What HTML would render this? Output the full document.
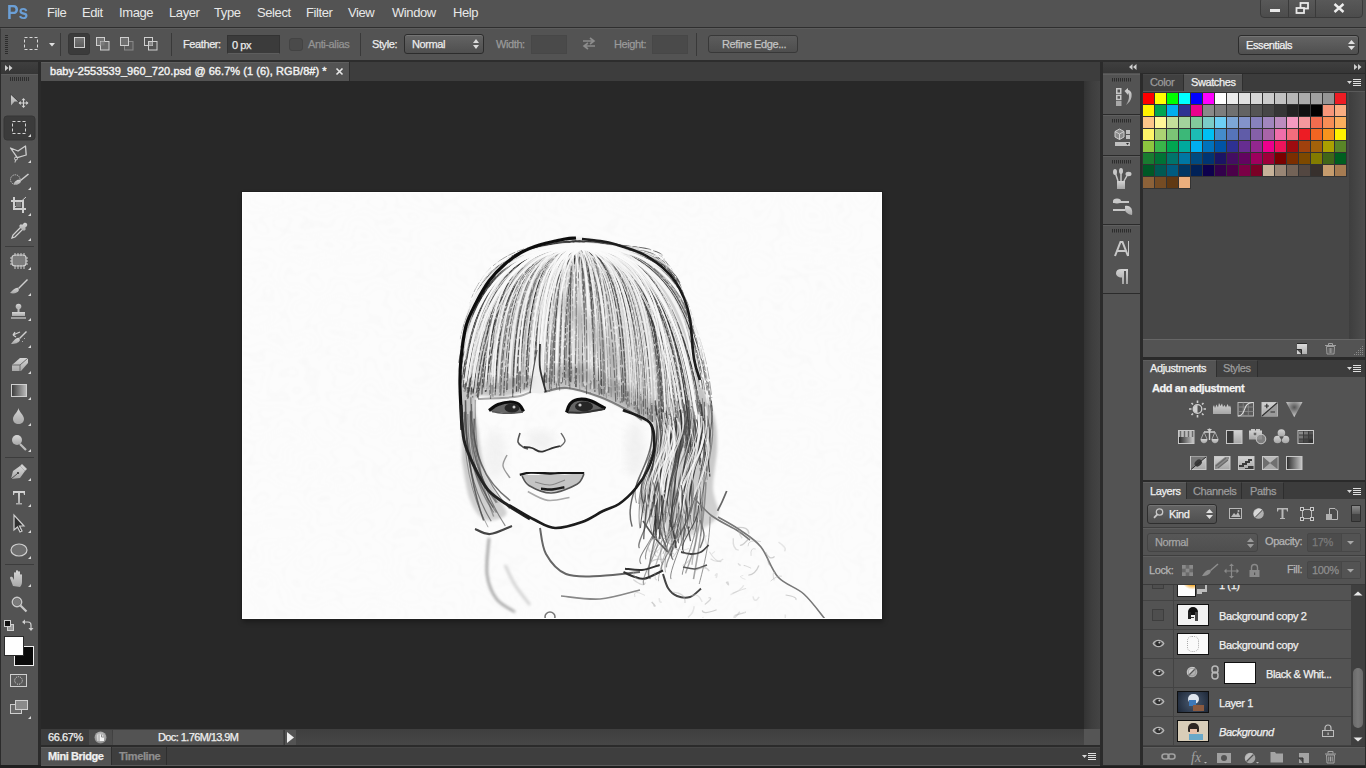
<!DOCTYPE html>
<html><head><meta charset="utf-8">
<style>
*{margin:0;padding:0;box-sizing:border-box}
html,body{width:1366px;height:768px;overflow:hidden;background:#282828;font-family:"Liberation Sans",sans-serif;color:#dcdcdc}
.a{position:absolute}
svg{position:absolute;overflow:visible}
.t{position:absolute;white-space:nowrap;font-size:11px;line-height:13px;letter-spacing:-0.4px;-webkit-text-stroke:0.25px currentColor}
#menubar span{position:absolute;top:5px;font-size:13px;line-height:15px;color:#e8e8e8;letter-spacing:-0.4px}
.sep{position:absolute;width:1px;background:#393939}
.field{position:absolute;background:#3b3b3b;border:1px solid #333;border-bottom-color:#5d5d5d}
.dd{position:absolute;border:1px solid #2c2c2c;border-radius:3px;background:linear-gradient(#646464,#4f4f4f);box-shadow:inset 0 1px 0 #747474}
.tabon{position:absolute;background:#535353;border-top:1px solid #5e5e5e}
.taboff{position:absolute;background:#3e3e3e;border-right:1px solid #2e2e2e}
.sw{position:absolute;width:11px;height:11px}
</style></head><body>
<!-- base frame -->
<div class="a" style="left:0;top:0;width:1366px;height:768px;background:#2a2a2a"></div>
<!-- menubar -->
<div id="menubar" class="a" style="left:0;top:0;width:1366px;height:27px;background:#535353">
 <span style="left:7px;top:1px;font-size:20px;line-height:22px;font-weight:bold;color:#6b9fd6;letter-spacing:0;transform:scaleX(0.87);transform-origin:left">Ps</span>
 <span style="left:47px">File</span>
 <span style="left:82px">Edit</span>
 <span style="left:119px">Image</span>
 <span style="left:169px">Layer</span>
 <span style="left:214px">Type</span>
 <span style="left:257px">Select</span>
 <span style="left:306px">Filter</span>
 <span style="left:348px">View</span>
 <span style="left:392px">Window</span>
 <span style="left:453px">Help</span>
</div>
<!-- window controls -->
<div class="a" style="left:1260px;top:-3px;width:103px;height:21px;border:1px solid #3a3a3a;border-radius:4px;background:linear-gradient(#5a5a5a,#4c4c4c)"></div>
<div class="a" style="left:1288px;top:0;width:1px;height:17px;background:#3a3a3a"></div>
<div class="a" style="left:1315px;top:0;width:1px;height:17px;background:#3a3a3a"></div>
<div class="a" style="left:1270px;top:9px;width:10px;height:3px;background:#e8e8e8"></div>
<svg style="left:1295px;top:1px" width="14" height="13"><rect x="5.5" y="2" width="7.5" height="5.5" fill="none" stroke="#e8e8e8" stroke-width="1.8"/><rect x="1.5" y="7" width="7.5" height="5" fill="#505050" stroke="#e8e8e8" stroke-width="1.8"/></svg>
<svg style="left:1333px;top:3px" width="12" height="10"><path d="M1.5 1 L10.5 9 M10.5 1 L1.5 9" stroke="#ececec" stroke-width="2.4"/></svg>

<!-- options bar -->
<div class="a" style="left:0;top:27px;width:1366px;height:1px;background:#2f2f2f"></div>
<div class="a" style="left:0;top:28px;width:1366px;height:32px;background:#535353;border-top:1px solid #5c5c5c;border-left:1px solid #3a3a3a"></div>
<div class="a" style="left:0;top:60px;width:1366px;height:2px;background:#2d2d2d"></div>
<!-- grip -->
<svg style="left:5px;top:35px" width="3" height="20"><g stroke="#2c2c2c" stroke-width="1"><path d="M0 0.5H3M0 2.5H3M0 4.5H3M0 6.5H3M0 8.5H3M0 10.5H3M0 12.5H3M0 14.5H3M0 16.5H3M0 18.5H3"/></g></svg>
<svg style="left:24px;top:37px" width="15" height="14"><rect x="0.5" y="0.5" width="13" height="12" fill="none" stroke="#d8d8d8" stroke-dasharray="3 2"/></svg>
<svg style="left:49px;top:43px" width="6" height="4"><path d="M0 0H6L3 3.5Z" fill="#e0e0e0"/></svg>
<div class="sep" style="left:60px;top:33px;height:23px"></div>
<div class="a" style="left:68px;top:33px;width:22px;height:22px;background:#3b3b3b;border-radius:3px;border:1px solid #373737"></div>
<svg style="left:74px;top:37px" width="11" height="11"><defs><linearGradient id="g1" x1="0" y1="0" x2="0" y2="1"><stop offset="0" stop-color="#777"/><stop offset="1" stop-color="#5a5a5a"/></linearGradient></defs><rect x="0.5" y="0.5" width="10" height="10" fill="url(#g1)" stroke="#d0d0d0"/></svg>
<svg style="left:96px;top:37px" width="14" height="14"><rect x="0.5" y="0.5" width="8" height="8" fill="#727272" stroke="#cfcfcf"/><rect x="4.5" y="4.5" width="8.5" height="8.5" fill="#6a6a6a" stroke="#cfcfcf"/><rect x="4.5" y="4.5" width="4" height="4" fill="#7a7a7a"/></svg>
<svg style="left:120px;top:37px" width="14" height="14"><rect x="4.5" y="4.5" width="8.5" height="8.5" fill="#5a5a5a" stroke="#8a8a8a"/><rect x="0.5" y="0.5" width="8" height="8" fill="#707070" stroke="#cfcfcf"/></svg>
<svg style="left:144px;top:37px" width="14" height="14"><rect x="0.5" y="0.5" width="8" height="8" fill="none" stroke="#cfcfcf"/><rect x="4.5" y="4.5" width="8.5" height="8.5" fill="none" stroke="#cfcfcf"/><rect x="5" y="5" width="3.5" height="3.5" fill="#888"/></svg>
<div class="sep" style="left:171px;top:33px;height:23px"></div>
<div class="t" style="left:183px;top:38px;color:#ececec">Feather:</div>
<div class="field" style="left:227px;top:35px;width:53px;height:19px"></div>
<div class="t" style="left:232px;top:39px;color:#ececec">0 px</div>
<div class="a" style="left:289px;top:38px;width:14px;height:13px;border-radius:3px;background:#4a4a4a;border:1px solid #434343"></div>
<div class="t" style="left:308px;top:38px;color:#939393">Anti-alias</div>
<div class="sep" style="left:360px;top:33px;height:23px"></div>
<div class="t" style="left:372px;top:38px;color:#ececec">Style:</div>
<div class="dd" style="left:404px;top:34px;width:80px;height:20px"></div>
<div class="t" style="left:412px;top:38px;color:#ececec">Normal</div>
<svg style="left:473px;top:38px" width="6" height="12"><path d="M0 5L3 1L6 5ZM0 7L3 11L6 7Z" fill="#dcdcdc"/></svg>
<div class="t" style="left:496px;top:38px;color:#9a9a9a">Width:</div>
<div class="a" style="left:531px;top:35px;width:36px;height:19px;background:#4a4a4a;border:1px solid #474747"></div>
<svg style="left:582px;top:37px" width="14" height="13"><path d="M1 4H11M8 1L12 4L8 7" fill="none" stroke="#8c8c8c" stroke-width="1.6"/><path d="M13 9H3M6 6L2 9L6 12" fill="none" stroke="#8c8c8c" stroke-width="1.6"/></svg>
<div class="t" style="left:614px;top:38px;color:#9a9a9a">Height:</div>
<div class="a" style="left:652px;top:35px;width:36px;height:19px;background:#4a4a4a;border:1px solid #474747"></div>
<div class="sep" style="left:696px;top:33px;height:23px"></div>
<div class="a" style="left:708px;top:35px;width:90px;height:18px;border:1px solid #383838;border-radius:3px;background:linear-gradient(#5c5c5c,#4e4e4e)"></div>
<div class="t" style="left:722px;top:38px;color:#c4c4c4">Refine Edge...</div>
<div class="dd" style="left:1238px;top:35px;width:121px;height:20px"></div>
<div class="t" style="left:1246px;top:39px;color:#f0f0f0">Essentials</div>
<svg style="left:1348px;top:39px" width="7" height="12"><path d="M0 5L3.5 1L7 5ZM0 7L3.5 11L7 7Z" fill="#e0e0e0"/></svg>

<!-- left toolbar -->
<div class="a" style="left:0;top:62px;width:38px;height:12px;background:linear-gradient(#3f3f3f,#363636)"></div>
<svg style="left:5px;top:65px" width="8" height="6"><path d="M0 0L3.5 3L0 6ZM4 0L7.5 3L4 6Z" fill="#cfcfcf"/></svg>
<div class="a" style="left:0;top:74px;width:38px;height:691px;background:#535353;border-top:1px solid #5c5c5c"></div>
<svg style="left:10px;top:77px" width="20" height="4"><path d="M0.5 0V4M2.5 0V4M4.5 0V4M6.5 0V4M8.5 0V4M10.5 0V4M12.5 0V4M14.5 0V4M16.5 0V4M18.5 0V4" stroke="#2e2e2e"/></svg>
<div class="a" style="left:38px;top:62px;width:3px;height:703px;background:#2b2b2b"></div>

<!-- TOOLS -->
<svg style="left:0;top:0" width="38" height="768">
<defs>
<linearGradient id="tg" x1="0" y1="0" x2="0" y2="1"><stop offset="0" stop-color="#d6d6d6"/><stop offset="1" stop-color="#a8a8a8"/></linearGradient>
<linearGradient id="tg2" x1="0" y1="0" x2="1" y2="0"><stop offset="0" stop-color="#3a3a3a"/><stop offset="1" stop-color="#bdbdbd"/></linearGradient>
</defs>
<rect x="4" y="116" width="31" height="24" rx="3" fill="#3b3b3b" stroke="#363636"/>
<g fill="#d8d8d8">
<!-- corner triangles -->
<path d="M28 137H31V134Z"/><path d="M28 163H31V160Z"/><path d="M28 190H31V187Z"/><path d="M28 216H31V213Z"/><path d="M28 241H31V238Z"/><path d="M28 270H31V267Z"/><path d="M28 296H31V293Z"/><path d="M28 321H31V318Z"/><path d="M28 348H31V345Z"/><path d="M28 374H31V371Z"/><path d="M28 400H31V397Z"/><path d="M28 426H31V423Z"/><path d="M28 452H31V449Z"/><path d="M28 481H31V478Z"/><path d="M28 507H31V504Z"/><path d="M28 533H31V530Z"/><path d="M28 559H31V556Z"/><path d="M28 587H31V584Z"/><path d="M28 719H31V716Z"/>
</g>
<!-- move -->
<path d="M11 94.5L18.5 101.5H14.5L11 105.5Z" fill="url(#tg)"/>
<path d="M10.5 94L18.8 101.8" stroke="#2e2e2e" stroke-width="0.8"/>
<path d="M23.5 99V107M19.5 103H27.5" stroke="#d4d4d4" stroke-width="1.1"/>
<path d="M23.5 98L21.5 100.3H25.5ZM23.5 108L21.5 105.7H25.5ZM18.5 103L20.8 101V105ZM28.5 103L26.2 101V105Z" fill="#d4d4d4"/>
<!-- marquee selected -->
<rect x="12.5" y="121.5" width="13" height="12" fill="none" stroke="#d4d4d4" stroke-dasharray="3 2"/>
<!-- lasso -->
<path d="M10.5 148L18 151L25.5 146L26.2 155L17.3 157.7Z" fill="none" stroke="#cfcfcf" stroke-width="1.3" stroke-linejoin="round"/>
<circle cx="16" cy="158.5" r="1.5" fill="none" stroke="#cfcfcf" stroke-width="1"/>
<path d="M15.5 160L15 162.5" stroke="#cfcfcf" stroke-width="1"/>
<!-- quick selection -->
<circle cx="15.3" cy="179.6" r="4.8" fill="none" stroke="#d8d8d8" stroke-width="1" stroke-dasharray="1 1"/>
<path d="M28 173.5L29 174.5L21 181L20 180Z" fill="#cfcfcf"/>
<path d="M20 180C17 179 14 182 13.5 184.5C17 185 20.5 184 21 181Z" fill="url(#tg)"/>
<!-- crop -->
<path d="M14 197V209H26M11 201H23V213" fill="none" stroke="#cfcfcf" stroke-width="2"/>
<path d="M15 207L26 197" stroke="#cfcfcf" stroke-width="1"/>
<rect x="16" y="202" width="5" height="5" fill="#7a7a7a"/>
<!-- eyedropper -->
<path d="M12 238L13 235L21 227L23 229L15 237Z" fill="none" stroke="#d0d0d0" stroke-width="1.3"/>
<path d="M19 226L24 231L26 229L25 228L27 226C28 224 26 222 24 223L22 225L21 224Z" fill="url(#tg)"/>
<!-- separator -->
<path d="M5 246.5H34" stroke="#3c3c3c"/>
<!-- healing -->
<rect x="12" y="255" width="14" height="11" rx="3" fill="#7c7c7c" stroke="#cfcfcf" stroke-width="1.2"/>
<path d="M15 253V256M18 253V256M21 253V256M24 253V256M15 265V269M18 265V269M21 265V269M24 265V269M10 258H12M10 261H12M10 264H12M26 258H28M26 261H28M26 264H28" stroke="#cfcfcf" stroke-width="1"/>
<!-- brush -->
<path d="M27 279L28 280L19 289L18 288Z" fill="#cfcfcf"/>
<path d="M18 288C16 287 13 290 10 293C14 294 18 293 19 290Z" fill="url(#tg)"/>
<!-- stamp -->
<circle cx="18.5" cy="306.5" r="2.8" fill="url(#tg)"/>
<path d="M17.5 308H19.5V312H17.5Z" fill="#bcbcbc"/>
<path d="M12 312H25V316H12Z" fill="url(#tg)"/>
<path d="M11 318H26" stroke="#cfcfcf" stroke-width="1.2"/>
<!-- history brush -->
<path d="M13 335L20 332M13 335L15 332M13 335L16 337" fill="none" stroke="#cfcfcf" stroke-width="1.3"/>
<path d="M26 331L27 332L20 339L19 338Z" fill="#cfcfcf"/>
<path d="M19 338C17 337 14 340 11 344C15 344 19 343 20 340Z" fill="url(#tg)"/>
<path d="M22 342L23 341M24 339L25 338" stroke="#cfcfcf" stroke-dasharray="1 1"/>
<!-- eraser -->
<path d="M12 365L20 358H28L28 363L21 371H12Z" fill="url(#tg)"/>
<path d="M12 365H20L28 358M20 365V371" fill="none" stroke="#6a6a6a" stroke-width="1"/>
<!-- gradient -->
<rect x="11.5" y="384.5" width="15" height="12" fill="url(#tg2)" stroke="#cfcfcf"/>
<!-- blur drop -->
<path d="M18.5 408C18 412 13 415 13 419C13 422 15.5 424 18.5 424C21.5 424 24 422 24 419C24 415 19 412 18.5 408Z" fill="url(#tg)"/>
<!-- dodge -->
<circle cx="17" cy="440" r="5" fill="url(#tg)"/>
<path d="M20 444L26 450" stroke="#bcbcbc" stroke-width="2.2"/>
<!-- separator -->
<path d="M5 457.5H34" stroke="#3c3c3c"/>
<!-- pen -->
<path d="M11 479L13 471L20 466L25 471L20 478Z" fill="url(#tg)"/>
<path d="M22 464L27 469L25 471L20 466Z" fill="#cfcfcf"/>
<circle cx="18" cy="473" r="1.1" fill="#333"/><path d="M11 479L17.5 473.5" stroke="#333" stroke-width="0.8"/>
<!-- type -->
<path d="M13 491H25V495H24L23.5 493H20V503H22V504.5H16V503H18V493H14.5L14 495H13Z" fill="url(#tg)"/>
<!-- path selection -->
<path d="M14 515V530L17.5 527L20 532L22 531L19.5 526H24Z" fill="#2e2e2e" stroke="#cfcfcf" stroke-width="1.2"/>
<!-- ellipse -->
<ellipse cx="19" cy="550" rx="8" ry="6" fill="#6e6e6e" stroke="#cfcfcf" stroke-width="1.2"/>
<!-- separator -->
<path d="M5 564.5H34" stroke="#3c3c3c"/>
<!-- hand -->
<path d="M13 586L10 578C10 577 12 576 13 578L14 580V573C14 572 16 572 16 573V578V571C16 570 18 570 18 571V578V572C18 571 20 571 20 572V579V575C20 574 22 574 22 575V582C22 584 21 586 20 587Z" fill="url(#tg)"/>
<!-- zoom -->
<circle cx="17" cy="602" r="4.6" fill="none" stroke="#c8c8c8" stroke-width="1.6"/>
<circle cx="17" cy="602" r="3.5" fill="#7a7a7a"/>
<path d="M20.5 605.5L26.5 611.5" stroke="#c8c8c8" stroke-width="2.2"/>
<!-- default colors -->
<rect x="7.5" y="624.5" width="6" height="6" fill="#9a9a9a" stroke="#cfcfcf"/>
<rect x="4.5" y="620.5" width="6" height="6" fill="#111" stroke="#cfcfcf"/>
<!-- swap -->
<path d="M23 622H28C30 622 31 623 31 625V629" fill="none" stroke="#cfcfcf" stroke-width="1.2"/>
<path d="M22 622L25 619.5V624.5ZM31 631L28.5 628H33.5Z" fill="#cfcfcf"/>
<!-- colors -->
<rect x="14.5" y="646.5" width="19" height="19" fill="#0a0a0a" stroke="#f0f0f0"/>
<rect x="4.5" y="636.5" width="19" height="19" fill="#fefefe" stroke="#2a2a2a"/>
<!-- quick mask -->
<rect x="10.5" y="674.5" width="16" height="12" fill="#5a5a5a" stroke="#cfcfcf"/>
<circle cx="18.5" cy="680.5" r="3.8" fill="none" stroke="#e0e0e0" stroke-dasharray="1 1.1"/>
<!-- screen mode -->
<rect x="10.5" y="704.5" width="11" height="9" fill="#6a6a6a" stroke="#cfcfcf"/>
<rect x="15.5" y="700.5" width="12" height="9" fill="#8a8a8a" stroke="#cfcfcf"/>
</svg>

<div class="a" style="left:0;top:61px;width:1px;height:707px;background:#2b2b2b"></div>
<!-- document tab row -->
<div class="a" style="left:41px;top:62px;width:1059px;height:19px;background:#3d3d3d"></div>
<div class="tabon" style="left:41px;top:62px;width:308px;height:19px"></div>
<div class="a" style="left:349px;top:62px;width:1px;height:19px;background:#2e2e2e"></div>
<div class="t" id="doctab" style="left:50px;top:65px;font-size:11px;color:#f2f2f2;letter-spacing:0.05px;-webkit-text-stroke:0.4px #f2f2f2">baby-2553539_960_720.psd @ 66.7% (1 (6), RGB/8#) *</div>
<svg style="left:336px;top:68px" width="7" height="7"><path d="M0.5 0.5L6.5 6.5M6.5 0.5L0.5 6.5" stroke="#e8e8e8" stroke-width="1.6"/></svg>

<!-- canvas -->
<div class="a" style="left:41px;top:81px;width:1043px;height:648px;background:#282828"></div>
<div class="a" style="left:1084px;top:81px;width:16px;height:648px;background:linear-gradient(90deg,#333 0%,#3e3e3e 50%,#444 100%)"></div>
<!-- status bar -->
<div class="a" style="left:41px;top:729px;width:1043px;height:16px;background:linear-gradient(#3f3f3f,#474747)"></div>
<div class="a" style="left:1084px;top:729px;width:16px;height:16px;background:#555"></div>
<div class="a" style="left:41px;top:729px;width:48px;height:16px;background:#3c3c3c"></div>
<div class="t" style="left:48px;top:731px;color:#f0f0f0">66.67%</div>
<div class="a" style="left:89px;top:730px;width:23px;height:15px;background:#4c4c4c"></div>
<svg style="left:94px;top:731px" width="13" height="13"><defs><radialGradient id="sg" cx="0.5" cy="0.4" r="0.6"><stop offset="0" stop-color="#d8d8d8"/><stop offset="1" stop-color="#8a8a8a"/></radialGradient></defs><circle cx="6.5" cy="6.5" r="6" fill="url(#sg)"/><path d="M3.5 3.5H7.5L10 6V10H3.5Z" fill="#f4f4f4"/><path d="M5 3.5V10" stroke="#777" stroke-width="0.8"/><path d="M7.5 3.5V6H10" fill="none" stroke="#777" stroke-width="0.8"/></svg>
<div class="a" style="left:113px;top:730px;width:170px;height:15px;background:#535353"></div>
<div class="t" style="left:158px;top:731px;color:#f0f0f0;letter-spacing:-0.6px">Doc: 1.76M/13.9M</div>
<div class="a" style="left:284px;top:730px;width:12px;height:15px;background:#535353;border-left:1px solid #3a3a3a"></div>
<svg style="left:287px;top:732px" width="7" height="11"><path d="M0 0L7 5.5L0 11Z" fill="#f0f0f0"/></svg>
<div class="a" style="left:41px;top:745px;width:1059px;height:2px;background:#2b2b2b"></div>
<!-- mini bridge bar -->
<div class="a" style="left:41px;top:747px;width:1059px;height:18px;background:#3e3e3e;border-top:1px solid #464646"></div>
<div class="a" style="left:41px;top:765px;width:1059px;height:1px;background:#5a5a5a"></div>
<div class="tabon" style="left:41px;top:747px;width:70px;height:18px"></div>
<div class="a" style="left:111px;top:747px;width:1px;height:18px;background:#2e2e2e"></div>
<div class="t" style="left:48px;top:750px;font-weight:bold;color:#f0f0f0">Mini Bridge</div>
<div class="t" style="left:119px;top:750px;font-weight:bold;color:#8e8e8e">Timeline</div>
<div class="a" style="left:166px;top:747px;width:1px;height:18px;background:#2e2e2e"></div>
<svg style="left:1082px;top:752px" width="14" height="9"><path d="M0 3H5L2.5 6Z" fill="#d8d8d8"/><path d="M6 1.5H14M6 3.5H14M6 5.5H14M6 7.5H14" stroke="#e0e0e0"/></svg>
<div class="a" style="left:0;top:766px;width:1366px;height:2px;background:#1f1f1f"></div>
<div class="a" style="left:0;top:765px;width:41px;height:1px;background:#1f1f1f"></div>
<div class="a" style="left:1100px;top:765px;width:266px;height:1px;background:#2b2b2b"></div>

<!-- right dock -->
<div class="a" style="left:1100px;top:62px;width:3px;height:703px;background:#2b2b2b"></div>
<div class="a" style="left:1103px;top:62px;width:263px;height:11px;background:linear-gradient(#3f3f3f,#363636)"></div>
<svg style="left:1129px;top:64px" width="8" height="6"><path d="M3.5 0L0 3L3.5 6ZM7.5 0L4 3L7.5 6Z" fill="#cfcfcf"/></svg>
<svg style="left:1354px;top:64px" width="8" height="6"><path d="M0 0L3.5 3L0 6ZM4 0L7.5 3L4 6Z" fill="#cfcfcf"/></svg>
<div class="a" style="left:1103px;top:73px;width:37px;height:692px;background:#535353"></div>
<div class="a" style="left:1140px;top:73px;width:3px;height:692px;background:#2b2b2b"></div>
<div class="a" style="left:1365px;top:62px;width:1px;height:706px;background:#2b2b2b"></div>

<!-- DOCK GROUPS -->
<div class="a" style="left:1103px;top:74px;width:37px;height:691px;background:#535353"></div>
<div class="a" style="left:1103px;top:114px;width:37px;height:1px;background:#2b2b2b"></div>
<div class="a" style="left:1103px;top:155px;width:37px;height:1px;background:#2b2b2b"></div>
<div class="a" style="left:1103px;top:224px;width:37px;height:1px;background:#2b2b2b"></div>
<div class="a" style="left:1103px;top:293px;width:37px;height:1px;background:#2b2b2b"></div>
<div class="a" style="left:1103px;top:74px;width:37px;height:1px;background:#5f5f5f"></div>
<div class="a" style="left:1103px;top:115px;width:37px;height:1px;background:#5f5f5f"></div>
<div class="a" style="left:1103px;top:156px;width:37px;height:1px;background:#5f5f5f"></div>
<div class="a" style="left:1103px;top:225px;width:37px;height:1px;background:#5f5f5f"></div>
<svg style="left:1103px;top:0" width="37" height="300">
<defs><linearGradient id="dg" x1="0" y1="0" x2="0" y2="1"><stop offset="0" stop-color="#d4d4d4"/><stop offset="1" stop-color="#a4a4a4"/></linearGradient></defs>
<g stroke="#2c2c2c"><path d="M9.5 78V81.5M11.5 78V81.5M13.5 78V81.5M15.5 78V81.5M17.5 78V81.5M19.5 78V81.5M21.5 78V81.5M23.5 78V81.5M25.5 78V81.5M27.5 78V81.5"/>
<path d="M9.5 119V122.5M11.5 119V122.5M13.5 119V122.5M15.5 119V122.5M17.5 119V122.5M19.5 119V122.5M21.5 119V122.5M23.5 119V122.5M25.5 119V122.5M27.5 119V122.5"/>
<path d="M9.5 160V163.5M11.5 160V163.5M13.5 160V163.5M15.5 160V163.5M17.5 160V163.5M19.5 160V163.5M21.5 160V163.5M23.5 160V163.5M25.5 160V163.5M27.5 160V163.5"/>
<path d="M9.5 229V232.5M11.5 229V232.5M13.5 229V232.5M15.5 229V232.5M17.5 229V232.5M19.5 229V232.5M21.5 229V232.5M23.5 229V232.5M25.5 229V232.5M27.5 229V232.5"/></g>
<!-- history -->
<rect x="13" y="88" width="5.5" height="6" fill="#c8c8c8"/><rect x="14.5" y="89.5" width="2.5" height="3" fill="#555"/>
<rect x="13" y="94.7" width="5.5" height="5.5" fill="#c8c8c8"/><rect x="14.5" y="96.2" width="2.5" height="2.5" fill="#555"/>
<rect x="13" y="101" width="5.5" height="5" fill="#a8a8a8"/>
<path d="M21.5 91L25 88V90C28.5 90.5 29 94 28.5 97C28 100 26 103 23 105C25 102 26 99 26 96.5C26 94 25 93 25 93V95Z" fill="url(#dg)"/>
<!-- 3d -->
<path d="M12 131.5L16.5 129L21 131.5V137L16.5 139.5L12 137Z" fill="#8a8a8a" stroke="#cfcfcf"/>
<path d="M12 131.5L16.5 134L21 131.5M16.5 134V139.5" fill="none" stroke="#cfcfcf"/>
<rect x="23" y="130" width="4" height="4" fill="#c0c0c0"/><rect x="23" y="135" width="4" height="4" fill="#c0c0c0"/>
<rect x="12" y="142" width="15" height="4" fill="#c0c0c0"/><path d="M23 143H26L24.5 145Z" fill="#2a2a2a"/>
<!-- brushes -->
<path d="M14 181H22V189H14Z" fill="url(#dg)"/>
<path d="M15 181L12 172M18 181L18 171M21 181L25 174" stroke="#c8c8c8" stroke-width="1.5"/>
<ellipse cx="12" cy="172" rx="2" ry="3" fill="#c8c8c8"/><ellipse cx="18" cy="171" rx="2" ry="3" fill="#c8c8c8"/><ellipse cx="25.5" cy="174" rx="3" ry="2.2" fill="#c8c8c8"/>
<!-- brush presets -->
<path d="M10 202H26M10 210H22" stroke="#c8c8c8" stroke-width="2"/>
<ellipse cx="14" cy="201" rx="4" ry="2.5" fill="#c8c8c8"/>
<path d="M22 206C28 205 30 210 29 215C26 215 22 212 22 210Z" fill="url(#dg)"/>
<!-- character -->
<path d="M12 256L17.5 242H19.5L25 256M14.2 251H22.8" fill="none" stroke="#c8c8c8" stroke-width="2"/>
<path d="M25.5 241V256" stroke="#c8c8c8" stroke-width="1"/>
<!-- paragraph -->
<path d="M18.5 269H25V284H23V271H21V284H19V277.5C15 277.5 13 275.5 13 273.2C13 270.5 15 269 18.5 269Z" fill="url(#dg)"/>
</svg>

<!-- SWATCHES PANEL -->
<div class="a" style="left:1143px;top:74px;width:222px;height:17px;background:#3c3c3c"></div>
<div class="taboff" style="left:1143px;top:74px;width:41px;height:17px;background:#404040;border-top:1px solid #474747"></div>
<div class="tabon" style="left:1184px;top:74px;width:58px;height:18px"></div>
<div class="a" style="left:1242px;top:74px;width:1px;height:17px;background:#2f2f2f"></div>
<div class="t" style="left:1150px;top:76px;color:#9c9c9c">Color</div>
<div class="t" style="left:1191px;top:76px;color:#f0f0f0">Swatches</div>
<svg style="left:1347px;top:78px" width="14" height="9"><path d="M0 3H5L2.5 6Z" fill="#d8d8d8"/><path d="M6 1.5H14M6 3.5H14M6 5.5H14M6 7.5H14" stroke="#e0e0e0"/></svg>
<div class="a" style="left:1143px;top:91px;width:222px;height:248px;background:#474747;border-top:1px solid #5a5a5a"></div>
<div class="a" style="left:1349px;top:92px;width:16px;height:247px;background:linear-gradient(90deg,#3e3e3e,#474747 60%,#4d4d4d)"></div>
<div id="swatches"><div class="a" style="left:1142px;top:92px;width:205px;height:85px;background:#333"></div>
<div class="a" style="left:1142px;top:176px;width:49px;height:13px;background:#333"></div>
<div class="sw" style="left:1143px;top:93px;background:rgb(255, 0, 0)"></div>
<div class="sw" style="left:1155px;top:93px;background:rgb(255, 255, 0)"></div>
<div class="sw" style="left:1167px;top:93px;background:rgb(0, 255, 0)"></div>
<div class="sw" style="left:1179px;top:93px;background:rgb(0, 255, 255)"></div>
<div class="sw" style="left:1191px;top:93px;background:rgb(0, 0, 255)"></div>
<div class="sw" style="left:1203px;top:93px;background:rgb(255, 0, 255)"></div>
<div class="sw" style="left:1215px;top:93px;background:rgb(255, 255, 255)"></div>
<div class="sw" style="left:1227px;top:93px;background:rgb(235, 235, 235)"></div>
<div class="sw" style="left:1239px;top:93px;background:rgb(224, 224, 224)"></div>
<div class="sw" style="left:1251px;top:93px;background:rgb(215, 215, 215)"></div>
<div class="sw" style="left:1263px;top:93px;background:rgb(204, 204, 204)"></div>
<div class="sw" style="left:1275px;top:93px;background:rgb(194, 194, 194)"></div>
<div class="sw" style="left:1287px;top:93px;background:rgb(183, 183, 183)"></div>
<div class="sw" style="left:1299px;top:93px;background:rgb(172, 172, 172)"></div>
<div class="sw" style="left:1311px;top:93px;background:rgb(161, 161, 161)"></div>
<div class="sw" style="left:1323px;top:93px;background:rgb(149, 149, 149)"></div>
<div class="sw" style="left:1335px;top:93px;background:rgb(237, 28, 36)"></div>
<div class="sw" style="left:1143px;top:105px;background:rgb(255, 242, 0)"></div>
<div class="sw" style="left:1155px;top:105px;background:rgb(0, 166, 81)"></div>
<div class="sw" style="left:1167px;top:105px;background:rgb(0, 174, 239)"></div>
<div class="sw" style="left:1179px;top:105px;background:rgb(46, 49, 146)"></div>
<div class="sw" style="left:1191px;top:105px;background:rgb(236, 0, 140)"></div>
<div class="sw" style="left:1203px;top:105px;background:rgb(137, 137, 137)"></div>
<div class="sw" style="left:1215px;top:105px;background:rgb(125, 125, 125)"></div>
<div class="sw" style="left:1227px;top:105px;background:rgb(112, 112, 112)"></div>
<div class="sw" style="left:1239px;top:105px;background:rgb(99, 99, 99)"></div>
<div class="sw" style="left:1251px;top:105px;background:rgb(85, 85, 85)"></div>
<div class="sw" style="left:1263px;top:105px;background:rgb(70, 70, 70)"></div>
<div class="sw" style="left:1275px;top:105px;background:rgb(54, 54, 54)"></div>
<div class="sw" style="left:1287px;top:105px;background:rgb(35, 35, 35)"></div>
<div class="sw" style="left:1299px;top:105px;background:rgb(17, 17, 17)"></div>
<div class="sw" style="left:1311px;top:105px;background:rgb(0, 0, 0)"></div>
<div class="sw" style="left:1323px;top:105px;background:rgb(246, 150, 121)"></div>
<div class="sw" style="left:1335px;top:105px;background:rgb(249, 173, 129)"></div>
<div class="sw" style="left:1143px;top:117px;background:rgb(253, 198, 137)"></div>
<div class="sw" style="left:1155px;top:117px;background:rgb(255, 247, 153)"></div>
<div class="sw" style="left:1167px;top:117px;background:rgb(196, 223, 155)"></div>
<div class="sw" style="left:1179px;top:117px;background:rgb(163, 211, 156)"></div>
<div class="sw" style="left:1191px;top:117px;background:rgb(130, 202, 156)"></div>
<div class="sw" style="left:1203px;top:117px;background:rgb(122, 204, 200)"></div>
<div class="sw" style="left:1215px;top:117px;background:rgb(109, 207, 246)"></div>
<div class="sw" style="left:1227px;top:117px;background:rgb(125, 167, 216)"></div>
<div class="sw" style="left:1239px;top:117px;background:rgb(131, 147, 202)"></div>
<div class="sw" style="left:1251px;top:117px;background:rgb(135, 129, 189)"></div>
<div class="sw" style="left:1263px;top:117px;background:rgb(161, 134, 190)"></div>
<div class="sw" style="left:1275px;top:117px;background:rgb(189, 140, 191)"></div>
<div class="sw" style="left:1287px;top:117px;background:rgb(244, 154, 193)"></div>
<div class="sw" style="left:1299px;top:117px;background:rgb(245, 152, 157)"></div>
<div class="sw" style="left:1311px;top:117px;background:rgb(242, 108, 79)"></div>
<div class="sw" style="left:1323px;top:117px;background:rgb(246, 142, 86)"></div>
<div class="sw" style="left:1335px;top:117px;background:rgb(251, 175, 93)"></div>
<div class="sw" style="left:1143px;top:129px;background:rgb(255, 245, 104)"></div>
<div class="sw" style="left:1155px;top:129px;background:rgb(172, 211, 115)"></div>
<div class="sw" style="left:1167px;top:129px;background:rgb(124, 197, 118)"></div>
<div class="sw" style="left:1179px;top:129px;background:rgb(60, 184, 120)"></div>
<div class="sw" style="left:1191px;top:129px;background:rgb(28, 187, 180)"></div>
<div class="sw" style="left:1203px;top:129px;background:rgb(0, 191, 243)"></div>
<div class="sw" style="left:1215px;top:129px;background:rgb(68, 140, 203)"></div>
<div class="sw" style="left:1227px;top:129px;background:rgb(86, 116, 185)"></div>
<div class="sw" style="left:1239px;top:129px;background:rgb(96, 92, 168)"></div>
<div class="sw" style="left:1251px;top:129px;background:rgb(133, 96, 168)"></div>
<div class="sw" style="left:1263px;top:129px;background:rgb(168, 100, 168)"></div>
<div class="sw" style="left:1275px;top:129px;background:rgb(240, 110, 170)"></div>
<div class="sw" style="left:1287px;top:129px;background:rgb(242, 109, 125)"></div>
<div class="sw" style="left:1299px;top:129px;background:rgb(237, 28, 36)"></div>
<div class="sw" style="left:1311px;top:129px;background:rgb(242, 101, 34)"></div>
<div class="sw" style="left:1323px;top:129px;background:rgb(247, 148, 29)"></div>
<div class="sw" style="left:1335px;top:129px;background:rgb(255, 242, 0)"></div>
<div class="sw" style="left:1143px;top:141px;background:rgb(141, 198, 63)"></div>
<div class="sw" style="left:1155px;top:141px;background:rgb(57, 181, 74)"></div>
<div class="sw" style="left:1167px;top:141px;background:rgb(0, 166, 81)"></div>
<div class="sw" style="left:1179px;top:141px;background:rgb(0, 169, 157)"></div>
<div class="sw" style="left:1191px;top:141px;background:rgb(0, 174, 239)"></div>
<div class="sw" style="left:1203px;top:141px;background:rgb(0, 114, 188)"></div>
<div class="sw" style="left:1215px;top:141px;background:rgb(0, 84, 166)"></div>
<div class="sw" style="left:1227px;top:141px;background:rgb(46, 49, 146)"></div>
<div class="sw" style="left:1239px;top:141px;background:rgb(102, 45, 145)"></div>
<div class="sw" style="left:1251px;top:141px;background:rgb(146, 39, 143)"></div>
<div class="sw" style="left:1263px;top:141px;background:rgb(236, 0, 140)"></div>
<div class="sw" style="left:1275px;top:141px;background:rgb(237, 20, 91)"></div>
<div class="sw" style="left:1287px;top:141px;background:rgb(158, 11, 15)"></div>
<div class="sw" style="left:1299px;top:141px;background:rgb(160, 65, 13)"></div>
<div class="sw" style="left:1311px;top:141px;background:rgb(163, 98, 10)"></div>
<div class="sw" style="left:1323px;top:141px;background:rgb(171, 160, 0)"></div>
<div class="sw" style="left:1335px;top:141px;background:rgb(89, 133, 39)"></div>
<div class="sw" style="left:1143px;top:153px;background:rgb(25, 123, 48)"></div>
<div class="sw" style="left:1155px;top:153px;background:rgb(0, 114, 54)"></div>
<div class="sw" style="left:1167px;top:153px;background:rgb(0, 116, 107)"></div>
<div class="sw" style="left:1179px;top:153px;background:rgb(0, 118, 163)"></div>
<div class="sw" style="left:1191px;top:153px;background:rgb(0, 74, 128)"></div>
<div class="sw" style="left:1203px;top:153px;background:rgb(0, 52, 113)"></div>
<div class="sw" style="left:1215px;top:153px;background:rgb(27, 20, 100)"></div>
<div class="sw" style="left:1227px;top:153px;background:rgb(68, 14, 98)"></div>
<div class="sw" style="left:1239px;top:153px;background:rgb(99, 4, 96)"></div>
<div class="sw" style="left:1251px;top:153px;background:rgb(158, 0, 93)"></div>
<div class="sw" style="left:1263px;top:153px;background:rgb(158, 0, 57)"></div>
<div class="sw" style="left:1275px;top:153px;background:rgb(121, 0, 0)"></div>
<div class="sw" style="left:1287px;top:153px;background:rgb(123, 46, 0)"></div>
<div class="sw" style="left:1299px;top:153px;background:rgb(125, 73, 0)"></div>
<div class="sw" style="left:1311px;top:153px;background:rgb(130, 123, 0)"></div>
<div class="sw" style="left:1323px;top:153px;background:rgb(64, 102, 24)"></div>
<div class="sw" style="left:1335px;top:153px;background:rgb(0, 94, 32)"></div>
<div class="sw" style="left:1143px;top:165px;background:rgb(0, 88, 38)"></div>
<div class="sw" style="left:1155px;top:165px;background:rgb(0, 89, 82)"></div>
<div class="sw" style="left:1167px;top:165px;background:rgb(0, 91, 127)"></div>
<div class="sw" style="left:1179px;top:165px;background:rgb(0, 54, 99)"></div>
<div class="sw" style="left:1191px;top:165px;background:rgb(0, 33, 87)"></div>
<div class="sw" style="left:1203px;top:165px;background:rgb(13, 0, 76)"></div>
<div class="sw" style="left:1215px;top:165px;background:rgb(50, 0, 75)"></div>
<div class="sw" style="left:1227px;top:165px;background:rgb(75, 0, 73)"></div>
<div class="sw" style="left:1239px;top:165px;background:rgb(123, 0, 70)"></div>
<div class="sw" style="left:1251px;top:165px;background:rgb(122, 0, 38)"></div>
<div class="sw" style="left:1263px;top:165px;background:rgb(199, 178, 153)"></div>
<div class="sw" style="left:1275px;top:165px;background:rgb(153, 134, 117)"></div>
<div class="sw" style="left:1287px;top:165px;background:rgb(115, 99, 87)"></div>
<div class="sw" style="left:1299px;top:165px;background:rgb(83, 71, 65)"></div>
<div class="sw" style="left:1311px;top:165px;background:rgb(55, 48, 45)"></div>
<div class="sw" style="left:1323px;top:165px;background:rgb(198, 156, 109)"></div>
<div class="sw" style="left:1335px;top:165px;background:rgb(166, 124, 82)"></div>
<div class="sw" style="left:1143px;top:177px;background:rgb(140, 98, 57)"></div>
<div class="sw" style="left:1155px;top:177px;background:rgb(117, 76, 36)"></div>
<div class="sw" style="left:1167px;top:177px;background:rgb(96, 57, 19)"></div>
<div class="sw" style="left:1179px;top:177px;background:rgb(235, 175, 125)"></div></div>
<div class="a" style="left:1143px;top:339px;width:222px;height:18px;background:#535353;border-top:1px solid #666"></div>
<svg style="left:1296px;top:343px" width="12" height="12"><defs><linearGradient id="ng" x1="0" y1="0" x2="0" y2="1"><stop offset="0" stop-color="#e0e0e0"/><stop offset="1" stop-color="#b0b0b0"/></linearGradient></defs><rect x="1" y="0" width="10" height="11" fill="url(#ng)"/><path d="M1 0H11V1H1Z" fill="#2a2a2a"/><path d="M0.5 6.5H5.5V11.5" fill="#535353" stroke="#2a2a2a"/><path d="M1 7L5 11H1Z" fill="#d0d0d0"/></svg>
<svg style="left:1325px;top:343px" width="12" height="12"><path d="M0 2.5H11M3.5 2V0.5H7.5V2" fill="none" stroke="#a0a0a0"/><path d="M1.5 3.5H9.5L9 11H2Z" fill="none" stroke="#a0a0a0"/><path d="M4.2 5V10M5.5 5V10M6.8 5V10" stroke="#a0a0a0" stroke-width="0.8"/></svg>
<svg style="left:1354px;top:346px" width="10" height="10"><g fill="#8a8a8a"><rect x="8" y="0" width="1" height="1"/><rect x="6" y="2" width="1" height="1"/><rect x="8" y="2" width="1" height="1"/><rect x="4" y="4" width="1" height="1"/><rect x="6" y="4" width="1" height="1"/><rect x="8" y="4" width="1" height="1"/><rect x="2" y="6" width="1" height="1"/><rect x="4" y="6" width="1" height="1"/><rect x="6" y="6" width="1" height="1"/><rect x="8" y="6" width="1" height="1"/><rect x="0" y="8" width="1" height="1"/><rect x="2" y="8" width="1" height="1"/><rect x="4" y="8" width="1" height="1"/><rect x="6" y="8" width="1" height="1"/><rect x="8" y="8" width="1" height="1"/></g></svg>

<!-- ADJUSTMENTS PANEL -->
<div class="a" style="left:1143px;top:360px;width:222px;height:17px;background:#3c3c3c"></div>
<div class="tabon" style="left:1143px;top:360px;width:73px;height:17px"></div>
<div class="taboff" style="left:1216px;top:360px;width:42px;height:17px;background:#404040;border-top:1px solid #474747;border-left:1px solid #2f2f2f"></div>
<div class="t" style="left:1150px;top:362px;color:#f0f0f0">Adjustments</div>
<div class="t" style="left:1223px;top:362px;color:#9c9c9c">Styles</div>
<svg style="left:1347px;top:364px" width="14" height="9"><path d="M0 3H5L2.5 6Z" fill="#d8d8d8"/><path d="M6 1.5H14M6 3.5H14M6 5.5H14M6 7.5H14" stroke="#e0e0e0"/></svg>
<div class="a" style="left:1143px;top:377px;width:222px;height:103px;background:#535353"></div>
<div class="t" style="left:1152px;top:382px;font-weight:bold;color:#f4f4f4">Add an adjustment</div>
<div id="adjicons"><svg style="left:1170px;top:395px" width="150" height="80">
<defs>
<linearGradient id="ag" x1="0" y1="0" x2="0" y2="1"><stop offset="0" stop-color="#d2d2d2"/><stop offset="1" stop-color="#a6a6a6"/></linearGradient>
<linearGradient id="agh" x1="0" y1="0" x2="1" y2="0"><stop offset="0" stop-color="#2a2a2a"/><stop offset="1" stop-color="#c8c8c8"/></linearGradient>
<radialGradient id="avr" cx="0.5" cy="0.35" r="0.6"><stop offset="0" stop-color="#555"/><stop offset="1" stop-color="#c8c8c8"/></radialGradient>
</defs>
<!-- sun -->
<circle cx="27.5" cy="14" r="4.3" fill="none" stroke="#cfcfcf" stroke-width="1.3"/>
<path d="M27.5 10V18A4 4 0 0 1 27.5 10Z" fill="#cfcfcf"/>
<g stroke="#cfcfcf" stroke-width="1.6"><path d="M27.5 5.5V8M27.5 20V22.5M19 14H21.5M33.5 14H36M21.5 8L23 9.5M32 18.5L33.5 20M21.5 20L23 18.5M32 9.5L33.5 8"/></g>
<!-- levels -->
<path d="M43 19V12L44 10L45 13L46.5 9.5L48 12.5L49 8L50.5 11L52 8.5L53 12L54.5 10L56 12.5L57.5 9L59 12L60 10.5L61 13V19Z" fill="url(#ag)"/>
<!-- curves -->
<rect x="68" y="7.5" width="15.5" height="13.5" fill="#5a5a5a" stroke="#b8b8b8"/>
<path d="M73.2 7.5V21M78.3 7.5V21M68 12H83.5M68 16.5H83.5" stroke="#8a8a8a" stroke-width="0.8"/>
<path d="M68 21C74 21 74 14 76 11C78 8 80 7.5 83.5 7.5" fill="none" stroke="#e0e0e0" stroke-width="1.1"/>
<!-- exposure -->
<rect x="92" y="7.5" width="15.5" height="13.5" fill="url(#ag)" stroke="#c8c8c8"/>
<path d="M92 21L107.5 7.5V21Z" fill="#9a9a9a"/>
<path d="M92 21L107.5 7.5" stroke="#2e2e2e" stroke-width="1.2"/>
<path d="M94.5 11H99M96.8 8.7V13.3M100.5 17H105" stroke="#2e2e2e" stroke-width="1.2"/>
<!-- vibrance -->
<path d="M116 7H132.5L124.25 22.3Z" fill="url(#avr)"/>
<!-- hue/sat -->
<rect x="8.5" y="35.5" width="15.5" height="13" fill="#9a9a9a" stroke="#c8c8c8"/>
<rect x="9" y="36" width="14.5" height="6" fill="#bbb"/>
<path d="M10.5 36V42M14.5 36V42M18.5 36V42M22.5 36V42" stroke="#6a6a6a" stroke-width="1.4"/>
<rect x="9" y="42" width="14.5" height="6" fill="url(#agh)"/>
<!-- color balance -->
<path d="M39.5 33.5V45M34 37H45" stroke="#cfcfcf" stroke-width="1.4"/>
<path d="M37 34L39.5 37L42 34Z" fill="#cfcfcf"/>
<path d="M34 37L31 44M34 37L37 44M45 37L42 44M45 37L48 44" stroke="#bcbcbc" stroke-width="0.8"/>
<path d="M30.5 44H37.5C37.5 47 35.5 48.3 34 48.3C32.5 48.3 30.5 47 30.5 44ZM41.5 44H48.5C48.5 47 46.5 48.3 45 48.3C43.5 48.3 41.5 47 41.5 44Z" fill="url(#ag)"/>
<!-- B&W -->
<rect x="56.5" y="35.5" width="15.5" height="13" fill="url(#ag)" stroke="#c8c8c8"/>
<rect x="57" y="36" width="6.5" height="12" fill="#3a3a3a"/>
<!-- photo filter -->
<rect x="79" y="35.5" width="13" height="9" fill="url(#ag)"/>
<rect x="81" y="34" width="4" height="2" fill="#c8c8c8"/><rect x="86" y="34" width="4" height="2" fill="#c8c8c8"/>
<circle cx="85" cy="39" r="2" fill="#666" stroke="#c8c8c8"/>
<circle cx="91" cy="44" r="4.8" fill="#8a8a8a" fill-opacity="0.8" stroke="#c8c8c8"/>
<!-- channel mixer -->
<circle cx="111.4" cy="38" r="3.8" fill="url(#ag)"/>
<circle cx="107.5" cy="44.5" r="3.8" fill="url(#ag)"/>
<circle cx="115.5" cy="44.5" r="3.8" fill="url(#ag)"/>
<path d="M109 41.5H114L111.5 45Z" fill="#555"/>
<!-- color lookup -->
<rect x="128" y="35.5" width="15.5" height="13" fill="#3a3a3a" stroke="#c8c8c8"/>
<g fill="#8a8a8a"><rect x="129" y="36.5" width="4" height="3"/><rect x="134" y="36.5" width="4" height="3" fill="#777"/><rect x="139" y="36.5" width="4" height="3" fill="#555"/>
<rect x="129" y="40.5" width="4" height="3" fill="#777"/><rect x="134" y="40.5" width="4" height="3" fill="#555"/><rect x="139" y="40.5" width="4" height="3" fill="#444"/>
<rect x="129" y="44.5" width="4" height="3" fill="#555"/><rect x="134" y="44.5" width="4" height="3" fill="#444"/><rect x="139" y="44.5" width="4" height="3" fill="#333"/></g>
<!-- invert -->
<rect x="20.5" y="61.5" width="15.5" height="13" fill="url(#ag)" stroke="#c8c8c8"/>
<path d="M21 74.5L36 62V61.5H21Z" fill="#777"/>
<ellipse cx="28.2" cy="68" rx="4" ry="3" fill="#3a3a3a" transform="rotate(-40 28.2 68)"/>
<path d="M21 74.5L36 62" stroke="#2e2e2e" stroke-width="1"/>
<!-- posterize -->
<rect x="44.5" y="61.5" width="15.5" height="13" fill="url(#ag)" stroke="#c8c8c8"/>
<path d="M45 70L55 62H59V64L47 74H45Z" fill="#8a8a8a"/>
<path d="M46 71L56 63M48 73L58 65" stroke="#6a6a6a" stroke-width="1.2"/>
<!-- threshold -->
<rect x="68.5" y="61.5" width="15.5" height="13" fill="url(#ag)" stroke="#c8c8c8"/>
<path d="M69 70H72V68H75V66H78V64H82V66H80V68H77V70H74V72H69Z" fill="#3a3a3a"/>
<path d="M75 74V73H78V71H83.5V74Z" fill="#3a3a3a"/>
<!-- selective color -->
<rect x="92.5" y="61.5" width="15.5" height="13" fill="#8a8a8a" stroke="#c8c8c8"/>
<path d="M93 62L100 68L107.5 62Z" fill="#b8b8b8"/><path d="M93 74L100 68L107.5 74Z" fill="#a8a8a8"/>
<path d="M93 62L100 68L93 74Z" fill="#6e6e6e"/><path d="M107.5 62L100 68L107.5 74Z" fill="#707070"/>
<!-- gradient map -->
<rect x="116.5" y="61.5" width="15.5" height="13" fill="url(#agh)" stroke="#c8c8c8"/>
</svg>
</div>

<!-- LAYERS PANEL -->
<div class="a" style="left:1143px;top:482px;width:222px;height:18px;background:#3c3c3c"></div>
<div class="tabon" style="left:1143px;top:482px;width:43px;height:18px"></div>
<div class="taboff" style="left:1186px;top:482px;width:56px;height:17px;background:#404040;border-top:1px solid #474747;border-left:1px solid #2f2f2f"></div>
<div class="taboff" style="left:1242px;top:482px;width:42px;height:17px;background:#404040;border-top:1px solid #474747"></div>
<div class="t" style="left:1150px;top:485px;color:#f0f0f0">Layers</div>
<div class="t" style="left:1193px;top:485px;color:#9c9c9c">Channels</div>
<div class="t" style="left:1250px;top:485px;color:#9c9c9c">Paths</div>
<svg style="left:1347px;top:487px" width="14" height="9"><path d="M0 3H5L2.5 6Z" fill="#d8d8d8"/><path d="M6 1.5H14M6 3.5H14M6 5.5H14M6 7.5H14" stroke="#e0e0e0"/></svg>
<div class="a" style="left:1143px;top:499px;width:222px;height:266px;background:#535353"></div>
<div id="layers"><!-- filter row -->
<div class="dd" style="left:1147px;top:504px;width:70px;height:20px;border-color:#2e2e2e"></div>
<svg style="left:1153px;top:508px" width="11" height="11"><circle cx="6.5" cy="4" r="3.2" fill="none" stroke="#c8c8c8" stroke-width="1.3"/><path d="M4.3 6.3L1 9.8" stroke="#c8c8c8" stroke-width="1.8"/></svg>
<div class="t" style="left:1169px;top:508px;color:#f0f0f0">Kind</div>
<svg style="left:1206px;top:508px" width="7" height="12"><path d="M0 5L3.5 1L7 5ZM0 7L3.5 11L7 7Z" fill="#e0e0e0"/></svg>
<svg style="left:1143px;top:500px" width="222" height="30">
<!-- image -->
<rect x="86.5" y="8.5" width="12" height="10" fill="#4a4a4a" stroke="#b8b8b8"/>
<path d="M88 17L91 13L93 15L95 12L97.5 17Z" fill="#b8b8b8"/><circle cx="95.5" cy="11" r="1" fill="#b8b8b8"/>
<!-- adj -->
<circle cx="115.5" cy="13.5" r="5.3" fill="#b0b0b0"/>
<path d="M112 17L119 10" stroke="#3a3a3a" stroke-width="1.2"/>
<path d="M111.8 17.2A5.3 5.3 0 0 1 119.2 9.8Z" fill="#d8d8d8"/>
<!-- T -->
<path d="M134 8H145V11.5H144L143.5 9.5H140.5V18H142V19H137V18H138.5V9.5H135.5L135 11.5H134Z" fill="#b8b8b8"/>
<!-- shape -->
<rect x="159.5" y="9.5" width="9" height="9" fill="none" stroke="#b8b8b8"/>
<g fill="#4a4a4a" stroke="#c8c8c8"><rect x="157.5" y="7.5" width="3" height="3"/><rect x="167.5" y="7.5" width="3" height="3"/><rect x="157.5" y="17.5" width="3" height="3"/><rect x="167.5" y="17.5" width="3" height="3"/></g>
<!-- smart obj -->
<path d="M186.5 8.5H192L194.5 11V19.5H186.5Z" fill="#4a4a4a" stroke="#b8b8b8"/>
<rect x="183" y="14" width="6" height="6" fill="#b0b0b0"/>
<!-- toggle -->
<rect x="208" y="5" width="10" height="17" rx="1" fill="#2e2e2e"/>
<rect x="209" y="6" width="8" height="8" fill="url(#lg1)"/>
<defs><linearGradient id="lg1" x1="0" y1="0" x2="0" y2="1"><stop offset="0" stop-color="#8a8a8a"/><stop offset="1" stop-color="#5a5a5a"/></linearGradient></defs>
<rect x="209" y="14" width="8" height="7" fill="#444"/>
</svg>
<div class="a" style="left:1143px;top:527px;width:222px;height:1px;background:#3e3e3e"></div>
<div class="a" style="left:1143px;top:528px;width:222px;height:1px;background:#5e5e5e"></div>
<!-- blend row -->
<div class="a" style="left:1147px;top:533px;width:111px;height:19px;border:1px solid #444;border-radius:3px;background:linear-gradient(#575757,#4f4f4f)"></div>
<div class="t" style="left:1155px;top:536px;color:#a6a6a6">Normal</div>
<svg style="left:1247px;top:537px" width="7" height="12"><path d="M0 5L3.5 1L7 5ZM0 7L3.5 11L7 7Z" fill="#9a9a9a"/></svg>
<div class="t" style="left:1265px;top:535px;color:#b4b4b4">Opacity:</div>
<div class="a" style="left:1307px;top:533px;width:54px;height:19px;border:1px solid #474747;border-radius:2px;background:#4c4c4c"></div>
<div class="a" style="left:1341px;top:534px;width:19px;height:17px;background:#535353;border-left:1px solid #474747"></div>
<div class="t" style="left:1312px;top:536px;color:#7a7a7a">17%</div>
<svg style="left:1347px;top:541px" width="7" height="4"><path d="M0 0H7L3.5 3.5Z" fill="#a8a8a8"/></svg>
<div class="a" style="left:1143px;top:555px;width:222px;height:1px;background:#3e3e3e"></div>
<div class="a" style="left:1143px;top:556px;width:222px;height:1px;background:#5e5e5e"></div>
<!-- lock row -->
<div class="t" style="left:1149px;top:564px;color:#b4b4b4">Lock:</div>
<svg style="left:1143px;top:557px" width="222" height="28">
<g fill="#8a8a8a"><rect x="39" y="8" width="11" height="11" fill="#6a6a6a"/><rect x="39" y="8" width="3.7" height="3.7"/><rect x="46.3" y="8" width="3.7" height="3.7"/><rect x="42.7" y="11.7" width="3.7" height="3.7"/><rect x="39" y="15.3" width="3.7" height="3.7"/><rect x="46.3" y="15.3" width="3.7" height="3.7"/></g>
<path d="M74.5 6.5L75.5 7.5L68 14L67 13Z" fill="#8e8e8e"/>
<path d="M67 13C64 12 61 16 59 19C63 19 67 18 68 14Z" fill="#8e8e8e"/>
<path d="M88.5 8V20M82.5 14H94.5" stroke="#8a8a8a" stroke-width="1.2"/>
<path d="M88.5 6.5L86 9H91ZM88.5 21.5L86 19H91ZM81 14L83.5 11.5V16.5ZM96 14L93.5 11.5V16.5Z" fill="#8a8a8a"/>
<path d="M108.5 13V10.5A3 3 0 0 1 114.5 10.5V13" fill="none" stroke="#8a8a8a" stroke-width="1.4"/>
<rect x="106.5" y="13" width="10" height="7" fill="#8a8a8a"/><rect x="111" y="15.5" width="1.2" height="2.5" fill="#535353"/>
</svg>
<div class="t" style="left:1287px;top:563px;color:#b4b4b4">Fill:</div>
<div class="a" style="left:1307px;top:561px;width:54px;height:18px;border:1px solid #474747;border-radius:2px;background:#4c4c4c"></div>
<div class="a" style="left:1341px;top:562px;width:19px;height:16px;background:#535353;border-left:1px solid #474747"></div>
<div class="t" style="left:1312px;top:564px;color:#8e8e8e">100%</div>
<svg style="left:1347px;top:569px" width="7" height="4"><path d="M0 0H7L3.5 3.5Z" fill="#a8a8a8"/></svg>
<div class="a" style="left:1143px;top:584px;width:222px;height:1px;background:#3a3a3a"></div>
<!-- layer list -->
<div class="a" style="left:1143px;top:585px;width:208px;height:161px;background:#535353;overflow:hidden">
 <div class="a" style="left:30px;top:0;width:1px;height:161px;background:#434343"></div>
 <div class="a" style="left:0;top:15px;width:208px;height:1px;background:#434343"></div>
 <div class="a" style="left:0;top:44px;width:208px;height:1px;background:#434343"></div>
 <div class="a" style="left:0;top:73px;width:208px;height:1px;background:#434343"></div>
 <div class="a" style="left:0;top:102px;width:208px;height:1px;background:#434343"></div>
 <div class="a" style="left:0;top:131px;width:208px;height:1px;background:#434343"></div>
 <div class="a" style="left:0;top:160px;width:208px;height:1px;background:#434343"></div>
 <!-- row 0 partial -->
 <div class="a" style="left:9px;top:-8px;width:12px;height:12px;border:1px solid #3e3e3e;background:#4e4e4e"></div>
 <div class="a" style="left:34px;top:-10px;width:19px;height:22px;border:1px solid #1e1e1e;background:radial-gradient(circle at 85% 10%,#c8246a 0,#e04a3a 18%,#f5a623 30%,#fff 50%)"></div>
 <svg style="left:54px;top:-4px" width="11" height="16"><rect x="0" y="8" width="5" height="5" fill="#bdbdbd"/><path d="M3 1H10V11H5V8H8V4H3Z" fill="#bdbdbd"/></svg>
 <div class="t" style="left:76px;top:-6px;color:#f0f0f0">1 (1)</div>
 <!-- row 1: Background copy 2 -->
 <div class="a" style="left:9px;top:24px;width:12px;height:12px;border:1px solid #3e3e3e;background:#4e4e4e"></div>
 <div class="a" style="left:34px;top:19px;width:32px;height:22px;border:1px solid #101010;background:#f2f2f2;overflow:hidden">
   <div class="a" style="left:10px;top:2px;width:10px;height:8px;background:#111;border-radius:5px 5px 2px 2px"></div>
   <div class="a" style="left:10px;top:7px;width:3px;height:7px;background:#222"></div>
   <div class="a" style="left:17px;top:7px;width:3px;height:9px;background:#444"></div>
   <div class="a" style="left:13px;top:12px;width:3px;height:1px;background:#333"></div>
 </div>
 <div class="t" style="left:76px;top:25px;color:#f0f0f0">Background copy 2</div>
 <!-- row 2: Background copy -->
 <svg style="left:9px;top:53px" width="13" height="11"><path d="M0.5 5.5C3 0.5 10 0.5 12.5 5.5C10 10.5 3 10.5 0.5 5.5Z" fill="#b8b8b8"/><path d="M2.2 5.5C4 2.2 9 2.2 10.8 5.5C9 8.8 4 8.8 2.2 5.5Z" fill="#505050"/><circle cx="6.5" cy="5.5" r="2.6" fill="#2e2e2e"/><circle cx="7.4" cy="4.5" r="1" fill="#c8c8c8"/></svg>
 <div class="a" style="left:34px;top:48px;width:32px;height:22px;border:1px solid #101010;background:#fafafa;overflow:hidden">
   <div class="a" style="left:9px;top:2px;width:12px;height:16px;border:1px dotted #aaa;border-radius:5px"></div>
 </div>
 <div class="t" style="left:76px;top:54px;color:#f0f0f0">Background copy</div>
 <!-- row 3: Black & White -->
 <svg style="left:9px;top:82px" width="13" height="11"><path d="M0.5 5.5C3 0.5 10 0.5 12.5 5.5C10 10.5 3 10.5 0.5 5.5Z" fill="#b8b8b8"/><path d="M2.2 5.5C4 2.2 9 2.2 10.8 5.5C9 8.8 4 8.8 2.2 5.5Z" fill="#505050"/><circle cx="6.5" cy="5.5" r="2.6" fill="#2e2e2e"/><circle cx="7.4" cy="4.5" r="1" fill="#c8c8c8"/></svg>
 <svg style="left:43px;top:81px" width="12" height="12"><circle cx="6" cy="6" r="5.3" fill="#b0b0b0"/><path d="M2.3 9.7A5.3 5.3 0 0 1 9.7 2.3Z" fill="#d0d0d0"/><path d="M2.5 9.5L9.5 2.5" stroke="#555" stroke-width="1.2"/><circle cx="6" cy="6" r="3.8" fill="none" stroke="#8a8a8a" stroke-width="0.6"/></svg>
 <svg style="left:68px;top:80px" width="9" height="15"><rect x="1" y="1" width="6" height="7" rx="3" fill="none" stroke="#b8b8b8" stroke-width="1.5"/><rect x="1" y="7" width="6" height="7" rx="3" fill="none" stroke="#b8b8b8" stroke-width="1.5"/></svg>
 <div class="a" style="left:81px;top:77px;width:32px;height:22px;border:1px solid #101010;background:#fff"></div>
 <div class="t" style="left:123px;top:83px;color:#f0f0f0">Black &amp; Whit...</div>
 <!-- row 4: Layer 1 -->
 <svg style="left:9px;top:111px" width="13" height="11"><path d="M0.5 5.5C3 0.5 10 0.5 12.5 5.5C10 10.5 3 10.5 0.5 5.5Z" fill="#b8b8b8"/><path d="M2.2 5.5C4 2.2 9 2.2 10.8 5.5C9 8.8 4 8.8 2.2 5.5Z" fill="#505050"/><circle cx="6.5" cy="5.5" r="2.6" fill="#2e2e2e"/><circle cx="7.4" cy="4.5" r="1" fill="#c8c8c8"/></svg>
 <div class="a" style="left:34px;top:106px;width:32px;height:22px;border:1px solid #101010;background:radial-gradient(circle at 50% 50%,#4a5a70,#1e2838);overflow:hidden">
   <div class="a" style="left:10px;top:2px;width:11px;height:10px;background:#e0e6ee;border-radius:5px"></div>
   <div class="a" style="left:11px;top:8px;width:7px;height:6px;background:#3e78b8"></div>
   <div class="a" style="left:15px;top:13px;width:11px;height:6px;background:#8a5a40"></div>
 </div>
 <div class="t" style="left:76px;top:112px;color:#f0f0f0">Layer 1</div>
 <!-- row 5: Background -->
 <svg style="left:9px;top:140px" width="13" height="11"><path d="M0.5 5.5C3 0.5 10 0.5 12.5 5.5C10 10.5 3 10.5 0.5 5.5Z" fill="#b8b8b8"/><path d="M2.2 5.5C4 2.2 9 2.2 10.8 5.5C9 8.8 4 8.8 2.2 5.5Z" fill="#505050"/><circle cx="6.5" cy="5.5" r="2.6" fill="#2e2e2e"/><circle cx="7.4" cy="4.5" r="1" fill="#c8c8c8"/></svg>
 <div class="a" style="left:34px;top:135px;width:32px;height:22px;border:1px solid #101010;background:#d8cdb8;overflow:hidden">
   <div class="a" style="left:10px;top:2px;width:11px;height:9px;background:#2e2622;border-radius:5px 5px 1px 1px"></div>
   <div class="a" style="left:12px;top:8px;width:7px;height:6px;background:#e8c0a8"></div>
   <div class="a" style="left:11px;top:13px;width:14px;height:6px;background:#6aa8c8"></div>
 </div>
 <div class="t" style="left:76px;top:141px;color:#f0f0f0;font-style:italic">Background</div>
 <svg style="left:179px;top:139px" width="12" height="13"><path d="M3 6V4A3 3 0 0 1 9 4V6" fill="none" stroke="#bdbdbd" stroke-width="1.2"/><rect x="0.5" y="6.5" width="11" height="6" fill="none" stroke="#bdbdbd"/><rect x="5.5" y="8.5" width="1.2" height="2.5" fill="#bdbdbd"/></svg>
</div>
<!-- layer scrollbar -->
<div class="a" style="left:1351px;top:585px;width:14px;height:161px;background:#3f3f3f"></div>
<svg style="left:1353px;top:591px" width="10" height="5"><path d="M0.5 4.5H9.5L5 0.5Z" fill="#e8e8e8"/></svg>
<div class="a" style="left:1353px;top:668px;width:10px;height:60px;border-radius:5px;background:linear-gradient(90deg,#6a6a6a,#777 50%,#6a6a6a)"></div>
<svg style="left:1353px;top:737px" width="10" height="5"><path d="M0.5 0.5H9.5L5 4.5Z" fill="#e8e8e8"/></svg>
<!-- bottom bar -->
<div class="a" style="left:1143px;top:746px;width:222px;height:1px;background:#3a3a3a"></div>
<div class="a" style="left:1143px;top:747px;width:222px;height:18px;background:#535353;border-top:1px solid #5e5e5e"></div>
<svg style="left:1143px;top:747px" width="222" height="18">
<g fill="none" stroke="#a0a0a0" stroke-width="1.6"><rect x="19" y="7" width="7" height="5" rx="2.5"/><rect x="25" y="7" width="7" height="5" rx="2.5"/></g>
<text x="48" y="15" font-family="Liberation Serif" font-style="italic" font-size="14" fill="#a0a0a0">fx</text>
<path d="M61 15H64L62.5 16.5Z" fill="#bdbdbd"/>
<rect x="74" y="6" width="14" height="10" fill="#a0a0a0"/><circle cx="81" cy="11" r="3" fill="#535353"/>
<circle cx="107" cy="11" r="5.3" fill="#a4a4a4"/><path d="M103.3 14.7A5.3 5.3 0 0 1 110.7 7.3Z" fill="#bcbcbc"/><path d="M103.5 14.5L110.5 7.5" stroke="#535353" stroke-width="1.2"/>
<path d="M113 15H116L114.5 16.5Z" fill="#bdbdbd"/>
<path d="M127.5 5H132L133 6.5H140V15.5H127.5Z" fill="#a4a4a4"/>
<rect x="156" y="6" width="10" height="10" fill="#a4a4a4"/><path d="M155.5 11H160V16" fill="#535353" stroke="#2e2e2e"/>
<g fill="none" stroke="#a4a4a4"><path d="M182 7H193M185 6.5V4.5H190V6.5"/><path d="M183.5 8H191.5L191 16H184Z"/><path d="M185.8 9.5V14.5M187.5 9.5V14.5M189.2 9.5V14.5"/></g>
</svg>
</div>

<!-- IMAGE -->
<div class="a" style="left:242px;top:192px;width:640px;height:427px;background:#fbfbfb;overflow:hidden;box-shadow:0 0 0 1px #1f1f1f,1px 3px 5px rgba(0,0,0,0.35)" id="img"><svg width="640" height="427" style="position:absolute;left:0;top:0">
<defs><filter id="b1" x="-20%" y="-20%" width="140%" height="140%"><feGaussianBlur stdDeviation="0.6"/></filter><filter id="b2" x="-20%" y="-20%" width="140%" height="140%"><feGaussianBlur stdDeviation="1.6"/></filter><filter id="b4" x="-20%" y="-20%" width="140%" height="140%"><feGaussianBlur stdDeviation="4"/></filter></defs>
<rect width="640" height="427" fill="#fcfcfc"/>
<filter id="tex" x="0" y="0" width="100%" height="100%"><feTurbulence type="fractalNoise" baseFrequency="0.02 0.03" numOctaves="2" seed="5"/><feColorMatrix type="matrix" values="0 0 0 0 0  0 0 0 0 0  0 0 0 0 0  1 0 0 0 0"/><feComponentTransfer><feFuncA type="table" tableValues="0 0 0 0.014 0 0 0 0.014 0 0 0 0.014 0 0 0 0.014 0 0 0 0.014 0 0 0 0.014 0 0 0 0.014 0 0 0 0.014 0 0 0 0.014 0 0 0 0.014 0 0 0 0.014 0 0 0 0.014 0"/></feComponentTransfer><feGaussianBlur stdDeviation="0.9"/></filter>
<rect width="640" height="427" fill="#000" filter="url(#tex)"/>
<defs><linearGradient id="hg" x1="0" y1="0" x2="0" y2="1"><stop offset="0" stop-color="#dcdcdc"/><stop offset="0.55" stop-color="#c2c2c2"/><stop offset="1" stop-color="#d4d4d4"/></linearGradient></defs>
<path d="M220.0 228.0C219.7 222.2 218.2 203.2 218.0 193.0C217.8 182.8 218.0 176.8 219.0 167.0C220.0 157.2 221.5 143.3 224.0 134.0C226.5 124.7 230.2 118.5 234.0 111.0C237.8 103.5 242.2 95.5 247.0 89.0C251.8 82.5 257.5 76.8 263.0 72.0C268.5 67.2 274.0 63.2 280.0 60.0C286.0 56.8 291.8 54.7 299.0 52.5C306.2 50.3 317.2 48.1 323.0 47.0C328.8 45.9 328.2 45.7 334.0 46.0C339.8 46.3 351.3 47.9 358.0 49.0C364.7 50.1 367.0 50.4 374.0 52.5C381.0 54.6 392.3 57.8 400.0 61.6C407.7 65.4 414.5 70.4 420.0 75.0C425.5 79.6 429.3 83.8 433.0 89.0C436.7 94.2 439.5 99.7 442.0 106.0C444.5 112.3 446.3 116.8 448.0 127.0C449.7 137.2 449.5 154.8 452.0 167.0C454.5 179.2 459.5 189.8 463.0 200.0C466.5 210.2 471.0 218.5 473.0 228.0C475.0 237.5 475.3 245.7 475.0 257.0C474.7 268.3 470.8 285.0 471.0 296.0C471.2 307.0 478.2 316.0 476.0 323.0C473.8 330.0 465.2 333.8 458.0 338.0C450.8 342.2 441.3 348.8 433.0 348.0C424.7 347.2 413.8 338.8 408.0 333.0C402.2 327.2 398.0 320.5 398.0 313.0C398.0 305.5 405.3 297.3 408.0 288.0C410.7 278.7 413.7 266.5 414.0 257.0C414.3 247.5 412.3 235.8 410.0 231.0C407.7 226.2 403.8 230.0 400.0 228.0C396.2 226.0 394.0 222.8 387.0 219.0C380.0 215.2 368.3 208.8 358.0 205.0C347.7 201.2 334.8 196.8 325.0 196.0C315.2 195.2 305.0 199.7 299.0 200.0C293.0 200.3 295.5 197.2 289.0 198.0C282.5 198.8 269.2 203.7 260.0 205.0C250.8 206.3 238.0 200.5 234.0 206.0C230.0 211.5 234.5 226.0 236.0 238.0C237.5 250.0 239.3 266.3 243.0 278.0C246.7 289.7 254.5 300.5 258.0 308.0C261.5 315.5 266.5 319.7 264.0 323.0C261.5 326.3 249.0 330.5 243.0 328.0C237.0 325.5 231.8 318.0 228.0 308.0C224.2 298.0 221.3 274.7 220.0 268.0Z" fill="url(#hg)" filter="url(#b2)"/>
<path d="M289.0 200.0C289.3 194.7 290.0 177.0 291.0 168.0C292.0 159.0 293.3 147.7 295.0 146.0C296.7 144.3 299.8 149.0 301.0 158.0C302.2 167.0 301.8 193.0 302.0 200.0Z" fill="#f4f4f4" filter="url(#b2)"/>
<g filter="url(#b1)"><path d="M334.2 49.6Q236.1 50.0 221.9 143.8" stroke="#2a2a2a" stroke-width="1.26" stroke-dasharray="4.0 2.1 13.0 1.3 3.9 1.7 5.6 2.0" stroke-dashoffset="18.9" fill="none" opacity="0.71"/><path d="M331.6 51.3Q236.0 50.6 218.2 147.1" stroke="#2a2a2a" stroke-width="0.98" stroke-dasharray="12.4 1.4 4.6 1.1 6.4 2.6 5.0 2.1" stroke-dashoffset="1.9" fill="none" opacity="0.48"/><path d="M333.1 51.7Q236.3 51.4 220.3 149.7" stroke="#2a2a2a" stroke-width="1.03" stroke-dasharray="13.2 1.6 5.7 1.2 11.6 1.0 6.3 1.9" stroke-dashoffset="2.2" fill="none" opacity="0.68"/><path d="M332.6 50.4Q241.7 53.3 223.3 152.5" stroke="#222" stroke-width="0.93" stroke-dasharray="11.4 2.1 12.6 1.5 10.6 2.1 9.4 1.8" stroke-dashoffset="19.9" fill="none" opacity="0.48"/><path d="M338.0 51.6Q239.4 53.0 223.5 158.5" stroke="#444" stroke-width="0.88" stroke-dasharray="10.9 2.8 6.8 2.9 6.9 2.1 8.4 1.3" stroke-dashoffset="27.5" fill="none" opacity="0.67"/><path d="M332.7 50.6Q234.5 49.0 219.1 152.6" stroke="#555" stroke-width="0.94" stroke-dasharray="12.5 1.4 7.6 1.6 12.7 2.9 4.7 1.2" stroke-dashoffset="17.7" fill="none" opacity="0.57"/><path d="M331.0 50.7Q238.1 50.0 219.6 159.0" stroke="#333" stroke-width="0.88" stroke-dasharray="10.6 1.9 9.8 2.3 3.6 2.8 11.6 2.7" stroke-dashoffset="3.1" fill="none" opacity="0.74"/><path d="M331.6 49.3Q234.7 50.1 218.5 156.1" stroke="#444" stroke-width="1.27" stroke-dasharray="9.6 1.0 9.2 2.0 13.4 2.2 3.8 1.3" stroke-dashoffset="18.1" fill="none" opacity="0.66"/><path d="M332.2 51.0Q239.5 49.3 223.0 161.3" stroke="#444" stroke-width="0.98" stroke-dasharray="3.9 1.0 6.8 1.4 12.1 1.2 3.3 2.9" stroke-dashoffset="0.8" fill="none" opacity="0.69"/><path d="M340.8 52.5Q240.7 50.6 221.2 160.5" stroke="#444" stroke-width="0.77" stroke-dasharray="13.0 1.6 5.5 2.0 8.5 2.2 9.7 2.5" stroke-dashoffset="12.0" fill="none" opacity="0.81"/><path d="M333.0 51.0Q235.5 48.6 221.3 170.1" stroke="#444" stroke-width="0.93" stroke-dasharray="8.2 1.2 9.7 1.6 11.9 2.4 6.8 2.9" stroke-dashoffset="10.1" fill="none" opacity="0.67"/><path d="M340.9 51.4Q237.2 50.4 216.8 170.8" stroke="#444" stroke-width="1.16" stroke-dasharray="11.8 1.0 10.3 2.8 11.6 2.5 8.3 1.2" stroke-dashoffset="29.1" fill="none" opacity="0.63"/><path d="M335.0 52.8Q236.1 53.1 221.1 164.3" stroke="#333" stroke-width="0.61" stroke-dasharray="3.3 2.1 8.1 2.2 9.7 2.1 8.2 2.9" stroke-dashoffset="24.0" fill="none" opacity="0.78"/><path d="M332.0 52.0Q232.4 54.5 217.4 174.9" stroke="#333" stroke-width="0.85" stroke-dasharray="12.1 1.3 5.8 1.4 5.6 2.1 5.9 1.7" stroke-dashoffset="13.7" fill="none" opacity="0.71"/><path d="M340.0 50.7Q240.4 48.4 222.0 171.2" stroke="#2a2a2a" stroke-width="0.64" stroke-dasharray="4.7 1.9 12.6 2.5 9.7 2.5 4.6 1.1" stroke-dashoffset="20.5" fill="none" opacity="0.69"/><path d="M335.8 52.1Q238.8 52.2 221.7 167.9" stroke="#333" stroke-width="1.08" stroke-dasharray="6.0 2.5 8.6 2.0 11.4 2.8 7.9 2.1" stroke-dashoffset="13.6" fill="none" opacity="0.69"/><path d="M335.8 52.8Q237.3 51.0 220.5 178.6" stroke="#444" stroke-width="0.81" stroke-dasharray="13.2 2.8 5.2 1.8 7.6 1.7 6.5 2.3" stroke-dashoffset="3.7" fill="none" opacity="0.80"/><path d="M340.4 51.6Q236.3 51.7 218.4 173.4" stroke="#333" stroke-width="0.84" stroke-dasharray="13.6 1.3 13.5 1.7 8.4 3.0 12.2 1.2" stroke-dashoffset="5.9" fill="none" opacity="0.59"/><path d="M338.2 49.1Q234.7 47.7 219.4 177.0" stroke="#222" stroke-width="1.23" stroke-dasharray="7.2 1.9 6.2 2.9 4.2 2.8 5.5 2.7" stroke-dashoffset="5.4" fill="none" opacity="0.79"/><path d="M339.2 52.4Q235.5 55.0 220.2 184.0" stroke="#555" stroke-width="1.04" stroke-dasharray="4.6 2.8 9.3 2.3 4.0 0.9 10.6 1.7" stroke-dashoffset="24.0" fill="none" opacity="0.49"/><path d="M339.6 49.3Q237.9 47.4 221.6 179.9" stroke="#444" stroke-width="1.25" stroke-dasharray="13.9 1.7 13.1 2.2 3.5 2.4 13.3 2.9" stroke-dashoffset="18.9" fill="none" opacity="0.69"/><path d="M333.1 50.8Q238.5 51.7 220.7 179.1" stroke="#222" stroke-width="1.06" stroke-dasharray="13.9 0.9 3.2 1.9 13.8 1.9 5.7 1.8" stroke-dashoffset="16.4" fill="none" opacity="0.85"/><path d="M340.7 50.2Q238.1 48.8 218.2 179.9" stroke="#333" stroke-width="0.71" stroke-dasharray="12.2 2.4 10.0 1.7 6.8 0.9 4.4 1.0" stroke-dashoffset="2.5" fill="none" opacity="0.83"/><path d="M339.7 51.7Q234.2 54.0 218.9 181.3" stroke="#444" stroke-width="0.75" stroke-dasharray="3.5 1.2 6.0 0.8 7.0 1.5 13.8 1.5" stroke-dashoffset="5.5" fill="none" opacity="0.60"/><path d="M331.8 50.1Q240.7 52.2 221.4 182.6" stroke="#222" stroke-width="0.71" stroke-dasharray="4.0 2.6 4.6 2.1 7.3 1.5 9.9 1.0" stroke-dashoffset="26.8" fill="none" opacity="0.80"/><path d="M337.0 52.1Q237.1 52.2 222.1 186.5" stroke="#444" stroke-width="0.95" stroke-dasharray="11.0 2.2 3.5 2.6 12.8 2.2 11.1 2.6" stroke-dashoffset="25.0" fill="none" opacity="0.81"/><path d="M339.3 51.3Q241.0 49.8 223.4 189.8" stroke="#333" stroke-width="0.78" stroke-dasharray="3.9 0.9 10.0 2.9 7.1 1.8 3.6 0.8" stroke-dashoffset="13.7" fill="none" opacity="0.48"/><path d="M340.3 52.6Q236.4 52.5 218.8 189.4" stroke="#555" stroke-width="1.08" stroke-dasharray="5.8 1.0 5.9 2.4 5.3 2.4 13.7 1.9" stroke-dashoffset="23.0" fill="none" opacity="0.73"/><path d="M337.4 49.3Q238.4 48.0 219.5 187.6" stroke="#444" stroke-width="0.93" stroke-dasharray="9.8 1.1 8.3 1.9 13.7 1.0 5.4 1.9" stroke-dashoffset="23.0" fill="none" opacity="0.90"/><path d="M336.5 50.2Q237.4 48.1 219.4 191.3" stroke="#444" stroke-width="0.97" stroke-dasharray="8.0 2.6 13.6 1.8 6.0 1.3 13.4 1.3" stroke-dashoffset="28.6" fill="none" opacity="0.51"/><path d="M339.2 51.0Q241.1 50.3 224.4 195.0" stroke="#333" stroke-width="0.68" stroke-dasharray="8.5 2.7 7.3 1.1 13.4 2.3 7.5 2.4" stroke-dashoffset="9.9" fill="none" opacity="0.60"/><path d="M334.4 50.6Q240.1 48.3 225.0 190.7" stroke="#222" stroke-width="0.67" stroke-dasharray="12.9 1.4 7.1 1.7 14.0 2.1 7.0 1.7" stroke-dashoffset="25.0" fill="none" opacity="0.58"/><path d="M340.4 50.0Q237.3 47.5 221.2 195.4" stroke="#333" stroke-width="1.25" stroke-dasharray="11.5 2.5 7.7 0.9 11.4 1.7 12.6 2.0" stroke-dashoffset="12.3" fill="none" opacity="0.73"/><path d="M332.4 52.5Q238.1 53.1 222.8 201.1" stroke="#2a2a2a" stroke-width="0.88" stroke-dasharray="4.4 1.8 6.8 1.5 11.1 2.9 5.9 2.2" stroke-dashoffset="5.0" fill="none" opacity="0.52"/><path d="M333.1 52.6Q238.2 53.1 223.2 194.7" stroke="#444" stroke-width="1.22" stroke-dasharray="14.0 1.8 4.5 1.2 4.0 1.6 4.0 1.3" stroke-dashoffset="22.5" fill="none" opacity="0.64"/><path d="M335.1 51.1Q242.0 50.4 222.7 197.2" stroke="#222" stroke-width="1.05" stroke-dasharray="8.5 2.1 7.0 2.3 8.8 2.5 12.3 1.0" stroke-dashoffset="13.0" fill="none" opacity="0.59"/><path d="M339.1 52.9Q240.8 51.2 221.5 199.4" stroke="#555" stroke-width="0.71" stroke-dasharray="13.7 1.9 3.8 2.8 13.2 2.0 8.1 1.8" stroke-dashoffset="29.2" fill="none" opacity="0.50"/><path d="M339.3 51.8Q241.6 52.6 226.1 205.8" stroke="#222" stroke-width="1.09" stroke-dasharray="9.1 0.9 11.6 1.3 13.1 2.2 6.3 1.1" stroke-dashoffset="3.4" fill="none" opacity="0.48"/><path d="M336.2 51.3Q241.0 48.5 223.9 198.5" stroke="#2a2a2a" stroke-width="0.89" stroke-dasharray="3.0 2.0 14.0 1.4 6.5 2.6 5.7 2.0" stroke-dashoffset="19.5" fill="none" opacity="0.47"/><path d="M332.9 52.5Q243.8 56.0 226.0 197.0" stroke="#333" stroke-width="0.95" stroke-dasharray="10.3 2.8 5.5 0.9 6.7 1.7 10.5 1.2" stroke-dashoffset="6.2" fill="none" opacity="0.89"/><path d="M334.1 52.3Q243.1 49.6 224.0 198.6" stroke="#444" stroke-width="0.62" stroke-dasharray="4.2 2.2 9.7 2.8 8.3 2.8 3.6 2.1" stroke-dashoffset="17.9" fill="none" opacity="0.64"/><path d="M338.1 49.7Q243.7 49.0 225.9 204.0" stroke="#444" stroke-width="0.86" stroke-dasharray="11.1 3.0 13.2 1.5 5.0 2.9 11.2 0.9" stroke-dashoffset="10.0" fill="none" opacity="0.53"/><path d="M331.0 50.1Q239.8 53.8 225.8 206.8" stroke="#222" stroke-width="0.91" stroke-dasharray="9.2 2.5 7.2 2.5 6.4 2.6 4.0 2.4" stroke-dashoffset="9.7" fill="none" opacity="0.78"/><path d="M335.7 51.5Q240.9 54.3 225.7 203.2" stroke="#555" stroke-width="1.03" stroke-dasharray="3.4 0.9 3.7 2.8 5.8 2.4 12.9 1.5" stroke-dashoffset="7.9" fill="none" opacity="0.77"/><path d="M334.2 50.1Q241.2 53.1 224.8 204.7" stroke="#222" stroke-width="0.73" stroke-dasharray="3.3 1.3 8.2 2.9 13.5 1.7 5.8 1.7" stroke-dashoffset="24.1" fill="none" opacity="0.78"/><path d="M339.2 52.1Q245.4 52.4 229.0 200.0" stroke="#444" stroke-width="0.71" stroke-dasharray="8.1 2.5 9.6 1.9 7.3 1.2 7.5 2.2" stroke-dashoffset="12.8" fill="none" opacity="0.50"/><path d="M331.7 51.5Q244.5 53.9 227.1 201.1" stroke="#555" stroke-width="0.80" stroke-dasharray="4.9 1.1 8.1 2.8 5.6 2.0 11.5 2.5" stroke-dashoffset="8.0" fill="none" opacity="0.56"/><path d="M333.6 50.8Q244.4 56.3 227.5 199.1" stroke="#444" stroke-width="0.67" stroke-dasharray="12.7 2.1 6.6 1.7 13.9 1.9 5.5 2.6" stroke-dashoffset="14.2" fill="none" opacity="0.82"/><path d="M339.4 52.7Q245.7 53.6 227.2 199.8" stroke="#222" stroke-width="0.60" stroke-dasharray="3.6 2.1 12.1 1.2 3.8 1.9 5.0 2.1" stroke-dashoffset="19.1" fill="none" opacity="0.77"/><path d="M334.5 49.1Q242.7 49.7 229.5 197.1" stroke="#444" stroke-width="0.95" stroke-dasharray="3.4 2.4 13.1 2.6 12.0 1.7 7.1 2.2" stroke-dashoffset="14.5" fill="none" opacity="0.63"/><path d="M339.0 51.7Q244.9 48.8 229.0 202.6" stroke="#333" stroke-width="1.14" stroke-dasharray="7.4 1.4 13.9 2.3 7.6 0.9 11.2 2.7" stroke-dashoffset="24.1" fill="none" opacity="0.74"/><path d="M334.9 50.6Q250.2 59.5 234.2 201.5" stroke="#333" stroke-width="0.66" stroke-dasharray="7.7 2.6 7.5 2.7 8.1 1.2 3.2 2.0" stroke-dashoffset="18.7" fill="none" opacity="0.62"/><path d="M336.0 49.6Q246.5 50.2 230.8 202.5" stroke="#222" stroke-width="1.25" stroke-dasharray="4.2 1.9 11.9 2.9 5.2 1.1 13.4 2.9" stroke-dashoffset="11.6" fill="none" opacity="0.86"/><path d="M337.2 52.3Q245.8 52.6 230.6 205.5" stroke="#333" stroke-width="1.28" stroke-dasharray="9.8 2.2 5.2 1.8 9.2 0.9 13.3 1.1" stroke-dashoffset="24.5" fill="none" opacity="0.54"/><path d="M339.8 52.4Q251.0 55.1 234.2 204.3" stroke="#444" stroke-width="0.91" stroke-dasharray="4.3 2.1 9.1 2.2 6.4 1.7 9.4 1.7" stroke-dashoffset="0.7" fill="none" opacity="0.73"/><path d="M335.9 49.9Q251.3 53.8 235.3 205.6" stroke="#555" stroke-width="0.69" stroke-dasharray="12.2 2.6 7.4 0.9 6.9 1.6 11.8 1.9" stroke-dashoffset="27.7" fill="none" opacity="0.59"/><path d="M338.2 49.3Q253.4 56.8 236.2 206.8" stroke="#333" stroke-width="1.08" stroke-dasharray="3.3 0.9 9.8 2.3 4.2 1.1 12.7 1.4" stroke-dashoffset="21.6" fill="none" opacity="0.55"/><path d="M339.3 51.4Q249.2 52.2 234.6 200.5" stroke="#2a2a2a" stroke-width="0.73" stroke-dasharray="6.0 2.6 4.6 1.9 13.1 1.3 5.9 1.9" stroke-dashoffset="4.8" fill="none" opacity="0.87"/><path d="M337.8 52.6Q249.4 58.2 235.5 205.5" stroke="#222" stroke-width="1.20" stroke-dasharray="11.5 0.9 12.4 2.9 8.0 1.9 10.6 2.8" stroke-dashoffset="22.1" fill="none" opacity="0.62"/><path d="M334.8 50.5Q252.0 59.7 236.8 200.4" stroke="#222" stroke-width="0.82" stroke-dasharray="7.9 1.2 11.2 0.9 12.0 1.4 10.0 3.0" stroke-dashoffset="0.1" fill="none" opacity="0.47"/><path d="M332.5 51.5C270.7 57.7 244.1 85.4 239.9 202.4" stroke="#222" stroke-width="1.01" stroke-dasharray="4.5 1.3 10.2 0.8 3.0 1.6 4.2 1.6" stroke-dashoffset="6.1" fill="none" opacity="0.73"/><path d="M335.7 49.5C278.3 55.8 250.4 83.6 244.3 199.4" stroke="#333" stroke-width="1.02" stroke-dasharray="8.0 0.9 4.6 2.3 6.0 2.6 13.6 0.9" stroke-dashoffset="17.4" fill="none" opacity="0.72"/><path d="M336.2 51.0Q253.2 59.1 241.1 196.7" stroke="#222" stroke-width="1.03" stroke-dasharray="8.8 1.7 5.6 0.9 11.6 0.8 9.1 2.9" stroke-dashoffset="15.2" fill="none" opacity="0.74"/><path d="M339.1 49.7Q258.7 57.5 243.4 199.9" stroke="#222" stroke-width="1.30" stroke-dasharray="13.9 2.4 8.3 2.0 7.1 1.8 13.0 1.0" stroke-dashoffset="7.8" fill="none" opacity="0.74"/><path d="M332.2 52.6C280.6 59.7 250.1 90.2 248.5 206.9" stroke="#444" stroke-width="1.22" stroke-dasharray="10.8 1.4 9.1 1.8 11.7 2.0 5.9 2.2" stroke-dashoffset="0.5" fill="none" opacity="0.57"/><path d="M333.4 52.0C279.4 59.0 253.2 89.3 250.0 204.7" stroke="#444" stroke-width="0.97" stroke-dasharray="5.1 1.7 9.6 1.6 12.4 2.8 13.8 2.7" stroke-dashoffset="0.2" fill="none" opacity="0.46"/><path d="M340.6 49.9C280.2 56.6 251.8 85.9 251.1 205.1" stroke="#555" stroke-width="0.63" stroke-dasharray="9.8 1.0 13.0 1.1 3.3 1.0 13.2 1.6" stroke-dashoffset="20.8" fill="none" opacity="0.74"/><path d="M338.0 51.9C277.7 58.3 249.4 86.6 247.6 202.9" stroke="#444" stroke-width="0.62" stroke-dasharray="5.2 2.9 8.9 2.3 12.7 2.5 10.8 1.6" stroke-dashoffset="28.5" fill="none" opacity="0.86"/><path d="M338.5 49.3C281.7 56.3 257.8 86.3 253.1 203.3" stroke="#555" stroke-width="0.86" stroke-dasharray="4.1 1.0 11.3 1.3 6.5 1.7 3.2 1.4" stroke-dashoffset="9.6" fill="none" opacity="0.88"/><path d="M336.0 52.4C283.0 59.1 255.7 88.0 253.7 196.6" stroke="#555" stroke-width="0.91" stroke-dasharray="3.3 1.9 4.1 1.8 3.5 2.0 10.9 2.6" stroke-dashoffset="15.7" fill="none" opacity="0.58"/><path d="M338.5 49.2C281.6 55.9 254.9 84.9 253.5 197.3" stroke="#333" stroke-width="1.26" stroke-dasharray="13.6 2.1 13.5 1.9 9.4 1.1 12.0 2.9" stroke-dashoffset="23.0" fill="none" opacity="0.67"/><path d="M340.9 51.2C286.4 57.8 256.9 86.3 253.4 199.8" stroke="#222" stroke-width="0.87" stroke-dasharray="7.4 1.7 12.8 1.0 12.8 0.9 5.3 1.4" stroke-dashoffset="26.5" fill="none" opacity="0.56"/><path d="M335.6 51.1C287.3 58.7 262.3 90.7 258.7 204.4" stroke="#222" stroke-width="0.69" stroke-dasharray="6.8 1.5 4.7 2.7 10.3 2.4 4.9 1.8" stroke-dashoffset="13.9" fill="none" opacity="0.85"/><path d="M333.4 49.8C286.8 57.5 261.8 89.8 257.4 203.8" stroke="#2a2a2a" stroke-width="0.67" stroke-dasharray="4.7 1.1 5.7 1.5 8.7 1.2 6.6 1.2" stroke-dashoffset="28.9" fill="none" opacity="0.50"/><path d="M334.8 52.9C287.0 60.7 263.0 93.2 261.8 204.1" stroke="#555" stroke-width="1.29" stroke-dasharray="6.0 1.0 13.0 1.4 12.7 1.8 3.1 2.7" stroke-dashoffset="8.9" fill="none" opacity="0.46"/><path d="M333.6 52.0C285.3 59.3 260.0 90.3 258.6 198.3" stroke="#555" stroke-width="0.73" stroke-dasharray="10.7 2.1 10.1 2.7 10.3 2.2 12.7 2.2" stroke-dashoffset="3.7" fill="none" opacity="0.64"/><path d="M333.6 51.8C291.9 59.7 266.3 92.2 265.5 197.9" stroke="#555" stroke-width="1.06" stroke-dasharray="10.8 2.2 5.8 1.7 8.0 2.2 7.5 2.3" stroke-dashoffset="23.3" fill="none" opacity="0.62"/><path d="M335.9 52.9C284.9 60.5 266.6 92.0 261.9 200.8" stroke="#333" stroke-width="0.86" stroke-dasharray="10.9 2.9 5.2 1.6 12.3 1.8 5.3 1.8" stroke-dashoffset="10.3" fill="none" opacity="0.78"/><path d="M335.6 53.0C290.1 60.7 268.3 92.7 264.4 200.1" stroke="#222" stroke-width="1.01" stroke-dasharray="11.0 2.2 10.0 1.4 7.2 0.9 3.8 2.8" stroke-dashoffset="3.3" fill="none" opacity="0.59"/><path d="M335.0 52.8C295.1 61.4 271.1 96.1 270.7 205.0" stroke="#555" stroke-width="1.07" stroke-dasharray="8.1 1.2 13.2 1.0 11.8 1.2 10.1 2.4" stroke-dashoffset="24.9" fill="none" opacity="0.81"/><path d="M335.1 53.0C294.8 61.3 272.2 95.1 271.0 200.9" stroke="#555" stroke-width="0.77" stroke-dasharray="6.9 2.7 5.9 1.6 5.8 1.7 5.0 0.8" stroke-dashoffset="9.1" fill="none" opacity="0.67"/><path d="M335.3 51.5C291.2 59.8 271.5 93.3 271.9 197.3" stroke="#444" stroke-width="1.27" stroke-dasharray="12.4 0.9 12.1 2.8 11.6 1.1 12.1 2.2" stroke-dashoffset="19.7" fill="none" opacity="0.56"/><path d="M332.0 49.6C294.7 58.4 273.7 93.9 270.9 201.5" stroke="#444" stroke-width="1.05" stroke-dasharray="11.6 1.3 7.4 2.0 9.7 2.3 13.7 1.0" stroke-dashoffset="8.9" fill="none" opacity="0.67"/><path d="M333.1 49.3C296.0 58.4 278.4 94.5 276.1 200.0" stroke="#222" stroke-width="0.98" stroke-dasharray="9.1 1.4 5.6 1.1 8.4 0.9 8.1 1.1" stroke-dashoffset="25.9" fill="none" opacity="0.45"/><path d="M339.4 50.9C299.3 59.3 281.2 93.5 276.1 199.5" stroke="#555" stroke-width="0.83" stroke-dasharray="7.1 1.7 13.6 1.0 10.0 2.2 3.3 2.1" stroke-dashoffset="29.5" fill="none" opacity="0.68"/><path d="M335.8 52.6C295.5 61.1 277.2 95.4 274.4 199.7" stroke="#333" stroke-width="1.18" stroke-dasharray="6.7 2.7 7.0 1.8 8.8 2.5 5.3 1.8" stroke-dashoffset="8.8" fill="none" opacity="0.82"/><path d="M335.0 51.0C294.8 59.7 281.1 94.6 277.4 197.0" stroke="#333" stroke-width="1.22" stroke-dasharray="10.2 2.5 6.6 1.5 6.3 2.1 10.0 2.5" stroke-dashoffset="16.4" fill="none" opacity="0.47"/><path d="M334.0 49.0C300.2 58.3 278.2 95.2 278.5 201.2" stroke="#2a2a2a" stroke-width="0.63" stroke-dasharray="11.4 0.9 8.5 2.0 7.1 1.1 10.4 2.3" stroke-dashoffset="19.0" fill="none" opacity="0.73"/><path d="M332.7 51.7C300.7 60.9 285.0 97.3 284.2 195.3" stroke="#222" stroke-width="0.90" stroke-dasharray="13.1 2.2 7.1 2.6 11.7 2.0 5.8 1.5" stroke-dashoffset="19.3" fill="none" opacity="0.87"/><path d="M331.5 51.3C298.4 60.2 282.3 95.2 280.7 191.6" stroke="#555" stroke-width="0.67" stroke-dasharray="9.3 2.8 7.9 0.8 7.3 2.1 13.3 3.0" stroke-dashoffset="19.3" fill="none" opacity="0.55"/><path d="M332.5 49.1C301.2 58.5 286.7 95.6 282.1 197.5" stroke="#222" stroke-width="0.86" stroke-dasharray="13.9 2.7 5.4 1.1 8.2 1.4 9.3 1.8" stroke-dashoffset="22.4" fill="none" opacity="0.76"/><path d="M332.4 52.0C303.8 61.4 284.8 98.1 285.4 195.7" stroke="#555" stroke-width="0.82" stroke-dasharray="8.1 2.9 5.8 2.9 10.9 0.8 3.2 2.2" stroke-dashoffset="21.9" fill="none" opacity="0.52"/><path d="M339.6 50.9C304.3 59.7 289.4 94.5 285.6 193.2" stroke="#2a2a2a" stroke-width="0.92" stroke-dasharray="11.0 1.8 4.8 2.9 4.3 2.9 4.8 2.6" stroke-dashoffset="8.2" fill="none" opacity="0.79"/><path d="M334.3 50.1C304.7 59.8 292.8 97.8 289.9 196.2" stroke="#2a2a2a" stroke-width="1.02" stroke-dasharray="6.7 2.1 13.8 2.6 9.6 1.5 7.7 2.8" stroke-dashoffset="26.9" fill="none" opacity="0.81"/><path d="M333.8 49.0C307.0 58.5 291.8 95.8 288.1 193.6" stroke="#2a2a2a" stroke-width="0.98" stroke-dasharray="13.1 2.5 11.6 1.4 4.5 2.8 13.9 1.1" stroke-dashoffset="23.3" fill="none" opacity="0.67"/><path d="M336.3 51.2C306.4 60.5 291.9 96.9 289.9 193.2" stroke="#333" stroke-width="0.85" stroke-dasharray="6.4 0.9 7.4 2.4 13.2 2.1 3.1 1.6" stroke-dashoffset="1.9" fill="none" opacity="0.63"/><path d="M336.2 50.0C307.8 59.6 292.0 96.7 292.3 192.5" stroke="#2a2a2a" stroke-width="0.63" stroke-dasharray="9.5 1.2 5.1 1.2 10.7 1.6 9.2 1.7" stroke-dashoffset="29.9" fill="none" opacity="0.62"/><path d="M332.1 51.5C304.6 61.2 296.6 98.4 292.4 190.7" stroke="#2a2a2a" stroke-width="0.80" stroke-dasharray="3.3 1.4 9.7 1.0 5.3 2.7 9.2 2.1" stroke-dashoffset="2.9" fill="none" opacity="0.65"/><path d="M336.9 51.4C308.1 60.9 288.2 98.3 288.9 198.3" stroke="#444" stroke-width="1.02" stroke-dasharray="5.2 1.2 3.9 0.9 9.1 2.7 8.0 2.9" stroke-dashoffset="11.9" fill="none" opacity="0.50"/><path d="M340.6 50.0C308.0 59.4 296.2 96.4 291.8 196.0" stroke="#2a2a2a" stroke-width="1.23" stroke-dasharray="7.3 1.8 4.8 2.9 13.9 1.3 3.4 1.4" stroke-dashoffset="25.1" fill="none" opacity="0.47"/><path d="M338.9 51.8C308.7 61.6 293.8 99.6 292.7 199.8" stroke="#222" stroke-width="0.87" stroke-dasharray="4.1 1.5 3.1 1.2 11.2 2.1 7.9 2.2" stroke-dashoffset="11.2" fill="none" opacity="0.62"/><path d="M335.4 52.2C306.8 62.3 296.0 101.2 294.7 198.8" stroke="#555" stroke-width="0.67" stroke-dasharray="10.9 1.2 3.4 2.8 5.4 2.9 12.5 2.8" stroke-dashoffset="27.9" fill="none" opacity="0.83"/><path d="M337.3 50.8C305.5 60.5 293.0 98.5 291.6 198.1" stroke="#555" stroke-width="0.77" stroke-dasharray="4.3 1.6 6.7 2.4 5.0 1.8 12.8 1.8" stroke-dashoffset="0.8" fill="none" opacity="0.71"/><path d="M334.0 52.2C305.1 61.6 291.8 97.8 291.5 190.2" stroke="#555" stroke-width="0.74" stroke-dasharray="12.9 1.1 13.8 0.9 12.8 2.3 5.3 1.9" stroke-dashoffset="10.9" fill="none" opacity="0.90"/><path d="M341.0 52.7C305.5 61.6 294.9 96.6 290.9 192.2" stroke="#333" stroke-width="0.97" stroke-dasharray="3.6 2.4 6.2 3.0 3.2 2.6 6.7 1.1" stroke-dashoffset="5.6" fill="none" opacity="0.65"/><path d="M340.1 49.9C308.3 59.1 293.8 95.3 294.2 190.5" stroke="#333" stroke-width="1.07" stroke-dasharray="8.7 1.3 4.9 2.1 12.1 2.8 11.0 2.5" stroke-dashoffset="18.9" fill="none" opacity="0.54"/><path d="M334.1 49.0C306.6 59.2 297.8 98.3 295.3 194.7" stroke="#222" stroke-width="0.77" stroke-dasharray="8.7 1.6 6.1 2.2 13.4 1.0 7.5 2.5" stroke-dashoffset="16.9" fill="none" opacity="0.89"/><path d="M331.4 51.8C309.0 62.2 295.7 102.1 294.9 198.4" stroke="#444" stroke-width="1.13" stroke-dasharray="8.7 1.8 8.7 1.1 10.9 2.6 12.5 1.5" stroke-dashoffset="1.8" fill="none" opacity="0.84"/><path d="M340.5 51.0C308.0 60.5 299.3 97.6 294.9 194.8" stroke="#2a2a2a" stroke-width="1.12" stroke-dasharray="4.5 1.3 4.0 2.2 4.8 1.5 9.1 2.9" stroke-dashoffset="7.8" fill="none" opacity="0.83"/><path d="M337.4 50.9C308.4 60.4 293.2 97.8 293.7 193.9" stroke="#444" stroke-width="1.01" stroke-dasharray="12.6 2.4 3.5 1.1 8.4 1.9 6.1 1.1" stroke-dashoffset="25.8" fill="none" opacity="0.52"/><path d="M336.7 52.0C310.7 61.8 296.6 100.1 293.6 198.1" stroke="#555" stroke-width="1.19" stroke-dasharray="10.6 2.1 9.6 0.9 13.7 0.9 7.0 1.7" stroke-dashoffset="16.9" fill="none" opacity="0.89"/><path d="M334.2 50.6C309.2 60.6 297.9 98.9 296.4 192.6" stroke="#333" stroke-width="0.61" stroke-dasharray="13.5 2.9 5.7 1.7 10.0 1.6 8.8 1.0" stroke-dashoffset="4.2" fill="none" opacity="0.89"/><path d="M338.8 52.7C310.2 62.6 298.9 101.0 297.1 198.0" stroke="#222" stroke-width="0.90" stroke-dasharray="3.4 2.2 5.9 2.3 6.0 2.0 13.2 2.2" stroke-dashoffset="28.5" fill="none" opacity="0.58"/><path d="M334.1 51.6C308.7 61.5 294.6 100.1 294.4 195.6" stroke="#2a2a2a" stroke-width="1.12" stroke-dasharray="12.9 1.0 9.5 2.9 7.8 1.9 12.7 2.8" stroke-dashoffset="22.2" fill="none" opacity="0.58"/><path d="M335.5 51.8C309.5 61.5 296.2 99.3 295.3 193.4" stroke="#2a2a2a" stroke-width="1.01" stroke-dasharray="10.8 1.8 9.0 2.1 8.2 1.5 5.7 1.3" stroke-dashoffset="0.4" fill="none" opacity="0.61"/><path d="M339.6 50.0C312.4 59.8 301.3 97.9 297.6 194.6" stroke="#444" stroke-width="0.85" stroke-dasharray="12.7 1.3 3.6 0.8 9.1 2.1 6.8 2.2" stroke-dashoffset="22.9" fill="none" opacity="0.68"/><path d="M340.9 51.7C317.4 61.5 300.5 99.2 300.2 193.9" stroke="#444" stroke-width="1.04" stroke-dasharray="4.5 1.2 9.7 1.4 12.2 1.0 12.4 2.8" stroke-dashoffset="19.0" fill="none" opacity="0.77"/><path d="M335.1 49.4C310.3 59.7 298.7 99.1 297.4 195.4" stroke="#222" stroke-width="1.11" stroke-dasharray="8.5 2.9 9.3 1.7 11.6 2.7 9.7 1.6" stroke-dashoffset="8.8" fill="none" opacity="0.63"/><path d="M336.6 50.5C310.0 60.8 301.6 100.3 297.2 198.0" stroke="#555" stroke-width="1.03" stroke-dasharray="7.2 1.5 8.9 2.6 7.8 1.6 5.6 2.6" stroke-dashoffset="7.3" fill="none" opacity="0.60"/><path d="M340.7 52.6C316.2 62.1 302.2 98.8 301.3 189.7" stroke="#444" stroke-width="0.85" stroke-dasharray="9.2 1.9 13.1 2.5 8.9 3.0 8.7 1.9" stroke-dashoffset="17.8" fill="none" opacity="0.61"/><path d="M340.5 51.7C316.0 61.2 301.3 97.9 299.1 190.6" stroke="#444" stroke-width="1.08" stroke-dasharray="8.5 2.2 13.2 1.1 5.1 1.7 7.4 2.5" stroke-dashoffset="22.4" fill="none" opacity="0.49"/><path d="M334.6 50.5C308.7 60.4 298.3 98.9 296.7 193.0" stroke="#333" stroke-width="0.95" stroke-dasharray="4.2 2.8 10.6 2.6 13.9 2.8 7.6 1.1" stroke-dashoffset="5.6" fill="none" opacity="0.53"/><path d="M337.3 51.4C309.3 61.8 297.4 101.9 298.7 200.5" stroke="#222" stroke-width="0.72" stroke-dasharray="10.6 0.8 3.0 2.4 9.1 2.8 7.4 1.0" stroke-dashoffset="23.1" fill="none" opacity="0.71"/><path d="M339.7 52.6C315.8 62.2 302.2 99.2 300.0 191.2" stroke="#333" stroke-width="1.16" stroke-dasharray="7.5 1.1 4.7 2.5 4.2 1.0 4.9 1.9" stroke-dashoffset="1.9" fill="none" opacity="0.46"/><path d="M338.7 50.3C312.8 60.4 302.4 99.3 301.5 193.6" stroke="#333" stroke-width="1.13" stroke-dasharray="3.4 2.2 12.5 2.9 3.7 1.2 9.9 0.8" stroke-dashoffset="1.3" fill="none" opacity="0.47"/><path d="M333.4 49.9C309.2 60.4 299.2 100.6 298.5 196.2" stroke="#333" stroke-width="1.10" stroke-dasharray="6.5 2.8 12.0 1.5 9.6 2.9 8.5 2.9" stroke-dashoffset="6.6" fill="none" opacity="0.59"/><path d="M339.8 50.9C314.6 60.9 305.0 99.3 302.6 192.5" stroke="#333" stroke-width="1.27" stroke-dasharray="4.9 1.6 3.1 2.7 7.4 1.6 6.7 2.7" stroke-dashoffset="12.7" fill="none" opacity="0.86"/><path d="M336.5 50.5C311.2 60.8 302.1 99.9 301.0 193.7" stroke="#555" stroke-width="1.19" stroke-dasharray="3.4 2.3 6.8 1.1 10.8 1.0 6.0 2.6" stroke-dashoffset="24.1" fill="none" opacity="0.52"/><path d="M334.5 51.9C312.2 62.6 305.1 103.7 300.8 200.5" stroke="#333" stroke-width="0.97" stroke-dasharray="6.3 1.8 5.2 2.7 10.4 2.9 14.0 2.1" stroke-dashoffset="12.1" fill="none" opacity="0.68"/><path d="M332.3 52.0C314.8 62.4 302.5 101.8 302.9 191.0" stroke="#444" stroke-width="0.73" stroke-dasharray="11.1 2.5 3.3 2.4 4.6 0.8 10.8 2.3" stroke-dashoffset="26.7" fill="none" opacity="0.48"/><path d="M340.1 52.2C317.5 62.2 307.8 100.3 304.2 192.0" stroke="#444" stroke-width="1.26" stroke-dasharray="4.0 1.4 12.0 1.7 6.9 2.7 8.1 2.2" stroke-dashoffset="5.3" fill="none" opacity="0.61"/><path d="M339.0 51.8C319.0 61.8 304.8 100.3 306.2 190.0" stroke="#555" stroke-width="0.63" stroke-dasharray="5.7 2.7 6.9 2.2 5.0 1.1 13.0 2.4" stroke-dashoffset="4.9" fill="none" opacity="0.54"/><path d="M334.0 50.5C311.1 61.0 305.2 100.8 302.3 192.9" stroke="#333" stroke-width="1.06" stroke-dasharray="9.2 1.3 8.5 1.9 13.2 2.3 9.3 2.9" stroke-dashoffset="27.0" fill="none" opacity="0.84"/><path d="M336.9 51.8C320.8 62.7 309.0 104.2 309.2 196.7" stroke="#222" stroke-width="0.66" stroke-dasharray="11.7 1.3 13.1 2.4 3.9 2.3 7.3 2.4" stroke-dashoffset="28.4" fill="none" opacity="0.64"/><path d="M340.3 51.8C322.7 62.5 312.2 103.6 309.0 198.2" stroke="#555" stroke-width="0.99" stroke-dasharray="8.6 2.3 5.3 2.3 12.3 2.5 8.4 1.2" stroke-dashoffset="5.2" fill="none" opacity="0.52"/><path d="M338.8 49.9C316.8 60.9 308.7 102.8 307.4 199.4" stroke="#333" stroke-width="0.91" stroke-dasharray="6.9 1.7 5.2 1.5 4.5 2.4 10.4 1.3" stroke-dashoffset="28.1" fill="none" opacity="0.61"/><path d="M334.0 52.5C316.5 63.4 307.2 104.5 307.9 194.8" stroke="#444" stroke-width="1.08" stroke-dasharray="9.9 1.1 7.7 2.9 10.4 1.1 13.8 2.6" stroke-dashoffset="0.4" fill="none" opacity="0.67"/><path d="M331.4 52.6C320.6 63.4 312.5 104.0 310.1 189.6" stroke="#444" stroke-width="0.66" stroke-dasharray="7.9 1.0 6.6 1.8 7.0 1.2 3.8 0.8" stroke-dashoffset="21.5" fill="none" opacity="0.89"/><path d="M336.6 49.4C321.9 60.5 310.9 102.4 312.5 192.9" stroke="#333" stroke-width="1.12" stroke-dasharray="11.6 1.5 7.0 1.0 6.1 2.1 11.0 2.3" stroke-dashoffset="0.8" fill="none" opacity="0.63"/><path d="M332.5 50.5C320.0 62.2 319.7 105.9 316.6 193.7" stroke="#333" stroke-width="1.19" stroke-dasharray="4.1 2.4 6.4 2.2 7.2 2.2 6.9 1.3" stroke-dashoffset="7.6" fill="none" opacity="0.48"/><path d="M332.1 52.2C323.8 64.3 316.1 109.3 317.6 198.7" stroke="#555" stroke-width="0.91" stroke-dasharray="13.0 2.9 8.4 1.9 4.7 1.5 9.4 1.0" stroke-dashoffset="29.1" fill="none" opacity="0.49"/><path d="M331.4 50.8C322.7 62.5 312.5 106.4 314.4 195.5" stroke="#222" stroke-width="0.61" stroke-dasharray="3.4 2.1 12.2 1.9 4.6 1.0 3.6 2.4" stroke-dashoffset="28.7" fill="none" opacity="0.53"/><path d="M338.2 50.5C322.3 61.8 316.2 104.4 314.6 196.1" stroke="#444" stroke-width="0.66" stroke-dasharray="9.2 1.8 9.0 1.9 7.7 2.0 9.9 1.1" stroke-dashoffset="24.3" fill="none" opacity="0.78"/><path d="M334.3 51.6C324.2 63.1 317.3 106.0 319.2 191.7" stroke="#444" stroke-width="1.06" stroke-dasharray="8.3 2.2 6.3 1.6 12.7 0.9 5.1 2.3" stroke-dashoffset="11.2" fill="none" opacity="0.71"/><path d="M335.2 51.1C326.6 62.6 322.3 105.6 320.4 191.2" stroke="#222" stroke-width="0.76" stroke-dasharray="5.5 2.9 5.2 2.4 5.4 2.6 10.1 1.2" stroke-dashoffset="13.7" fill="none" opacity="0.69"/><path d="M338.0 51.9C331.5 63.6 324.4 106.9 323.7 192.9" stroke="#555" stroke-width="0.92" stroke-dasharray="10.5 2.6 4.5 1.9 8.6 2.6 13.4 2.2" stroke-dashoffset="20.6" fill="none" opacity="0.69"/><path d="M340.7 49.8C330.0 60.8 322.7 102.3 322.4 187.5" stroke="#444" stroke-width="1.22" stroke-dasharray="11.5 0.9 5.6 1.6 3.2 2.1 5.3 1.5" stroke-dashoffset="18.6" fill="none" opacity="0.84"/><path d="M336.6 52.7C329.6 64.1 328.3 106.5 326.0 188.1" stroke="#444" stroke-width="0.85" stroke-dasharray="11.8 2.4 3.1 1.4 5.6 1.9 8.8 1.6" stroke-dashoffset="10.7" fill="none" opacity="0.60"/><path d="M337.0 49.1C328.9 61.0 328.2 104.9 327.5 188.7" stroke="#444" stroke-width="0.80" stroke-dasharray="5.1 1.8 12.2 2.1 4.2 0.8 4.2 2.6" stroke-dashoffset="20.6" fill="none" opacity="0.62"/><path d="M332.4 52.5C327.0 64.8 329.1 110.3 327.0 194.1" stroke="#444" stroke-width="1.08" stroke-dasharray="13.4 0.8 6.8 1.1 8.5 2.7 11.8 0.9" stroke-dashoffset="11.8" fill="none" opacity="0.66"/><path d="M332.6 52.4C330.9 65.0 327.1 111.5 327.9 196.6" stroke="#2a2a2a" stroke-width="0.93" stroke-dasharray="8.7 1.6 8.8 1.5 4.4 2.2 5.3 2.6" stroke-dashoffset="28.1" fill="none" opacity="0.59"/><path d="M334.4 50.9C330.9 63.1 331.7 107.8 328.7 190.2" stroke="#2a2a2a" stroke-width="1.29" stroke-dasharray="3.5 1.1 10.4 1.4 6.0 1.9 5.9 2.1" stroke-dashoffset="1.0" fill="none" opacity="0.70"/><path d="M338.7 52.5C336.9 64.9 334.0 110.8 333.8 194.9" stroke="#222" stroke-width="1.04" stroke-dasharray="7.0 1.4 11.7 2.7 13.3 2.3 6.3 2.5" stroke-dashoffset="10.5" fill="none" opacity="0.70"/><path d="M335.1 49.2C333.1 61.9 332.4 108.6 332.9 192.0" stroke="#555" stroke-width="1.14" stroke-dasharray="8.5 2.8 11.9 3.0 4.7 1.3 12.8 2.3" stroke-dashoffset="27.9" fill="none" opacity="0.71"/><path d="M332.4 51.9C334.7 64.6 335.5 111.5 334.2 195.2" stroke="#444" stroke-width="1.25" stroke-dasharray="3.8 1.2 13.2 2.1 6.3 1.6 8.1 2.9" stroke-dashoffset="25.2" fill="none" opacity="0.59"/><path d="M332.8 52.6C334.5 65.3 334.9 112.0 337.8 197.7" stroke="#444" stroke-width="0.69" stroke-dasharray="5.6 0.8 3.5 1.8 12.8 1.4 8.5 1.0" stroke-dashoffset="1.5" fill="none" opacity="0.48"/><path d="M339.2 51.3C339.5 63.7 341.6 109.1 340.6 189.9" stroke="#444" stroke-width="0.84" stroke-dasharray="8.9 2.7 10.0 2.8 5.3 1.5 11.2 2.2" stroke-dashoffset="1.7" fill="none" opacity="0.64"/><path d="M331.5 51.5C338.3 63.8 341.7 109.5 340.1 195.8" stroke="#2a2a2a" stroke-width="0.71" stroke-dasharray="7.4 2.9 12.6 0.9 6.5 2.2 6.4 1.7" stroke-dashoffset="0.6" fill="none" opacity="0.54"/><path d="M336.3 52.4C341.3 64.8 343.3 110.5 342.0 194.8" stroke="#444" stroke-width="1.14" stroke-dasharray="8.9 2.1 9.1 2.2 9.6 1.5 11.2 1.4" stroke-dashoffset="9.3" fill="none" opacity="0.80"/><path d="M340.8 50.8C343.9 63.8 340.7 111.5 343.3 197.1" stroke="#444" stroke-width="0.62" stroke-dasharray="4.5 0.8 8.2 2.2 11.5 1.6 13.9 1.3" stroke-dashoffset="4.0" fill="none" opacity="0.48"/><path d="M336.0 51.2C341.2 64.1 346.3 111.9 344.5 202.2" stroke="#444" stroke-width="0.75" stroke-dasharray="11.1 2.8 12.6 2.7 11.6 2.0 6.9 2.4" stroke-dashoffset="27.4" fill="none" opacity="0.86"/><path d="M334.9 49.8C347.3 61.6 350.1 105.3 349.9 192.6" stroke="#222" stroke-width="0.76" stroke-dasharray="3.7 2.2 7.4 2.7 3.7 2.0 7.5 2.8" stroke-dashoffset="7.6" fill="none" opacity="0.57"/><path d="M335.3 49.9C345.2 62.5 349.6 109.4 348.2 201.2" stroke="#444" stroke-width="0.80" stroke-dasharray="6.3 3.0 5.4 2.1 4.7 2.7 12.6 1.4" stroke-dashoffset="9.9" fill="none" opacity="0.67"/><path d="M339.9 49.6C347.9 62.1 350.2 108.6 352.9 199.9" stroke="#555" stroke-width="1.26" stroke-dasharray="5.3 0.9 11.6 2.7 11.1 0.9 11.5 1.8" stroke-dashoffset="20.6" fill="none" opacity="0.81"/><path d="M332.5 52.7C347.0 64.2 353.5 107.6 351.3 197.1" stroke="#2a2a2a" stroke-width="0.62" stroke-dasharray="11.1 1.0 4.9 2.3 4.0 1.5 13.1 2.4" stroke-dashoffset="7.0" fill="none" opacity="0.81"/><path d="M337.9 49.2C349.4 61.1 351.7 105.7 355.4 196.8" stroke="#555" stroke-width="0.76" stroke-dasharray="10.7 2.4 3.5 2.8 3.7 1.0 13.5 2.9" stroke-dashoffset="16.2" fill="none" opacity="0.73"/><path d="M336.5 53.0C347.4 64.9 353.7 109.8 357.3 204.0" stroke="#222" stroke-width="0.96" stroke-dasharray="6.8 1.3 13.6 2.7 11.0 1.4 4.9 1.4" stroke-dashoffset="12.2" fill="none" opacity="0.70"/><path d="M334.6 49.0C350.4 60.8 356.8 105.3 359.9 202.6" stroke="#2a2a2a" stroke-width="1.13" stroke-dasharray="6.1 1.5 7.5 3.0 11.2 1.4 7.6 2.0" stroke-dashoffset="26.5" fill="none" opacity="0.81"/><path d="M340.0 51.5C353.5 63.6 357.5 108.6 358.8 201.6" stroke="#444" stroke-width="0.99" stroke-dasharray="10.6 2.4 13.9 2.6 10.3 1.0 9.8 0.9" stroke-dashoffset="20.5" fill="none" opacity="0.65"/><path d="M337.7 50.8C353.1 62.5 361.6 106.5 362.4 202.1" stroke="#555" stroke-width="1.03" stroke-dasharray="8.6 2.1 13.9 1.3 9.9 2.4 7.2 2.4" stroke-dashoffset="20.3" fill="none" opacity="0.59"/><path d="M337.3 51.2C354.8 63.0 360.0 107.6 361.8 204.4" stroke="#444" stroke-width="0.74" stroke-dasharray="5.9 2.7 12.4 1.6 9.5 2.1 14.0 0.9" stroke-dashoffset="5.1" fill="none" opacity="0.61"/><path d="M337.7 49.6C357.1 60.9 365.0 103.9 366.0 200.4" stroke="#222" stroke-width="0.81" stroke-dasharray="6.5 1.6 12.5 1.7 7.5 2.3 7.1 1.6" stroke-dashoffset="19.9" fill="none" opacity="0.57"/><path d="M333.9 50.8C352.9 62.3 360.2 106.1 364.3 206.1" stroke="#333" stroke-width="0.74" stroke-dasharray="11.3 1.1 10.5 1.6 8.7 1.3 7.1 1.5" stroke-dashoffset="17.1" fill="none" opacity="0.48"/><path d="M332.8 51.9C356.6 62.8 368.0 104.7 366.8 203.5" stroke="#333" stroke-width="1.10" stroke-dasharray="5.9 1.8 8.8 1.9 4.0 1.1 13.5 1.4" stroke-dashoffset="11.3" fill="none" opacity="0.47"/><path d="M338.5 52.9C359.6 64.3 367.1 107.7 369.3 207.4" stroke="#444" stroke-width="0.65" stroke-dasharray="6.9 1.6 9.4 2.8 5.1 2.9 10.8 1.6" stroke-dashoffset="22.7" fill="none" opacity="0.62"/><path d="M336.3 51.0C360.0 62.1 370.0 105.1 373.7 209.8" stroke="#222" stroke-width="1.13" stroke-dasharray="4.2 2.0 13.3 2.3 7.8 3.0 4.9 0.9" stroke-dashoffset="0.3" fill="none" opacity="0.55"/><path d="M333.0 51.2C362.1 61.6 374.1 102.2 375.4 205.4" stroke="#444" stroke-width="0.64" stroke-dasharray="11.5 2.5 4.3 1.3 3.8 2.6 4.1 1.0" stroke-dashoffset="20.4" fill="none" opacity="0.77"/><path d="M335.8 49.2C361.9 60.2 374.1 102.5 375.6 207.5" stroke="#2a2a2a" stroke-width="0.66" stroke-dasharray="4.5 1.7 3.6 2.2 6.5 1.2 13.8 1.2" stroke-dashoffset="11.5" fill="none" opacity="0.75"/><path d="M334.0 50.6C362.1 61.3 376.4 103.0 378.3 211.2" stroke="#444" stroke-width="0.94" stroke-dasharray="6.3 2.7 11.8 2.7 5.8 1.2 3.6 2.0" stroke-dashoffset="17.5" fill="none" opacity="0.61"/><path d="M339.0 49.8C363.9 60.8 376.7 103.4 380.1 210.6" stroke="#222" stroke-width="1.28" stroke-dasharray="11.0 0.8 3.7 2.9 12.1 0.9 5.4 1.8" stroke-dashoffset="18.3" fill="none" opacity="0.63"/><path d="M338.3 49.8C363.7 60.7 376.9 103.0 377.4 207.2" stroke="#222" stroke-width="1.07" stroke-dasharray="3.5 2.7 3.8 2.1 5.0 2.8 9.2 2.6" stroke-dashoffset="8.8" fill="none" opacity="0.54"/><path d="M339.4 49.6C367.4 60.2 383.7 101.6 383.2 208.2" stroke="#222" stroke-width="1.25" stroke-dasharray="8.1 1.2 4.0 0.9 5.5 2.6 10.8 1.8" stroke-dashoffset="4.0" fill="none" opacity="0.52"/><path d="M335.5 52.0C370.2 62.5 381.5 103.8 384.5 215.5" stroke="#2a2a2a" stroke-width="0.71" stroke-dasharray="10.9 1.5 5.8 2.0 5.4 2.9 10.3 1.3" stroke-dashoffset="8.7" fill="none" opacity="0.74"/><path d="M337.9 49.8C365.2 60.5 379.1 102.1 381.8 209.5" stroke="#444" stroke-width="1.13" stroke-dasharray="10.5 1.1 12.1 1.1 13.2 3.0 13.3 2.0" stroke-dashoffset="14.9" fill="none" opacity="0.87"/><path d="M331.9 50.9C368.6 60.9 383.0 100.6 387.6 214.8" stroke="#2a2a2a" stroke-width="0.60" stroke-dasharray="11.3 1.2 8.2 2.5 11.4 2.8 9.4 1.5" stroke-dashoffset="5.8" fill="none" opacity="0.52"/><path d="M334.0 49.7C369.6 60.0 384.6 100.8 386.1 214.3" stroke="#444" stroke-width="0.92" stroke-dasharray="11.2 1.2 11.7 1.5 3.8 2.0 4.1 2.0" stroke-dashoffset="1.0" fill="none" opacity="0.68"/><path d="M332.0 51.6C369.1 61.7 382.6 102.0 385.9 216.1" stroke="#444" stroke-width="0.78" stroke-dasharray="3.8 2.4 11.1 1.6 10.3 1.0 3.1 2.2" stroke-dashoffset="3.2" fill="none" opacity="0.56"/><path d="M332.5 50.1C368.0 59.9 389.5 99.3 389.5 214.0" stroke="#333" stroke-width="0.95" stroke-dasharray="4.8 2.0 8.6 1.6 5.2 1.7 5.2 1.1" stroke-dashoffset="26.7" fill="none" opacity="0.46"/><path d="M340.4 51.0C371.8 61.4 391.1 102.7 392.2 217.4" stroke="#333" stroke-width="0.75" stroke-dasharray="4.0 1.2 12.3 3.0 7.7 2.2 4.2 2.1" stroke-dashoffset="7.3" fill="none" opacity="0.80"/><path d="M336.1 52.3C375.9 61.9 388.2 100.3 393.5 212.6" stroke="#444" stroke-width="1.26" stroke-dasharray="13.8 0.9 9.8 2.3 12.0 1.6 11.9 1.8" stroke-dashoffset="12.4" fill="none" opacity="0.63"/><path d="M331.9 50.0C374.6 59.7 388.8 99.1 394.1 220.0" stroke="#333" stroke-width="0.97" stroke-dasharray="11.8 2.5 5.2 2.8 10.5 2.4 3.7 0.8" stroke-dashoffset="9.9" fill="none" opacity="0.48"/><path d="M337.0 49.3C373.2 59.0 395.6 97.9 396.0 213.8" stroke="#444" stroke-width="1.26" stroke-dasharray="11.7 1.0 10.9 1.6 4.8 2.9 10.4 2.4" stroke-dashoffset="27.1" fill="none" opacity="0.79"/><path d="M339.3 52.2C377.9 62.3 391.6 102.5 395.5 218.7" stroke="#2a2a2a" stroke-width="0.74" stroke-dasharray="6.3 2.9 8.8 2.9 4.3 2.9 11.7 1.4" stroke-dashoffset="13.7" fill="none" opacity="0.56"/><path d="M335.9 52.6C376.8 62.4 396.5 102.0 397.2 222.4" stroke="#555" stroke-width="1.06" stroke-dasharray="10.3 1.7 9.9 2.5 6.8 1.6 13.4 1.3" stroke-dashoffset="27.1" fill="none" opacity="0.64"/><path d="M334.0 50.2C374.3 60.1 392.8 100.4 397.8 225.8" stroke="#555" stroke-width="0.79" stroke-dasharray="7.6 2.1 8.0 1.5 5.4 1.6 12.3 2.2" stroke-dashoffset="21.0" fill="none" opacity="0.65"/><path d="M337.6 52.2C377.9 62.4 396.5 103.1 396.1 223.5" stroke="#222" stroke-width="0.82" stroke-dasharray="7.1 2.8 7.3 1.5 4.7 1.2 6.9 2.6" stroke-dashoffset="9.6" fill="none" opacity="0.84"/><path d="M338.9 51.4C377.3 61.5 399.4 102.1 401.6 227.4" stroke="#555" stroke-width="1.20" stroke-dasharray="8.8 0.8 4.9 2.9 8.0 2.6 5.8 1.6" stroke-dashoffset="15.4" fill="none" opacity="0.62"/><path d="M340.3 52.6C377.5 62.1 400.1 100.8 401.6 218.3" stroke="#2a2a2a" stroke-width="0.95" stroke-dasharray="6.6 1.4 6.3 1.5 10.8 2.3 13.3 2.6" stroke-dashoffset="20.7" fill="none" opacity="0.46"/><path d="M339.8 52.6C380.9 62.5 394.9 102.5 399.5 222.3" stroke="#444" stroke-width="1.01" stroke-dasharray="11.3 2.8 11.0 2.4 3.4 1.5 4.5 2.9" stroke-dashoffset="17.3" fill="none" opacity="0.47"/><path d="M334.9 52.0C382.4 61.1 402.2 98.7 403.7 221.9" stroke="#333" stroke-width="1.08" stroke-dasharray="6.2 2.0 7.6 3.0 10.1 2.6 10.4 1.6" stroke-dashoffset="8.3" fill="none" opacity="0.52"/><path d="M336.8 52.3C384.5 61.5 404.7 99.3 405.8 223.4" stroke="#333" stroke-width="0.85" stroke-dasharray="5.2 2.6 3.7 1.5 8.7 2.3 13.0 2.1" stroke-dashoffset="20.8" fill="none" opacity="0.57"/><path d="M339.9 50.9C382.5 60.8 405.3 101.4 405.9 230.5" stroke="#555" stroke-width="1.05" stroke-dasharray="4.2 1.4 7.3 1.6 13.6 1.4 5.2 2.8" stroke-dashoffset="23.4" fill="none" opacity="0.59"/><path d="M332.5 52.0C382.0 61.0 400.4 98.4 406.1 227.1" stroke="#555" stroke-width="1.18" stroke-dasharray="11.3 1.4 7.0 2.8 8.8 1.4 9.9 1.4" stroke-dashoffset="17.0" fill="none" opacity="0.61"/><path d="M340.4 50.1C384.3 59.6 404.7 98.7 405.9 222.4" stroke="#2a2a2a" stroke-width="0.68" stroke-dasharray="4.1 2.1 12.1 2.6 10.8 2.8 4.8 1.2" stroke-dashoffset="12.1" fill="none" opacity="0.83"/><path d="M338.9 52.4C382.8 61.8 402.6 100.6 408.0 227.9" stroke="#444" stroke-width="0.89" stroke-dasharray="6.8 1.2 12.6 2.0 8.7 2.3 12.9 1.1" stroke-dashoffset="15.1" fill="none" opacity="0.83"/><path d="M337.7 51.3C382.9 60.6 403.5 99.3 409.2 229.6" stroke="#444" stroke-width="1.28" stroke-dasharray="11.6 2.3 12.4 1.1 5.4 2.7 5.6 1.1" stroke-dashoffset="27.9" fill="none" opacity="0.62"/><path d="M333.9 51.6C385.9 60.1 412.4 96.3 413.2 228.4" stroke="#444" stroke-width="0.66" stroke-dasharray="10.8 2.5 9.7 1.9 9.7 2.8 6.4 1.6" stroke-dashoffset="0.7" fill="none" opacity="0.68"/><path d="M332.2 52.8C383.0 61.5 406.1 98.1 410.5 230.1" stroke="#333" stroke-width="1.26" stroke-dasharray="7.9 1.9 13.7 2.1 9.6 0.9 8.9 1.8" stroke-dashoffset="28.9" fill="none" opacity="0.69"/><path d="M333.3 51.2C387.9 59.6 412.5 95.2 415.3 229.0" stroke="#2a2a2a" stroke-width="0.88" stroke-dasharray="8.9 0.9 11.6 0.9 8.6 1.7 3.7 2.2" stroke-dashoffset="15.4" fill="none" opacity="0.71"/><path d="M333.3 52.5C387.8 60.8 413.2 96.9 417.5 235.6" stroke="#2a2a2a" stroke-width="0.73" stroke-dasharray="6.6 3.0 3.8 1.9 4.5 1.8 10.5 2.4" stroke-dashoffset="12.1" fill="none" opacity="0.58"/><path d="M332.9 51.9C384.0 60.3 413.9 96.3 415.8 232.4" stroke="#333" stroke-width="1.03" stroke-dasharray="11.7 2.4 11.5 1.2 11.3 2.6 6.3 2.5" stroke-dashoffset="0.5" fill="none" opacity="0.61"/><path d="M335.2 52.3C388.0 60.9 416.9 97.7 417.8 236.7" stroke="#2a2a2a" stroke-width="1.16" stroke-dasharray="5.9 1.6 4.8 2.2 13.9 1.5 3.5 1.2" stroke-dashoffset="13.7" fill="none" opacity="0.50"/><path d="M332.1 49.6C387.3 57.7 414.8 93.1 419.8 234.5" stroke="#222" stroke-width="0.61" stroke-dasharray="13.0 2.5 8.2 2.6 4.4 1.0 9.2 1.9" stroke-dashoffset="27.3" fill="none" opacity="0.77"/><path d="M340.5 52.9C393.3 61.9 418.6 100.2 418.9 238.3" stroke="#555" stroke-width="0.66" stroke-dasharray="4.8 2.8 7.8 1.1 4.2 2.4 8.8 0.9" stroke-dashoffset="23.4" fill="none" opacity="0.54"/><path d="M336.7 52.7C393.1 60.8 417.0 96.2 422.6 234.8" stroke="#2a2a2a" stroke-width="0.74" stroke-dasharray="12.7 1.9 10.0 1.3 5.7 2.8 7.2 1.0" stroke-dashoffset="13.7" fill="none" opacity="0.71"/><path d="M337.4 51.8C392.6 60.1 415.7 95.8 421.3 232.7" stroke="#222" stroke-width="0.95" stroke-dasharray="12.5 1.2 10.2 2.7 13.9 2.4 8.2 2.7" stroke-dashoffset="11.5" fill="none" opacity="0.76"/><path d="M339.0 52.6C390.0 61.4 419.2 99.1 419.9 239.0" stroke="#333" stroke-width="0.75" stroke-dasharray="10.0 2.4 3.4 1.0 13.7 2.6 3.4 0.9" stroke-dashoffset="20.2" fill="none" opacity="0.87"/><path d="M337.4 52.7C391.7 60.9 419.3 96.6 422.6 235.4" stroke="#222" stroke-width="1.27" stroke-dasharray="8.3 2.9 11.4 2.7 4.1 1.1 8.8 2.2" stroke-dashoffset="11.4" fill="none" opacity="0.85"/><path d="M331.7 49.1C390.1 56.6 423.8 90.3 426.1 235.5" stroke="#2a2a2a" stroke-width="0.62" stroke-dasharray="9.8 2.1 11.8 1.0 3.6 2.0 6.2 1.7" stroke-dashoffset="24.9" fill="none" opacity="0.82"/><path d="M335.6 49.5C398.1 57.3 421.2 92.2 427.3 237.7" stroke="#555" stroke-width="0.79" stroke-dasharray="13.8 2.1 3.9 1.9 10.5 1.0 5.6 2.7" stroke-dashoffset="9.3" fill="none" opacity="0.58"/><path d="M335.9 51.3C395.8 59.2 425.5 94.2 426.6 238.4" stroke="#222" stroke-width="1.11" stroke-dasharray="3.8 1.1 10.6 2.1 8.7 1.8 7.5 2.1" stroke-dashoffset="23.9" fill="none" opacity="0.86"/><path d="M339.4 51.9C392.8 60.4 421.8 97.7 426.0 244.6" stroke="#555" stroke-width="0.71" stroke-dasharray="11.8 0.9 9.8 1.4 5.8 1.1 11.7 2.7" stroke-dashoffset="4.9" fill="none" opacity="0.88"/><path d="M337.6 50.9C399.7 58.9 428.7 94.6 430.7 246.3" stroke="#444" stroke-width="1.22" stroke-dasharray="6.0 1.3 7.5 0.8 5.5 2.7 13.1 1.5" stroke-dashoffset="23.8" fill="none" opacity="0.69"/><path d="M332.0 52.3Q417.9 63.1 430.0 246.0" stroke="#444" stroke-width="1.14" stroke-dasharray="3.7 1.1 8.0 1.3 3.6 2.3 5.7 2.8" stroke-dashoffset="18.9" fill="none" opacity="0.74"/><path d="M333.2 52.0Q417.8 58.3 434.5 248.0" stroke="#555" stroke-width="0.62" stroke-dasharray="10.9 3.0 4.9 1.8 10.6 2.3 11.2 2.5" stroke-dashoffset="20.7" fill="none" opacity="0.54"/><path d="M333.6 52.9Q416.7 61.2 434.1 247.7" stroke="#222" stroke-width="1.28" stroke-dasharray="9.6 2.3 6.3 0.9 3.7 0.8 7.0 1.1" stroke-dashoffset="20.6" fill="none" opacity="0.57"/><path d="M338.7 49.7C398.6 57.7 429.9 93.5 431.9 245.7" stroke="#555" stroke-width="0.67" stroke-dasharray="10.7 1.2 13.9 2.7 12.5 1.8 6.5 1.3" stroke-dashoffset="6.3" fill="none" opacity="0.61"/><path d="M334.4 51.5Q421.3 58.4 437.5 244.2" stroke="#222" stroke-width="1.00" stroke-dasharray="4.7 2.3 9.5 2.3 5.0 1.1 4.1 3.0" stroke-dashoffset="6.7" fill="none" opacity="0.48"/><path d="M331.1 52.4Q421.3 56.7 434.3 255.1" stroke="#444" stroke-width="1.13" stroke-dasharray="9.0 1.2 7.1 2.4 7.1 1.2 10.3 2.7" stroke-dashoffset="28.0" fill="none" opacity="0.46"/><path d="M337.5 52.5Q423.5 57.9 439.1 255.0" stroke="#333" stroke-width="0.92" stroke-dasharray="10.1 1.8 12.6 0.9 10.3 2.6 5.6 0.9" stroke-dashoffset="21.3" fill="none" opacity="0.49"/><path d="M332.2 50.9Q420.9 54.2 436.7 249.2" stroke="#555" stroke-width="1.03" stroke-dasharray="3.7 1.2 5.9 1.8 5.6 1.5 3.6 1.9" stroke-dashoffset="30.0" fill="none" opacity="0.87"/><path d="M334.8 49.2Q421.1 53.9 439.3 248.3" stroke="#2a2a2a" stroke-width="0.82" stroke-dasharray="4.9 2.7 5.3 1.0 5.9 2.8 8.1 2.4" stroke-dashoffset="6.2" fill="none" opacity="0.75"/><path d="M334.6 49.5Q429.0 51.3 443.7 254.1" stroke="#333" stroke-width="0.70" stroke-dasharray="8.6 2.2 11.9 2.8 10.1 2.3 3.4 2.2" stroke-dashoffset="10.9" fill="none" opacity="0.62"/><path d="M339.9 50.3Q426.3 59.3 439.1 259.3" stroke="#333" stroke-width="0.82" stroke-dasharray="10.7 0.8 8.0 2.4 7.9 2.7 6.1 2.9" stroke-dashoffset="6.0" fill="none" opacity="0.48"/><path d="M331.3 49.7Q423.7 52.7 442.1 256.3" stroke="#222" stroke-width="0.92" stroke-dasharray="8.2 1.9 13.4 1.9 13.9 2.2 5.4 2.6" stroke-dashoffset="6.8" fill="none" opacity="0.88"/><path d="M334.2 50.6Q427.1 51.0 443.1 259.4" stroke="#222" stroke-width="0.78" stroke-dasharray="9.3 2.5 5.6 2.6 4.7 2.6 9.7 1.8" stroke-dashoffset="16.9" fill="none" opacity="0.57"/><path d="M335.2 52.6Q432.2 54.8 448.1 254.6" stroke="#444" stroke-width="1.27" stroke-dasharray="12.8 0.9 5.6 1.2 9.4 1.8 7.5 2.8" stroke-dashoffset="8.1" fill="none" opacity="0.87"/><path d="M335.1 49.2Q432.6 50.4 448.7 255.4" stroke="#222" stroke-width="1.01" stroke-dasharray="12.9 1.0 11.3 1.2 4.5 1.0 7.1 1.5" stroke-dashoffset="13.4" fill="none" opacity="0.67"/><path d="M336.3 51.7Q429.2 51.9 446.5 261.0" stroke="#2a2a2a" stroke-width="1.07" stroke-dasharray="5.1 1.0 12.9 2.1 5.0 2.3 5.8 1.3" stroke-dashoffset="2.2" fill="none" opacity="0.78"/><path d="M337.2 50.9Q435.5 48.4 449.4 265.2" stroke="#222" stroke-width="1.28" stroke-dasharray="7.9 1.5 11.4 2.9 12.8 1.8 6.6 2.9" stroke-dashoffset="16.3" fill="none" opacity="0.63"/><path d="M332.3 52.0Q430.7 51.5 448.7 265.2" stroke="#555" stroke-width="0.65" stroke-dasharray="10.3 2.5 4.4 1.3 5.4 1.4 3.4 1.1" stroke-dashoffset="17.5" fill="none" opacity="0.87"/><path d="M336.8 50.4Q434.7 48.6 451.7 263.3" stroke="#333" stroke-width="0.77" stroke-dasharray="11.9 2.3 10.4 2.5 7.3 1.1 9.9 1.4" stroke-dashoffset="17.8" fill="none" opacity="0.80"/><path d="M334.7 52.4Q433.2 49.8 452.2 261.4" stroke="#222" stroke-width="0.60" stroke-dasharray="9.6 2.7 12.6 2.1 5.2 0.8 8.9 2.4" stroke-dashoffset="5.2" fill="none" opacity="0.76"/><path d="M331.0 49.9Q432.3 49.8 450.8 268.5" stroke="#333" stroke-width="0.78" stroke-dasharray="3.2 1.1 13.3 2.9 4.6 1.5 8.7 1.5" stroke-dashoffset="1.6" fill="none" opacity="0.49"/><path d="M332.6 49.4Q437.1 51.4 453.8 269.4" stroke="#444" stroke-width="0.90" stroke-dasharray="4.4 2.7 6.6 1.9 4.6 2.1 13.9 2.6" stroke-dashoffset="8.9" fill="none" opacity="0.46"/><path d="M334.1 49.3Q433.6 47.4 453.7 263.6" stroke="#333" stroke-width="1.01" stroke-dasharray="5.1 2.4 11.8 2.5 5.5 1.0 10.3 2.0" stroke-dashoffset="3.2" fill="none" opacity="0.74"/><path d="M333.4 50.0Q434.4 48.9 454.3 269.8" stroke="#222" stroke-width="1.06" stroke-dasharray="3.3 2.4 5.4 1.4 10.0 2.3 9.8 2.8" stroke-dashoffset="7.8" fill="none" opacity="0.52"/><path d="M333.3 52.1Q437.0 52.9 457.6 272.9" stroke="#444" stroke-width="0.77" stroke-dasharray="7.4 2.0 6.4 2.5 6.5 1.4 6.6 1.3" stroke-dashoffset="0.9" fill="none" opacity="0.59"/><path d="M338.9 51.9Q439.1 50.8 458.7 273.7" stroke="#555" stroke-width="0.93" stroke-dasharray="8.8 2.5 4.2 1.0 7.3 1.9 5.8 2.3" stroke-dashoffset="21.4" fill="none" opacity="0.80"/><path d="M334.7 50.8Q438.5 51.9 459.9 277.5" stroke="#2a2a2a" stroke-width="0.62" stroke-dasharray="3.6 2.5 4.0 2.8 4.5 2.7 13.4 2.0" stroke-dashoffset="19.7" fill="none" opacity="0.83"/><path d="M337.6 50.4Q442.1 51.0 458.3 269.9" stroke="#222" stroke-width="0.88" stroke-dasharray="10.9 2.4 3.4 2.8 10.4 2.0 10.7 1.5" stroke-dashoffset="7.2" fill="none" opacity="0.62"/><path d="M339.1 51.8Q441.0 50.6 458.3 279.2" stroke="#555" stroke-width="0.93" stroke-dasharray="13.7 1.1 5.9 2.4 12.8 2.8 8.2 2.9" stroke-dashoffset="21.5" fill="none" opacity="0.78"/><path d="M332.3 49.8Q441.2 51.2 462.7 271.6" stroke="#2a2a2a" stroke-width="0.84" stroke-dasharray="6.7 1.3 5.8 1.8 13.9 1.1 12.4 1.5" stroke-dashoffset="5.6" fill="none" opacity="0.64"/><path d="M339.2 52.5Q442.2 51.6 461.3 271.6" stroke="#444" stroke-width="0.86" stroke-dasharray="9.7 2.8 13.5 1.5 12.3 2.6 5.9 1.6" stroke-dashoffset="3.3" fill="none" opacity="0.55"/><path d="M340.1 50.6Q443.1 50.3 462.5 282.4" stroke="#333" stroke-width="0.81" stroke-dasharray="12.0 2.2 3.6 2.8 4.9 1.1 6.4 1.9" stroke-dashoffset="7.2" fill="none" opacity="0.77"/><path d="M337.7 49.2Q446.1 49.0 464.9 275.6" stroke="#444" stroke-width="0.84" stroke-dasharray="12.7 1.1 13.3 2.4 10.4 2.2 3.5 2.7" stroke-dashoffset="23.5" fill="none" opacity="0.80"/><path d="M339.7 49.9Q446.2 50.7 462.4 277.5" stroke="#222" stroke-width="0.82" stroke-dasharray="4.3 2.8 12.9 0.9 7.1 2.2 8.5 0.9" stroke-dashoffset="14.3" fill="none" opacity="0.62"/><path d="M337.4 52.5Q445.5 52.0 464.7 279.3" stroke="#444" stroke-width="1.22" stroke-dasharray="11.1 1.5 12.6 2.1 4.2 2.1 12.1 1.9" stroke-dashoffset="20.0" fill="none" opacity="0.54"/><path d="M334.6 50.5Q446.6 50.5 467.9 284.6" stroke="#222" stroke-width="1.12" stroke-dasharray="10.2 2.1 8.1 2.1 3.3 1.1 14.0 1.2" stroke-dashoffset="3.0" fill="none" opacity="0.81"/><path d="M337.0 49.2Q445.9 50.7 465.2 288.4" stroke="#555" stroke-width="0.61" stroke-dasharray="4.7 2.2 3.8 1.7 6.6 3.0 8.7 2.9" stroke-dashoffset="26.1" fill="none" opacity="0.72"/><path d="M334.8 52.3C391.7 53.0 421.3 56.0 422.4 67.8" stroke="#222" stroke-width="1.23" stroke-dasharray="13.0 2.0 11.4 2.7 7.0 2.8 5.3 0.9" stroke-dashoffset="28.6" fill="none" opacity="0.68"/><path d="M340.3 51.2C389.4 52.4 416.3 57.3 420.5 75.5" stroke="#222" stroke-width="1.10" stroke-dasharray="7.7 2.1 5.9 1.4 7.6 1.9 8.2 1.0" stroke-dashoffset="22.5" fill="none" opacity="0.56"/><path d="M333.6 51.1C391.9 52.2 419.6 57.3 423.3 77.8" stroke="#333" stroke-width="0.60" stroke-dasharray="13.7 2.4 4.2 1.8 9.5 1.3 12.2 1.7" stroke-dashoffset="26.1" fill="none" opacity="0.84"/><path d="M340.0 51.2C397.4 52.4 422.6 57.4 427.3 77.3" stroke="#333" stroke-width="0.71" stroke-dasharray="10.0 3.0 6.7 2.5 5.7 1.2 4.8 1.7" stroke-dashoffset="6.6" fill="none" opacity="0.49"/><path d="M332.9 50.3Q415.8 50.3 430.4 78.4" stroke="#555" stroke-width="0.85" stroke-dasharray="12.2 2.5 9.5 1.8 6.0 1.9 8.2 1.9" stroke-dashoffset="11.5" fill="none" opacity="0.48"/><path d="M332.0 51.9Q418.3 54.6 432.0 86.8" stroke="#555" stroke-width="1.27" stroke-dasharray="10.1 1.8 12.2 2.0 3.5 2.5 8.2 1.9" stroke-dashoffset="18.6" fill="none" opacity="0.52"/><path d="M337.5 52.0C399.7 53.5 426.8 60.4 431.8 90.0" stroke="#444" stroke-width="0.70" stroke-dasharray="10.5 1.7 6.6 2.1 5.4 2.6 4.7 2.0" stroke-dashoffset="27.1" fill="none" opacity="0.89"/><path d="M337.2 52.2Q422.0 55.8 436.2 88.8" stroke="#2a2a2a" stroke-width="0.78" stroke-dasharray="12.8 1.6 8.9 2.8 10.0 1.8 6.7 1.7" stroke-dashoffset="11.1" fill="none" opacity="0.62"/><path d="M334.6 52.7Q421.9 52.0 438.6 92.2" stroke="#444" stroke-width="0.91" stroke-dasharray="6.2 1.9 13.3 1.6 3.8 1.3 11.1 1.1" stroke-dashoffset="3.7" fill="none" opacity="0.89"/><path d="M340.1 49.4Q424.6 50.2 438.1 98.7" stroke="#222" stroke-width="0.69" stroke-dasharray="11.5 1.1 12.2 0.9 8.5 2.4 7.6 2.2" stroke-dashoffset="9.1" fill="none" opacity="0.49"/><path d="M332.6 49.2Q424.3 48.9 441.0 103.6" stroke="#333" stroke-width="0.78" stroke-dasharray="4.2 1.2 5.0 2.1 10.4 2.9 7.0 3.0" stroke-dashoffset="7.0" fill="none" opacity="0.89"/><path d="M340.9 51.8Q428.5 51.1 441.3 102.2" stroke="#333" stroke-width="0.91" stroke-dasharray="11.7 2.2 10.2 1.8 9.8 2.8 11.6 2.0" stroke-dashoffset="0.7" fill="none" opacity="0.73"/><path d="M337.6 51.0Q429.2 54.4 442.3 104.9" stroke="#2a2a2a" stroke-width="0.85" stroke-dasharray="8.7 1.9 10.6 1.1 10.1 1.9 13.2 2.3" stroke-dashoffset="21.2" fill="none" opacity="0.54"/><path d="M334.8 51.7Q430.1 54.7 444.6 113.9" stroke="#2a2a2a" stroke-width="1.08" stroke-dasharray="13.2 2.2 6.5 1.6 6.0 2.8 11.7 2.5" stroke-dashoffset="9.5" fill="none" opacity="0.79"/><path d="M333.6 51.4Q427.6 50.2 444.8 122.2" stroke="#555" stroke-width="0.96" stroke-dasharray="13.5 2.7 13.9 1.9 12.1 0.9 7.7 1.0" stroke-dashoffset="21.2" fill="none" opacity="0.45"/><path d="M336.9 49.5Q432.0 47.8 447.3 126.6" stroke="#2a2a2a" stroke-width="1.06" stroke-dasharray="12.6 1.8 11.0 1.4 11.0 2.2 4.1 1.9" stroke-dashoffset="8.3" fill="none" opacity="0.62"/><path d="M340.2 52.8Q432.3 54.8 451.8 129.7" stroke="#2a2a2a" stroke-width="1.17" stroke-dasharray="10.6 2.2 6.1 2.2 6.5 2.3 10.7 2.9" stroke-dashoffset="8.9" fill="none" opacity="0.72"/><path d="M339.6 51.9Q433.6 52.6 452.2 136.9" stroke="#555" stroke-width="1.21" stroke-dasharray="12.4 1.4 8.6 1.8 3.3 1.0 11.7 2.7" stroke-dashoffset="2.4" fill="none" opacity="0.58"/><path d="M339.4 51.4Q434.6 48.8 453.1 148.1" stroke="#222" stroke-width="0.71" stroke-dasharray="10.1 2.6 5.9 1.2 13.0 1.3 12.4 1.3" stroke-dashoffset="29.9" fill="none" opacity="0.59"/><path d="M340.9 49.3Q434.2 47.6 450.5 155.9" stroke="#555" stroke-width="0.78" stroke-dasharray="5.3 1.7 8.2 1.5 3.7 1.6 10.2 1.9" stroke-dashoffset="15.6" fill="none" opacity="0.50"/><path d="M334.2 52.6Q435.6 55.3 454.5 166.9" stroke="#555" stroke-width="1.29" stroke-dasharray="8.4 1.4 7.0 2.0 11.4 2.1 4.8 2.7" stroke-dashoffset="4.2" fill="none" opacity="0.71"/><path d="M340.7 50.5Q436.4 53.1 453.5 164.7" stroke="#222" stroke-width="0.74" stroke-dasharray="6.5 1.8 13.5 1.8 7.1 2.5 13.3 2.3" stroke-dashoffset="28.7" fill="none" opacity="0.75"/><path d="M332.7 49.8Q433.0 47.4 452.5 168.6" stroke="#333" stroke-width="0.80" stroke-dasharray="10.8 2.1 7.6 1.3 3.8 1.9 10.3 2.5" stroke-dashoffset="3.0" fill="none" opacity="0.54"/><path d="M336.8 51.7Q433.7 49.9 454.2 180.3" stroke="#222" stroke-width="0.73" stroke-dasharray="13.7 1.5 9.3 0.8 7.6 2.8 9.5 2.6" stroke-dashoffset="25.0" fill="none" opacity="0.50"/><path d="M340.3 50.1Q443.6 50.2 459.1 179.5" stroke="#444" stroke-width="0.90" stroke-dasharray="10.4 1.6 13.9 0.9 9.6 2.3 7.7 2.6" stroke-dashoffset="26.1" fill="none" opacity="0.46"/><path d="M331.3 49.2Q436.5 49.7 457.6 183.8" stroke="#555" stroke-width="1.16" stroke-dasharray="4.8 2.4 9.1 1.6 12.9 1.4 4.6 1.1" stroke-dashoffset="4.8" fill="none" opacity="0.68"/><path d="M336.7 51.2Q442.4 51.8 458.7 187.0" stroke="#222" stroke-width="0.90" stroke-dasharray="11.0 1.3 4.5 2.8 3.1 2.8 6.9 2.5" stroke-dashoffset="14.3" fill="none" opacity="0.47"/><path d="M340.8 53.0Q439.7 51.8 457.7 194.9" stroke="#333" stroke-width="0.96" stroke-dasharray="13.2 2.1 5.0 1.0 3.9 1.5 4.0 2.2" stroke-dashoffset="28.1" fill="none" opacity="0.56"/><path d="M332.5 50.2Q438.7 50.3 460.5 197.0" stroke="#2a2a2a" stroke-width="0.83" stroke-dasharray="7.7 1.2 3.5 1.1 12.3 2.2 4.7 2.2" stroke-dashoffset="3.1" fill="none" opacity="0.78"/><path d="M338.2 51.0Q442.6 49.8 460.8 197.4" stroke="#555" stroke-width="0.86" stroke-dasharray="5.8 1.8 5.6 1.8 10.7 2.3 4.1 1.7" stroke-dashoffset="7.4" fill="none" opacity="0.75"/><path d="M334.3 49.2Q442.3 50.2 463.5 202.3" stroke="#222" stroke-width="0.95" stroke-dasharray="4.7 1.0 9.0 3.0 13.1 1.0 8.5 1.9" stroke-dashoffset="24.3" fill="none" opacity="0.58"/><path d="M340.3 52.3Q443.8 54.1 465.0 198.6" stroke="#555" stroke-width="0.77" stroke-dasharray="7.8 2.3 3.3 1.2 13.8 2.4 11.7 2.5" stroke-dashoffset="6.6" fill="none" opacity="0.88"/><path d="M333.7 49.7Q449.1 48.2 468.4 205.5" stroke="#444" stroke-width="0.68" stroke-dasharray="4.8 1.8 5.0 1.1 9.0 1.7 5.6 2.8" stroke-dashoffset="24.2" fill="none" opacity="0.49"/><path d="M333.2 49.6Q452.0 50.0 469.8 205.9" stroke="#444" stroke-width="0.74" stroke-dasharray="14.0 1.5 13.0 2.5 12.5 2.1 13.7 2.2" stroke-dashoffset="15.6" fill="none" opacity="0.67"/><path d="M334.4 50.5Q446.4 51.3 468.9 215.5" stroke="#333" stroke-width="0.91" stroke-dasharray="9.8 2.3 4.4 0.8 7.7 2.1 3.5 1.4" stroke-dashoffset="11.2" fill="none" opacity="0.66"/><path d="M338.0 52.5Q449.3 51.6 470.3 219.0" stroke="#444" stroke-width="1.13" stroke-dasharray="7.4 2.4 12.0 1.9 11.0 1.3 8.0 1.6" stroke-dashoffset="22.0" fill="none" opacity="0.54"/><path d="M333.3 52.1Q252.5 56.9 234.9 108.4" stroke="#444" stroke-width="0.76" stroke-dasharray="10.6 1.4 3.7 1.6 3.4 2.9 8.8 2.3" stroke-dashoffset="10.1" fill="none" opacity="0.50"/><path d="M339.0 51.9Q246.1 53.6 232.1 110.0" stroke="#444" stroke-width="1.10" stroke-dasharray="12.9 0.9 4.4 1.5 7.6 2.9 6.2 1.1" stroke-dashoffset="10.6" fill="none" opacity="0.48"/><path d="M337.7 50.0Q244.7 48.5 227.7 112.7" stroke="#222" stroke-width="0.61" stroke-dasharray="7.7 1.2 11.5 1.6 4.3 2.8 7.8 1.7" stroke-dashoffset="11.7" fill="none" opacity="0.62"/><path d="M331.1 50.5Q247.8 51.7 230.2 119.3" stroke="#222" stroke-width="1.01" stroke-dasharray="9.9 1.2 3.2 2.3 9.7 1.4 5.2 2.7" stroke-dashoffset="17.2" fill="none" opacity="0.59"/><path d="M331.4 50.3Q242.7 53.5 227.8 127.2" stroke="#2a2a2a" stroke-width="0.90" stroke-dasharray="8.1 1.3 7.8 3.0 13.1 0.8 5.5 1.5" stroke-dashoffset="10.0" fill="none" opacity="0.56"/><path d="M337.3 51.1Q244.5 51.4 225.7 128.6" stroke="#555" stroke-width="0.87" stroke-dasharray="11.5 1.9 13.9 0.9 7.2 1.3 9.9 2.5" stroke-dashoffset="24.0" fill="none" opacity="0.50"/><path d="M333.6 52.0Q240.2 54.7 224.0 140.6" stroke="#222" stroke-width="0.84" stroke-dasharray="6.4 2.7 10.6 0.9 13.0 1.2 3.1 1.7" stroke-dashoffset="11.1" fill="none" opacity="0.77"/><path d="M332.0 51.1Q240.3 50.3 220.9 137.3" stroke="#2a2a2a" stroke-width="0.68" stroke-dasharray="5.3 2.7 6.9 1.5 9.8 2.0 6.1 1.0" stroke-dashoffset="19.7" fill="none" opacity="0.69"/><path d="M334.3 50.3Q239.2 48.3 224.2 142.3" stroke="#555" stroke-width="1.09" stroke-dasharray="3.2 2.8 5.4 0.8 14.0 1.2 8.8 1.6" stroke-dashoffset="4.9" fill="none" opacity="0.86"/><path d="M339.2 49.2Q236.6 50.1 220.3 152.8" stroke="#444" stroke-width="0.70" stroke-dasharray="10.5 2.3 8.5 1.8 5.2 1.2 10.1 2.3" stroke-dashoffset="18.4" fill="none" opacity="0.53"/></g>
<g filter="url(#b1)"><path d="M336.2 52.9Q238.6 53.4 221.5 130.5" stroke="#fbfbfb" stroke-width="0.96" fill="none" opacity="0.75"/><path d="M332.9 55.1Q239.1 55.4 221.2 143.0" stroke="#fbfbfb" stroke-width="1.07" fill="none" opacity="0.75"/><path d="M335.1 56.0Q237.8 55.8 221.2 148.8" stroke="#fbfbfb" stroke-width="1.96" fill="none" opacity="0.75"/><path d="M341.2 54.9Q233.3 56.7 216.4 149.4" stroke="#fbfbfb" stroke-width="1.97" fill="none" opacity="0.75"/><path d="M339.6 52.6Q242.3 52.7 223.6 144.3" stroke="#fbfbfb" stroke-width="0.82" fill="none" opacity="0.75"/><path d="M342.2 53.6Q241.2 55.1 223.2 157.3" stroke="#fbfbfb" stroke-width="1.04" fill="none" opacity="0.75"/><path d="M342.4 53.0Q232.3 51.3 215.0 153.9" stroke="#fbfbfb" stroke-width="1.55" fill="none" opacity="0.75"/><path d="M329.9 52.0Q236.0 53.6 217.4 156.0" stroke="#fbfbfb" stroke-width="1.84" fill="none" opacity="0.75"/><path d="M343.8 53.6Q242.2 54.9 222.2 159.3" stroke="#fbfbfb" stroke-width="1.68" fill="none" opacity="0.75"/><path d="M331.6 51.5Q240.0 53.9 223.3 167.7" stroke="#fbfbfb" stroke-width="0.97" fill="none" opacity="0.75"/><path d="M339.2 53.8Q238.6 55.6 222.3 168.5" stroke="#fbfbfb" stroke-width="1.14" fill="none" opacity="0.75"/><path d="M339.9 56.0Q235.4 54.9 217.4 175.6" stroke="#fbfbfb" stroke-width="1.06" fill="none" opacity="0.75"/><path d="M343.3 53.2Q237.1 54.2 220.6 174.4" stroke="#fbfbfb" stroke-width="1.69" fill="none" opacity="0.75"/><path d="M342.0 53.1Q237.6 53.8 218.1 173.9" stroke="#fbfbfb" stroke-width="1.29" fill="none" opacity="0.75"/><path d="M336.4 51.9Q242.4 53.1 225.8 178.8" stroke="#fbfbfb" stroke-width="1.04" fill="none" opacity="0.75"/><path d="M339.6 53.1Q241.5 53.7 225.2 174.1" stroke="#fbfbfb" stroke-width="1.38" fill="none" opacity="0.75"/><path d="M334.0 54.5Q235.0 55.7 219.8 183.1" stroke="#fbfbfb" stroke-width="1.10" fill="none" opacity="0.75"/><path d="M341.3 54.3Q240.3 55.4 224.2 189.2" stroke="#fbfbfb" stroke-width="1.15" fill="none" opacity="0.75"/><path d="M341.8 55.7Q242.7 56.4 225.5 195.2" stroke="#fbfbfb" stroke-width="1.94" fill="none" opacity="0.75"/><path d="M331.0 51.6Q238.4 52.2 223.7 190.7" stroke="#fbfbfb" stroke-width="1.84" fill="none" opacity="0.75"/><path d="M334.2 51.9Q238.0 51.8 222.5 192.1" stroke="#fbfbfb" stroke-width="1.45" fill="none" opacity="0.75"/><path d="M335.0 54.0Q247.5 55.7 230.1 181.6" stroke="#fbfbfb" stroke-width="0.85" fill="none" opacity="0.75"/><path d="M340.3 54.4Q246.1 53.6 228.2 185.5" stroke="#fbfbfb" stroke-width="1.67" fill="none" opacity="0.75"/><path d="M331.7 54.4Q245.5 58.0 230.3 188.5" stroke="#fbfbfb" stroke-width="1.57" fill="none" opacity="0.75"/><path d="M339.1 51.9Q245.1 54.2 230.5 195.5" stroke="#fbfbfb" stroke-width="1.84" fill="none" opacity="0.75"/><path d="M328.8 52.5Q240.5 57.4 226.9 186.5" stroke="#fbfbfb" stroke-width="1.10" fill="none" opacity="0.75"/><path d="M332.8 53.8Q247.0 57.4 230.8 196.8" stroke="#fbfbfb" stroke-width="1.07" fill="none" opacity="0.75"/><path d="M328.1 53.0Q245.2 62.2 229.3 195.2" stroke="#fbfbfb" stroke-width="1.05" fill="none" opacity="0.75"/><path d="M328.6 55.5C266.6 61.3 236.9 87.3 233.8 199.7" stroke="#fbfbfb" stroke-width="0.89" fill="none" opacity="0.75"/><path d="M343.2 54.1Q253.9 57.7 236.9 190.2" stroke="#fbfbfb" stroke-width="1.37" fill="none" opacity="0.75"/><path d="M330.9 53.4C275.2 59.5 247.9 85.8 244.2 189.5" stroke="#fbfbfb" stroke-width="1.35" fill="none" opacity="0.75"/><path d="M337.2 52.5C274.7 58.4 246.9 85.0 243.7 198.1" stroke="#fbfbfb" stroke-width="1.86" fill="none" opacity="0.75"/><path d="M343.7 51.1Q263.1 59.7 247.2 193.5" stroke="#fbfbfb" stroke-width="0.96" fill="none" opacity="0.75"/><path d="M332.8 55.3C280.2 61.4 254.9 87.5 251.0 185.3" stroke="#fbfbfb" stroke-width="1.59" fill="none" opacity="0.75"/><path d="M328.4 53.6C276.7 60.4 251.5 89.1 249.8 192.7" stroke="#fbfbfb" stroke-width="1.60" fill="none" opacity="0.75"/><path d="M332.6 55.7C281.7 62.2 254.1 89.9 252.4 191.6" stroke="#fbfbfb" stroke-width="1.68" fill="none" opacity="0.75"/><path d="M329.1 56.6C278.7 63.5 254.2 92.4 252.4 194.9" stroke="#fbfbfb" stroke-width="1.27" fill="none" opacity="0.75"/><path d="M336.0 53.5C283.4 60.1 261.3 88.1 256.2 190.9" stroke="#fbfbfb" stroke-width="1.26" fill="none" opacity="0.75"/><path d="M335.0 52.4C291.9 59.7 271.8 89.7 267.8 186.4" stroke="#fbfbfb" stroke-width="1.27" fill="none" opacity="0.75"/><path d="M340.1 52.7C289.4 58.9 267.0 85.4 262.4 180.3" stroke="#fbfbfb" stroke-width="1.04" fill="none" opacity="0.75"/><path d="M335.0 55.6C291.0 62.4 269.6 90.5 267.2 181.6" stroke="#fbfbfb" stroke-width="1.93" fill="none" opacity="0.75"/><path d="M342.4 52.4C295.5 59.6 275.7 89.0 273.1 185.9" stroke="#fbfbfb" stroke-width="1.90" fill="none" opacity="0.75"/><path d="M332.8 54.5C298.7 62.1 278.4 92.2 277.8 178.4" stroke="#fbfbfb" stroke-width="1.16" fill="none" opacity="0.75"/><path d="M339.5 51.1C299.1 58.5 278.1 88.1 277.6 178.9" stroke="#fbfbfb" stroke-width="0.98" fill="none" opacity="0.75"/><path d="M331.6 51.5C296.7 59.4 278.5 90.7 277.9 179.4" stroke="#fbfbfb" stroke-width="1.79" fill="none" opacity="0.75"/><path d="M334.7 52.5C298.9 61.2 285.5 95.4 282.5 190.9" stroke="#fbfbfb" stroke-width="0.92" fill="none" opacity="0.75"/><path d="M343.1 53.4C306.5 61.9 289.6 95.5 289.2 190.6" stroke="#fbfbfb" stroke-width="1.63" fill="none" opacity="0.75"/><path d="M337.4 55.3C303.6 63.5 289.1 95.6 287.3 183.4" stroke="#fbfbfb" stroke-width="1.14" fill="none" opacity="0.75"/><path d="M337.4 52.8C303.7 61.3 291.2 95.0 288.1 186.2" stroke="#fbfbfb" stroke-width="1.39" fill="none" opacity="0.75"/><path d="M331.7 51.7C306.2 60.7 292.3 95.8 291.2 183.6" stroke="#fbfbfb" stroke-width="1.29" fill="none" opacity="0.75"/><path d="M342.3 52.6C314.6 61.8 300.2 97.4 296.6 191.0" stroke="#fbfbfb" stroke-width="1.11" fill="none" opacity="0.75"/><path d="M341.0 54.7C308.2 63.4 292.9 97.8 289.6 193.0" stroke="#fbfbfb" stroke-width="1.47" fill="none" opacity="0.75"/><path d="M329.3 56.2C304.3 64.7 290.4 97.6 290.1 178.9" stroke="#fbfbfb" stroke-width="1.36" fill="none" opacity="0.75"/><path d="M339.4 51.6C310.9 59.9 298.1 92.4 295.7 176.0" stroke="#fbfbfb" stroke-width="1.62" fill="none" opacity="0.75"/><path d="M328.7 52.1C309.4 61.8 300.1 98.5 299.5 181.4" stroke="#fbfbfb" stroke-width="1.64" fill="none" opacity="0.75"/><path d="M339.8 54.9C310.5 63.5 295.2 97.1 294.6 184.8" stroke="#fbfbfb" stroke-width="1.94" fill="none" opacity="0.75"/><path d="M343.4 55.7C317.4 64.3 301.9 97.8 301.2 182.9" stroke="#fbfbfb" stroke-width="1.69" fill="none" opacity="0.75"/><path d="M339.4 56.6C313.1 65.9 303.0 102.0 300.3 190.9" stroke="#fbfbfb" stroke-width="1.37" fill="none" opacity="0.75"/><path d="M333.0 53.2C313.3 63.2 302.6 101.4 300.6 190.3" stroke="#fbfbfb" stroke-width="1.00" fill="none" opacity="0.75"/><path d="M330.5 54.4C306.1 63.4 295.4 98.1 295.4 180.8" stroke="#fbfbfb" stroke-width="1.66" fill="none" opacity="0.75"/><path d="M331.6 56.1C308.4 65.8 297.7 102.9 297.2 190.6" stroke="#fbfbfb" stroke-width="1.27" fill="none" opacity="0.75"/><path d="M328.2 53.6C310.3 62.6 299.1 96.9 298.4 174.8" stroke="#fbfbfb" stroke-width="0.80" fill="none" opacity="0.75"/><path d="M343.4 52.4C312.1 60.5 300.4 92.2 297.7 175.2" stroke="#fbfbfb" stroke-width="1.50" fill="none" opacity="0.75"/><path d="M336.1 52.5C311.3 62.4 302.2 100.5 298.7 193.2" stroke="#fbfbfb" stroke-width="1.86" fill="none" opacity="0.75"/><path d="M330.0 56.1C309.6 65.7 298.8 102.4 296.7 188.4" stroke="#fbfbfb" stroke-width="1.46" fill="none" opacity="0.75"/><path d="M341.0 51.9C315.9 60.9 303.3 95.5 303.0 179.9" stroke="#fbfbfb" stroke-width="1.65" fill="none" opacity="0.75"/><path d="M337.2 55.7C318.9 65.3 308.9 101.9 306.4 185.8" stroke="#fbfbfb" stroke-width="1.48" fill="none" opacity="0.75"/><path d="M333.2 56.6C315.1 65.6 308.2 100.0 306.3 176.0" stroke="#fbfbfb" stroke-width="1.92" fill="none" opacity="0.75"/><path d="M338.3 55.0C322.6 65.3 315.3 104.3 314.5 188.4" stroke="#fbfbfb" stroke-width="1.71" fill="none" opacity="0.75"/><path d="M333.1 51.7C319.5 62.6 315.3 103.6 313.8 188.5" stroke="#fbfbfb" stroke-width="1.87" fill="none" opacity="0.75"/><path d="M330.0 51.8C322.1 62.3 317.6 101.2 315.0 179.1" stroke="#fbfbfb" stroke-width="1.33" fill="none" opacity="0.75"/><path d="M340.7 54.8C322.2 65.1 313.6 104.3 314.3 190.8" stroke="#fbfbfb" stroke-width="1.34" fill="none" opacity="0.75"/><path d="M328.3 53.9C322.0 65.5 320.9 108.4 319.1 190.0" stroke="#fbfbfb" stroke-width="1.74" fill="none" opacity="0.75"/><path d="M337.4 52.4C326.0 62.8 321.8 101.8 320.6 180.8" stroke="#fbfbfb" stroke-width="1.41" fill="none" opacity="0.75"/><path d="M333.2 54.6C330.4 65.3 328.1 104.3 330.0 174.8" stroke="#fbfbfb" stroke-width="0.91" fill="none" opacity="0.75"/><path d="M328.9 53.5C332.7 65.2 333.2 108.0 331.9 185.2" stroke="#fbfbfb" stroke-width="1.50" fill="none" opacity="0.75"/><path d="M337.3 51.1C333.7 62.1 329.5 102.7 331.0 177.9" stroke="#fbfbfb" stroke-width="1.45" fill="none" opacity="0.75"/><path d="M334.0 54.0C335.4 64.9 335.9 105.0 334.7 175.9" stroke="#fbfbfb" stroke-width="1.52" fill="none" opacity="0.75"/><path d="M329.9 54.6C339.4 66.1 340.6 109.2 343.0 193.6" stroke="#fbfbfb" stroke-width="1.85" fill="none" opacity="0.75"/><path d="M338.6 52.7C345.7 64.5 345.7 108.5 347.0 191.6" stroke="#fbfbfb" stroke-width="1.49" fill="none" opacity="0.75"/><path d="M334.1 52.8C343.1 63.9 348.6 105.5 349.0 188.6" stroke="#fbfbfb" stroke-width="1.91" fill="none" opacity="0.75"/><path d="M337.1 56.5C344.0 68.1 349.9 111.4 350.6 196.7" stroke="#fbfbfb" stroke-width="1.46" fill="none" opacity="0.75"/><path d="M339.6 56.8C350.0 67.6 354.3 107.7 354.8 187.9" stroke="#fbfbfb" stroke-width="1.65" fill="none" opacity="0.75"/><path d="M343.2 51.1C349.3 63.2 356.0 108.4 355.3 196.4" stroke="#fbfbfb" stroke-width="0.84" fill="none" opacity="0.75"/><path d="M338.4 55.8C349.9 66.4 357.8 106.1 357.7 188.4" stroke="#fbfbfb" stroke-width="1.43" fill="none" opacity="0.75"/><path d="M337.7 53.0C356.1 64.2 365.1 106.7 364.4 200.8" stroke="#fbfbfb" stroke-width="1.10" fill="none" opacity="0.75"/><path d="M336.3 53.3C353.7 64.2 364.2 105.8 365.1 199.4" stroke="#fbfbfb" stroke-width="1.73" fill="none" opacity="0.75"/><path d="M343.0 51.1C360.6 62.2 365.1 104.1 367.5 195.0" stroke="#fbfbfb" stroke-width="1.81" fill="none" opacity="0.75"/><path d="M334.4 54.3C361.5 63.3 374.1 98.5 377.2 188.4" stroke="#fbfbfb" stroke-width="0.96" fill="none" opacity="0.75"/><path d="M332.9 55.2C362.6 64.3 375.1 99.7 376.8 191.0" stroke="#fbfbfb" stroke-width="0.97" fill="none" opacity="0.75"/><path d="M341.1 55.9C365.3 66.8 373.8 108.5 376.3 208.1" stroke="#fbfbfb" stroke-width="0.80" fill="none" opacity="0.75"/><path d="M341.9 56.0C366.6 66.6 377.4 107.6 378.3 206.3" stroke="#fbfbfb" stroke-width="1.80" fill="none" opacity="0.75"/><path d="M343.8 53.0C372.3 63.4 387.7 104.3 388.8 210.7" stroke="#fbfbfb" stroke-width="1.62" fill="none" opacity="0.75"/><path d="M341.6 54.4C370.6 64.1 382.7 101.8 385.9 199.5" stroke="#fbfbfb" stroke-width="1.83" fill="none" opacity="0.75"/><path d="M342.2 52.5C373.3 62.4 391.5 101.6 392.4 208.9" stroke="#fbfbfb" stroke-width="1.72" fill="none" opacity="0.75"/><path d="M332.9 51.6C370.2 61.2 389.5 99.6 390.5 212.2" stroke="#fbfbfb" stroke-width="0.99" fill="none" opacity="0.75"/><path d="M329.7 53.1C372.9 61.1 397.0 94.0 398.7 202.0" stroke="#fbfbfb" stroke-width="0.91" fill="none" opacity="0.75"/><path d="M338.7 51.5C376.6 61.3 392.1 100.3 394.7 212.9" stroke="#fbfbfb" stroke-width="1.34" fill="none" opacity="0.75"/><path d="M328.5 53.0C373.8 61.9 395.3 98.2 396.9 216.7" stroke="#fbfbfb" stroke-width="1.44" fill="none" opacity="0.75"/><path d="M339.2 51.8C378.2 60.8 399.1 97.4 400.6 208.7" stroke="#fbfbfb" stroke-width="1.06" fill="none" opacity="0.75"/><path d="M333.2 52.7C381.5 61.0 404.2 95.9 407.7 216.7" stroke="#fbfbfb" stroke-width="1.91" fill="none" opacity="0.75"/><path d="M343.0 53.7C383.6 63.2 403.4 101.8 407.0 222.3" stroke="#fbfbfb" stroke-width="0.92" fill="none" opacity="0.75"/><path d="M336.0 55.6C382.9 64.2 402.3 99.5 405.2 215.6" stroke="#fbfbfb" stroke-width="1.26" fill="none" opacity="0.75"/><path d="M341.4 56.4C386.4 64.7 408.0 99.2 409.7 211.5" stroke="#fbfbfb" stroke-width="1.91" fill="none" opacity="0.75"/><path d="M338.6 52.8C387.1 61.1 410.4 95.7 413.5 216.4" stroke="#fbfbfb" stroke-width="1.89" fill="none" opacity="0.75"/><path d="M342.5 56.6C388.5 65.6 414.3 103.0 415.5 230.9" stroke="#fbfbfb" stroke-width="1.57" fill="none" opacity="0.75"/><path d="M342.0 53.5C396.0 61.1 421.1 93.7 423.0 214.8" stroke="#fbfbfb" stroke-width="1.25" fill="none" opacity="0.75"/><path d="M341.3 52.3C394.0 60.4 418.5 95.1 423.0 225.0" stroke="#fbfbfb" stroke-width="1.76" fill="none" opacity="0.75"/><path d="M339.7 51.5C396.4 59.0 423.8 91.6 427.6 222.0" stroke="#fbfbfb" stroke-width="1.49" fill="none" opacity="0.75"/><path d="M342.2 56.7C395.5 64.4 421.5 97.8 426.6 226.5" stroke="#fbfbfb" stroke-width="1.42" fill="none" opacity="0.75"/><path d="M337.3 53.7Q417.6 65.2 432.4 229.1" stroke="#fbfbfb" stroke-width="1.01" fill="none" opacity="0.75"/><path d="M343.0 54.5C398.8 62.3 426.2 96.2 430.4 231.1" stroke="#fbfbfb" stroke-width="1.39" fill="none" opacity="0.75"/><path d="M335.1 56.9Q416.4 65.2 432.8 229.1" stroke="#fbfbfb" stroke-width="1.21" fill="none" opacity="0.75"/><path d="M340.5 56.3C399.5 64.1 428.2 98.7 431.7 242.1" stroke="#fbfbfb" stroke-width="1.44" fill="none" opacity="0.75"/><path d="M328.7 51.4Q421.3 53.5 438.2 242.6" stroke="#fbfbfb" stroke-width="1.78" fill="none" opacity="0.75"/><path d="M332.8 51.4Q422.1 52.8 439.2 244.1" stroke="#fbfbfb" stroke-width="1.38" fill="none" opacity="0.75"/><path d="M328.5 55.4Q424.8 54.4 442.1 239.1" stroke="#fbfbfb" stroke-width="1.02" fill="none" opacity="0.75"/><path d="M330.9 55.9Q425.2 57.1 442.5 249.6" stroke="#fbfbfb" stroke-width="1.52" fill="none" opacity="0.75"/><path d="M338.5 53.4Q431.6 56.4 445.8 241.8" stroke="#fbfbfb" stroke-width="1.44" fill="none" opacity="0.75"/><path d="M338.2 51.6Q430.9 51.9 445.6 244.7" stroke="#fbfbfb" stroke-width="1.33" fill="none" opacity="0.75"/><path d="M341.9 55.7Q434.1 56.7 451.6 248.2" stroke="#fbfbfb" stroke-width="1.16" fill="none" opacity="0.75"/><path d="M339.6 53.1Q438.0 55.0 453.9 255.5" stroke="#fbfbfb" stroke-width="1.25" fill="none" opacity="0.75"/><path d="M343.8 51.1Q440.0 50.6 456.8 247.3" stroke="#fbfbfb" stroke-width="1.72" fill="none" opacity="0.75"/><path d="M333.0 52.2Q439.9 52.2 457.6 259.4" stroke="#fbfbfb" stroke-width="0.84" fill="none" opacity="0.75"/><path d="M340.3 52.3Q437.9 53.0 456.2 251.1" stroke="#fbfbfb" stroke-width="1.72" fill="none" opacity="0.75"/><path d="M338.2 53.7Q441.0 53.8 460.5 266.0" stroke="#fbfbfb" stroke-width="1.52" fill="none" opacity="0.75"/><path d="M339.7 52.2Q438.7 51.6 458.1 261.9" stroke="#fbfbfb" stroke-width="1.68" fill="none" opacity="0.75"/><path d="M337.2 52.0Q446.0 50.6 464.0 259.8" stroke="#fbfbfb" stroke-width="0.92" fill="none" opacity="0.75"/><path d="M332.0 54.1Q443.5 53.2 461.1 276.6" stroke="#fbfbfb" stroke-width="1.70" fill="none" opacity="0.75"/><path d="M339.1 54.4Q446.0 52.4 462.7 280.0" stroke="#fbfbfb" stroke-width="1.20" fill="none" opacity="0.75"/><path d="M333.1 52.2C387.2 52.9 417.2 56.0 419.3 68.1" stroke="#fbfbfb" stroke-width="1.17" fill="none" opacity="0.75"/><path d="M328.2 56.4C388.2 56.6 418.6 57.2 422.9 60.2" stroke="#fbfbfb" stroke-width="0.94" fill="none" opacity="0.75"/><path d="M330.9 52.5Q415.4 53.4 431.2 69.9" stroke="#fbfbfb" stroke-width="1.73" fill="none" opacity="0.75"/><path d="M339.6 53.1Q424.3 54.4 439.0 82.4" stroke="#fbfbfb" stroke-width="1.20" fill="none" opacity="0.75"/><path d="M330.1 56.3Q424.8 57.9 439.5 76.1" stroke="#fbfbfb" stroke-width="0.84" fill="none" opacity="0.75"/><path d="M339.2 52.4Q426.3 53.8 442.4 96.8" stroke="#fbfbfb" stroke-width="1.60" fill="none" opacity="0.75"/><path d="M331.1 54.8Q425.5 55.6 443.7 108.1" stroke="#fbfbfb" stroke-width="0.85" fill="none" opacity="0.75"/><path d="M332.4 51.7Q425.4 52.9 443.3 107.8" stroke="#fbfbfb" stroke-width="0.92" fill="none" opacity="0.75"/><path d="M338.0 56.2Q430.1 56.8 445.1 114.1" stroke="#fbfbfb" stroke-width="1.92" fill="none" opacity="0.75"/><path d="M333.4 53.4Q438.6 55.0 455.0 132.5" stroke="#fbfbfb" stroke-width="1.04" fill="none" opacity="0.75"/><path d="M336.7 56.6Q432.6 57.6 448.2 158.1" stroke="#fbfbfb" stroke-width="1.52" fill="none" opacity="0.75"/><path d="M329.6 56.8Q433.2 56.0 450.4 165.3" stroke="#fbfbfb" stroke-width="1.62" fill="none" opacity="0.75"/><path d="M334.6 55.5Q434.1 56.7 452.2 176.5" stroke="#fbfbfb" stroke-width="1.37" fill="none" opacity="0.75"/><path d="M341.0 52.8Q441.8 51.1 459.7 166.5" stroke="#fbfbfb" stroke-width="1.83" fill="none" opacity="0.75"/><path d="M338.8 53.6Q449.0 51.9 466.3 190.0" stroke="#fbfbfb" stroke-width="1.64" fill="none" opacity="0.75"/><path d="M339.6 54.6Q441.0 55.0 459.2 195.6" stroke="#fbfbfb" stroke-width="1.78" fill="none" opacity="0.75"/><path d="M332.4 51.2Q448.1 49.7 470.6 191.1" stroke="#fbfbfb" stroke-width="1.99" fill="none" opacity="0.75"/><path d="M339.8 52.3Q447.1 52.6 465.3 211.1" stroke="#fbfbfb" stroke-width="0.96" fill="none" opacity="0.75"/><path d="M334.6 56.7Q243.1 59.4 229.0 94.0" stroke="#fbfbfb" stroke-width="0.93" fill="none" opacity="0.75"/><path d="M343.3 56.0Q250.1 56.0 232.8 96.6" stroke="#fbfbfb" stroke-width="1.39" fill="none" opacity="0.75"/><path d="M330.3 54.1Q246.5 56.1 229.9 108.1" stroke="#fbfbfb" stroke-width="1.12" fill="none" opacity="0.75"/><path d="M331.8 53.8Q243.3 55.1 225.8 125.5" stroke="#fbfbfb" stroke-width="1.42" fill="none" opacity="0.75"/><path d="M343.8 52.3Q235.5 50.8 217.3 129.8" stroke="#fbfbfb" stroke-width="1.30" fill="none" opacity="0.75"/></g>
<path d="M288.0 201.0C288.5 197.5 289.8 187.2 291.0 180.0C292.2 172.8 293.8 162.5 295.0 158.0C296.2 153.5 297.3 150.5 298.0 153.0C298.7 155.5 298.2 165.0 299.0 173.0C299.8 181.0 302.3 196.3 303.0 201.0Z" fill="#eeeeee" filter="url(#b1)"/>
<path d="M298.0 152.0C298.0 156.0 297.0 168.0 298.0 176.0C299.0 184.0 303.0 196.0 304.0 200.0" stroke="#333" stroke-width="1.8" fill="none" filter="url(#b1)"/>
<path d="M295.0 158.0C294.3 161.7 292.2 172.8 291.0 180.0C289.8 187.2 288.5 197.5 288.0 201.0" stroke="#555" stroke-width="1.2" fill="none" filter="url(#b1)"/>
<g filter="url(#b1)"><path d="M415.4 221.5C424.7 261.6 414.0 301.6 414.3 342.9" stroke="#555" stroke-width="1.30" fill="none" opacity="0.68"/><path d="M420.0 220.8C427.6 250.3 398.2 279.8 408.5 310.1" stroke="#555" stroke-width="1.48" fill="none" opacity="0.45"/><path d="M419.5 229.2C429.3 265.9 409.4 302.6 414.1 340.4" stroke="#444" stroke-width="1.44" fill="none" opacity="0.69"/><path d="M450.1 221.8C453.4 259.7 436.0 297.6 442.3 336.6" stroke="#3a3a3a" stroke-width="0.75" fill="none" opacity="0.51"/><path d="M441.3 210.7C449.4 247.7 416.4 284.7 422.5 322.9" stroke="#555" stroke-width="1.28" fill="none" opacity="0.58"/><path d="M437.7 217.7C448.4 247.8 421.6 277.8 418.7 308.8" stroke="#555" stroke-width="1.40" fill="none" opacity="0.70"/><path d="M467.9 213.5C478.1 252.1 458.2 290.7 456.5 330.4" stroke="#3a3a3a" stroke-width="1.06" fill="none" opacity="0.45"/><path d="M423.6 231.3C433.8 262.4 408.0 293.4 409.3 325.5" stroke="#3a3a3a" stroke-width="1.43" fill="none" opacity="0.84"/><path d="M433.2 229.2C443.1 264.8 422.2 300.3 419.3 337.0" stroke="#444" stroke-width="0.78" fill="none" opacity="0.66"/><path d="M433.3 235.7C437.5 261.6 418.4 287.4 426.3 314.1" stroke="#555" stroke-width="0.77" fill="none" opacity="0.68"/><path d="M462.5 222.6C465.2 262.8 460.4 302.9 458.7 344.3" stroke="#2a2a2a" stroke-width="0.79" fill="none" opacity="0.58"/><path d="M448.5 217.0C456.1 249.1 412.7 281.1 423.6 314.2" stroke="#555" stroke-width="1.13" fill="none" opacity="0.47"/><path d="M467.0 235.2C476.2 266.6 446.8 298.0 455.5 330.3" stroke="#3a3a3a" stroke-width="0.87" fill="none" opacity="0.67"/><path d="M444.8 234.0C455.0 261.3 428.2 288.6 436.7 316.7" stroke="#3a3a3a" stroke-width="1.48" fill="none" opacity="0.47"/><path d="M428.3 232.4C439.5 260.3 411.6 288.1 419.6 316.8" stroke="#444" stroke-width="1.01" fill="none" opacity="0.52"/><path d="M421.2 217.5C428.5 255.0 404.9 292.4 415.1 331.0" stroke="#444" stroke-width="1.22" fill="none" opacity="0.84"/><path d="M454.3 227.6C465.9 257.2 433.3 286.8 445.6 317.3" stroke="#2a2a2a" stroke-width="1.36" fill="none" opacity="0.65"/><path d="M427.6 215.3C437.5 251.6 410.6 287.9 410.4 325.3" stroke="#2a2a2a" stroke-width="1.16" fill="none" opacity="0.41"/><path d="M446.9 208.5C450.8 255.6 431.4 302.7 436.6 351.3" stroke="#555" stroke-width="1.06" fill="none" opacity="0.78"/><path d="M432.2 230.5C442.1 269.0 413.9 307.4 418.0 347.0" stroke="#2a2a2a" stroke-width="1.30" fill="none" opacity="0.83"/><path d="M462.0 228.7C470.1 259.4 432.9 290.1 442.6 321.7" stroke="#2a2a2a" stroke-width="0.77" fill="none" opacity="0.57"/><path d="M445.7 216.9C456.4 257.3 430.0 297.7 426.7 339.3" stroke="#555" stroke-width="0.84" fill="none" opacity="0.79"/><path d="M414.0 213.7C421.6 252.7 402.8 291.7 403.7 331.8" stroke="#3a3a3a" stroke-width="0.83" fill="none" opacity="0.57"/><path d="M416.4 232.8C420.2 258.6 385.9 284.4 394.5 311.0" stroke="#2a2a2a" stroke-width="1.11" fill="none" opacity="0.47"/><path d="M464.7 223.4C471.2 254.2 438.5 285.0 444.4 316.8" stroke="#444" stroke-width="0.80" fill="none" opacity="0.57"/><path d="M443.5 218.9C448.8 249.8 440.2 280.6 437.4 312.4" stroke="#2a2a2a" stroke-width="1.31" fill="none" opacity="0.64"/><path d="M457.8 209.8C468.6 243.8 429.0 277.8 437.2 312.9" stroke="#3a3a3a" stroke-width="0.72" fill="none" opacity="0.44"/><path d="M424.3 219.5C426.9 253.0 423.4 286.5 424.0 321.0" stroke="#555" stroke-width="1.25" fill="none" opacity="0.57"/><path d="M427.8 232.6C433.2 270.9 406.6 309.2 414.8 348.6" stroke="#2a2a2a" stroke-width="1.30" fill="none" opacity="0.80"/><path d="M432.7 218.9C440.3 260.9 421.8 302.8 429.3 346.0" stroke="#555" stroke-width="0.81" fill="none" opacity="0.43"/><path d="M463.1 228.2C465.5 261.6 454.4 295.1 451.7 329.5" stroke="#555" stroke-width="1.14" fill="none" opacity="0.64"/><path d="M435.1 208.9C438.5 243.3 430.8 277.7 432.7 313.1" stroke="#2a2a2a" stroke-width="1.44" fill="none" opacity="0.42"/><path d="M408.5 230.9C418.2 265.1 378.9 299.3 390.1 334.6" stroke="#3a3a3a" stroke-width="1.47" fill="none" opacity="0.76"/><path d="M413.0 213.4C422.8 253.9 401.2 294.3 398.5 335.9" stroke="#2a2a2a" stroke-width="0.99" fill="none" opacity="0.80"/><path d="M450.7 224.0C462.3 260.5 430.0 296.9 443.9 334.5" stroke="#3a3a3a" stroke-width="1.14" fill="none" opacity="0.65"/><path d="M410.4 232.5C412.6 266.8 392.7 301.0 397.9 336.3" stroke="#2a2a2a" stroke-width="1.08" fill="none" opacity="0.44"/><path d="M431.9 227.0C439.3 261.0 424.2 295.1 423.0 330.2" stroke="#3a3a3a" stroke-width="1.16" fill="none" opacity="0.64"/><path d="M442.3 233.1C448.6 261.4 434.1 289.7 440.7 318.9" stroke="#555" stroke-width="1.27" fill="none" opacity="0.64"/><path d="M466.5 212.7C471.9 248.1 437.9 283.5 444.7 320.0" stroke="#555" stroke-width="0.75" fill="none" opacity="0.64"/><path d="M429.4 224.0C438.8 256.6 418.4 289.3 420.0 323.0" stroke="#444" stroke-width="1.08" fill="none" opacity="0.61"/><path d="M423.5 220.9C434.1 252.7 416.4 284.5 414.6 317.3" stroke="#3a3a3a" stroke-width="1.39" fill="none" opacity="0.50"/><path d="M433.0 225.3C444.2 262.2 409.7 299.1 416.7 337.1" stroke="#2a2a2a" stroke-width="1.46" fill="none" opacity="0.80"/><path d="M431.6 232.1C433.8 270.2 412.2 308.3 411.0 347.5" stroke="#2a2a2a" stroke-width="1.07" fill="none" opacity="0.84"/><path d="M426.6 222.1C432.7 254.0 393.4 285.9 402.8 318.8" stroke="#555" stroke-width="0.90" fill="none" opacity="0.41"/><path d="M464.9 223.9C476.2 261.2 448.9 298.5 445.9 336.9" stroke="#555" stroke-width="1.43" fill="none" opacity="0.74"/><path d="M427.0 215.4C429.6 246.8 399.2 278.2 403.3 310.5" stroke="#3a3a3a" stroke-width="0.78" fill="none" opacity="0.81"/><path d="M415.9 217.1C427.8 248.4 397.3 279.7 396.9 311.9" stroke="#3a3a3a" stroke-width="1.06" fill="none" opacity="0.51"/><path d="M422.4 231.9C432.6 262.6 416.4 293.3 421.8 325.0" stroke="#555" stroke-width="1.03" fill="none" opacity="0.65"/><path d="M458.5 233.5C466.3 266.9 420.7 300.4 432.0 334.9" stroke="#3a3a3a" stroke-width="0.97" fill="none" opacity="0.58"/><path d="M459.2 212.2C466.6 257.4 436.8 302.6 448.5 349.2" stroke="#3a3a3a" stroke-width="1.35" fill="none" opacity="0.79"/><path d="M460.3 206.2C465.9 249.7 437.4 293.1 451.1 337.9" stroke="#3a3a3a" stroke-width="0.91" fill="none" opacity="0.51"/><path d="M416.0 235.8C420.3 263.4 396.5 291.0 408.7 319.5" stroke="#2a2a2a" stroke-width="0.96" fill="none" opacity="0.54"/><path d="M435.8 218.9C445.8 253.6 417.1 288.4 427.8 324.2" stroke="#2a2a2a" stroke-width="1.24" fill="none" opacity="0.44"/><path d="M443.6 208.3C454.1 254.4 411.5 300.4 424.0 347.8" stroke="#3a3a3a" stroke-width="1.08" fill="none" opacity="0.61"/><path d="M452.0 219.5C459.5 256.4 432.5 293.2 430.4 331.2" stroke="#444" stroke-width="0.96" fill="none" opacity="0.50"/><path d="M449.7 213.9C455.7 261.5 443.4 309.0 440.5 358.0" stroke="#3a3a3a" stroke-width="1.13" fill="none" opacity="0.75"/><path d="M416.4 232.7C419.6 258.7 390.7 284.7 401.5 311.6" stroke="#3a3a3a" stroke-width="1.20" fill="none" opacity="0.82"/><path d="M446.2 208.3C448.5 248.3 416.5 288.3 421.1 329.6" stroke="#444" stroke-width="0.86" fill="none" opacity="0.79"/><path d="M438.5 217.4C443.1 256.3 428.9 295.1 428.9 335.1" stroke="#2a2a2a" stroke-width="1.45" fill="none" opacity="0.83"/><path d="M457.4 207.9C466.5 241.1 450.1 274.4 446.9 308.7" stroke="#2a2a2a" stroke-width="1.32" fill="none" opacity="0.58"/><path d="M440.8 220.0C452.0 264.2 438.7 308.4 439.4 354.0" stroke="#3a3a3a" stroke-width="0.81" fill="none" opacity="0.42"/><path d="M461.2 226.2C472.4 257.6 437.3 289.0 441.8 321.4" stroke="#2a2a2a" stroke-width="0.93" fill="none" opacity="0.80"/><path d="M413.2 208.3C420.5 254.2 403.2 300.0 401.7 347.3" stroke="#3a3a3a" stroke-width="1.35" fill="none" opacity="0.76"/><path d="M454.5 206.4C464.8 253.8 425.2 301.3 429.9 350.1" stroke="#444" stroke-width="1.02" fill="none" opacity="0.50"/><path d="M452.0 228.0C463.7 265.9 434.6 303.7 438.4 342.7" stroke="#444" stroke-width="1.49" fill="none" opacity="0.75"/><path d="M469.3 208.6C474.6 245.2 451.9 281.7 459.8 319.3" stroke="#2a2a2a" stroke-width="0.98" fill="none" opacity="0.70"/><path d="M442.6 212.4C446.6 244.0 428.6 275.7 424.9 308.4" stroke="#444" stroke-width="1.30" fill="none" opacity="0.72"/><path d="M461.7 233.1C467.8 267.3 448.3 301.5 452.1 336.7" stroke="#2a2a2a" stroke-width="0.77" fill="none" opacity="0.45"/><path d="M442.4 233.6C444.7 269.6 405.9 305.6 419.2 342.7" stroke="#444" stroke-width="1.36" fill="none" opacity="0.68"/><path d="M424.2 218.6C434.8 250.6 404.6 282.5 407.3 315.4" stroke="#444" stroke-width="1.06" fill="none" opacity="0.83"/><path d="M440.8 213.0C451.9 249.3 419.5 285.6 421.5 323.1" stroke="#555" stroke-width="1.22" fill="none" opacity="0.73"/><path d="M444.4 208.4C452.8 253.4 444.2 298.4 442.9 344.7" stroke="#444" stroke-width="1.10" fill="none" opacity="0.40"/><path d="M424.6 212.6C429.0 248.3 392.9 284.1 401.1 321.0" stroke="#3a3a3a" stroke-width="0.91" fill="none" opacity="0.55"/><path d="M418.9 215.9C427.4 257.2 397.7 298.5 410.2 341.1" stroke="#3a3a3a" stroke-width="1.07" fill="none" opacity="0.49"/><path d="M462.3 209.9C465.5 251.5 439.2 293.2 447.4 336.1" stroke="#444" stroke-width="1.20" fill="none" opacity="0.68"/><path d="M429.2 206.5C440.3 254.3 412.4 302.0 425.1 351.2" stroke="#2a2a2a" stroke-width="0.84" fill="none" opacity="0.56"/><path d="M424.9 232.2C436.3 263.5 412.4 294.8 421.7 327.1" stroke="#2a2a2a" stroke-width="1.24" fill="none" opacity="0.51"/><path d="M429.7 231.5C434.5 259.0 407.4 286.5 409.8 314.8" stroke="#444" stroke-width="1.12" fill="none" opacity="0.78"/><path d="M452.8 223.1C456.3 255.1 417.8 287.1 430.4 320.1" stroke="#555" stroke-width="1.26" fill="none" opacity="0.54"/><path d="M453.5 208.0C462.3 241.3 446.2 274.6 449.8 308.9" stroke="#2a2a2a" stroke-width="0.78" fill="none" opacity="0.57"/><path d="M465.5 246.7C473.1 275.7 442.9 304.7 446.8 334.5" stroke="#fafafa" stroke-width="1.80" fill="none" opacity="0.75"/><path d="M448.9 236.9C460.1 270.2 431.4 303.6 444.6 338.1" stroke="#fafafa" stroke-width="1.10" fill="none" opacity="0.75"/><path d="M419.6 226.9C426.3 257.5 417.4 288.1 418.2 319.5" stroke="#fafafa" stroke-width="0.87" fill="none" opacity="0.75"/><path d="M456.5 222.4C462.8 263.3 436.3 304.3 437.0 346.4" stroke="#fafafa" stroke-width="1.51" fill="none" opacity="0.75"/><path d="M463.4 214.5C471.9 250.3 437.1 286.1 448.1 323.0" stroke="#fafafa" stroke-width="1.63" fill="none" opacity="0.75"/><path d="M427.8 215.6C439.5 250.1 419.8 284.5 425.2 320.0" stroke="#fafafa" stroke-width="1.08" fill="none" opacity="0.75"/><path d="M431.3 229.1C436.9 253.2 411.0 277.4 422.2 302.3" stroke="#fafafa" stroke-width="1.58" fill="none" opacity="0.75"/><path d="M428.5 234.2C440.2 257.7 426.6 281.2 424.3 305.5" stroke="#fafafa" stroke-width="1.02" fill="none" opacity="0.75"/><path d="M426.9 232.7C429.3 262.9 413.6 293.0 416.9 324.0" stroke="#fafafa" stroke-width="1.64" fill="none" opacity="0.75"/><path d="M425.7 238.2C433.3 274.4 407.9 310.7 405.7 348.0" stroke="#fafafa" stroke-width="1.11" fill="none" opacity="0.75"/><path d="M434.9 226.2C442.1 253.2 412.7 280.2 422.5 308.1" stroke="#fafafa" stroke-width="1.28" fill="none" opacity="0.75"/><path d="M422.6 232.2C433.3 261.6 426.1 291.1 422.3 321.5" stroke="#fafafa" stroke-width="1.31" fill="none" opacity="0.75"/><path d="M449.4 215.5C456.4 244.4 431.7 273.3 441.7 303.0" stroke="#fafafa" stroke-width="0.88" fill="none" opacity="0.75"/><path d="M461.6 242.8C471.9 263.1 454.8 283.4 456.2 304.3" stroke="#fafafa" stroke-width="1.00" fill="none" opacity="0.75"/><path d="M440.7 220.9C446.6 246.4 421.1 272.0 422.1 298.3" stroke="#fafafa" stroke-width="1.53" fill="none" opacity="0.75"/><path d="M426.9 222.9C437.4 252.5 396.5 282.1 406.0 312.6" stroke="#fafafa" stroke-width="1.44" fill="none" opacity="0.75"/><path d="M465.9 234.6C469.2 271.2 446.5 307.9 460.4 345.7" stroke="#fafafa" stroke-width="1.01" fill="none" opacity="0.75"/><path d="M456.0 223.0C461.2 248.6 445.9 274.2 451.6 300.6" stroke="#fafafa" stroke-width="1.03" fill="none" opacity="0.75"/><path d="M422.5 240.3C427.0 261.2 423.5 282.1 419.9 303.7" stroke="#fafafa" stroke-width="1.02" fill="none" opacity="0.75"/><path d="M459.5 224.0C463.4 254.7 428.8 285.3 440.1 316.9" stroke="#fafafa" stroke-width="1.75" fill="none" opacity="0.75"/><path d="M436.4 229.9C448.3 253.8 402.4 277.6 413.5 302.2" stroke="#fafafa" stroke-width="1.54" fill="none" opacity="0.75"/><path d="M414.2 224.3C425.8 261.4 402.6 298.4 407.2 336.6" stroke="#fafafa" stroke-width="0.90" fill="none" opacity="0.75"/><path d="M454.4 217.4C463.9 251.8 441.5 286.2 440.4 321.7" stroke="#fafafa" stroke-width="0.89" fill="none" opacity="0.75"/><path d="M426.3 227.0C434.3 254.3 406.5 281.6 410.5 309.8" stroke="#fafafa" stroke-width="0.85" fill="none" opacity="0.75"/><path d="M428.8 234.9C440.3 269.3 414.4 303.7 424.1 339.2" stroke="#fafafa" stroke-width="1.29" fill="none" opacity="0.75"/><path d="M424.4 213.2C433.3 253.8 407.6 294.5 404.3 336.4" stroke="#fafafa" stroke-width="0.88" fill="none" opacity="0.75"/><path d="M421.1 220.3C426.5 247.5 410.4 274.7 420.1 302.7" stroke="#fafafa" stroke-width="1.78" fill="none" opacity="0.75"/><path d="M457.2 219.8C459.5 254.0 428.1 288.2 440.3 323.4" stroke="#fafafa" stroke-width="0.98" fill="none" opacity="0.75"/><path d="M414.9 223.1C420.9 254.1 404.8 285.0 410.2 316.9" stroke="#fafafa" stroke-width="0.83" fill="none" opacity="0.75"/><path d="M461.2 228.8C467.8 262.8 428.0 296.9 435.1 331.9" stroke="#fafafa" stroke-width="1.40" fill="none" opacity="0.75"/><path d="M431.8 242.4C435.3 261.0 422.9 279.5 421.2 298.6" stroke="#fafafa" stroke-width="1.06" fill="none" opacity="0.75"/><path d="M442.0 243.3C445.2 262.9 427.1 282.5 438.7 302.6" stroke="#fafafa" stroke-width="0.83" fill="none" opacity="0.75"/><path d="M461.1 241.5C464.5 265.6 431.1 289.7 439.6 314.5" stroke="#fafafa" stroke-width="1.48" fill="none" opacity="0.75"/><path d="M430.8 233.5C441.6 255.2 412.9 276.9 421.5 299.3" stroke="#fafafa" stroke-width="1.42" fill="none" opacity="0.75"/><path d="M424.2 226.2C430.8 251.4 406.3 276.5 406.1 302.5" stroke="#fafafa" stroke-width="0.92" fill="none" opacity="0.75"/><path d="M439.0 322.3C441.9 344.9 415.7 369.8 419.9 378.9" stroke="#555" stroke-width="1.18" fill="none" opacity="0.61"/><path d="M424.9 306.6C422.9 332.9 415.0 368.5 420.8 372.5" stroke="#666" stroke-width="0.82" fill="none" opacity="0.62"/><path d="M429.5 298.0C431.2 326.3 403.7 365.6 409.1 368.7" stroke="#666" stroke-width="1.20" fill="none" opacity="0.41"/><path d="M435.1 321.4C434.3 334.8 423.5 347.3 422.6 354.8" stroke="#3a3a3a" stroke-width="0.95" fill="none" opacity="0.74"/><path d="M468.0 324.5C468.6 351.5 458.7 385.8 457.2 392.0" stroke="#666" stroke-width="0.92" fill="none" opacity="0.75"/><path d="M450.3 288.3C457.8 323.1 421.9 364.5 424.5 375.3" stroke="#3a3a3a" stroke-width="1.29" fill="none" opacity="0.53"/><path d="M453.2 324.5C460.1 347.3 443.8 377.3 443.6 381.4" stroke="#3a3a3a" stroke-width="1.41" fill="none" opacity="0.43"/><path d="M460.1 309.7C458.9 334.9 448.6 368.9 450.2 372.7" stroke="#666" stroke-width="1.38" fill="none" opacity="0.46"/><path d="M440.4 298.2C444.1 323.7 422.0 356.8 421.0 361.9" stroke="#666" stroke-width="0.98" fill="none" opacity="0.46"/><path d="M437.0 314.3C444.8 334.1 406.7 354.1 413.5 363.9" stroke="#555" stroke-width="0.88" fill="none" opacity="0.44"/><path d="M416.9 327.9C424.4 353.9 397.0 383.0 401.9 393.0" stroke="#3a3a3a" stroke-width="1.22" fill="none" opacity="0.47"/><path d="M449.7 293.2C453.4 330.7 425.1 378.0 429.0 387.1" stroke="#555" stroke-width="0.90" fill="none" opacity="0.78"/><path d="M447.4 315.0C450.4 334.3 419.3 357.6 428.5 363.3" stroke="#555" stroke-width="1.48" fill="none" opacity="0.51"/><path d="M456.3 314.0C457.0 341.5 440.3 375.2 440.3 382.7" stroke="#3a3a3a" stroke-width="1.00" fill="none" opacity="0.56"/><path d="M429.7 291.1C432.6 326.8 420.1 369.6 423.6 380.4" stroke="#3a3a3a" stroke-width="0.84" fill="none" opacity="0.43"/><path d="M416.8 290.5C422.8 328.9 399.5 384.4 408.7 386.6" stroke="#666" stroke-width="1.52" fill="none" opacity="0.79"/><path d="M424.6 308.6C423.3 332.1 399.9 355.8 403.9 367.4" stroke="#3a3a3a" stroke-width="1.09" fill="none" opacity="0.51"/><path d="M463.9 290.1C462.6 329.0 452.9 378.8 451.5 387.2" stroke="#555" stroke-width="1.59" fill="none" opacity="0.52"/><path d="M430.2 319.5C430.3 341.6 413.2 367.2 413.8 374.8" stroke="#666" stroke-width="1.32" fill="none" opacity="0.43"/><path d="M412.6 323.9C420.3 343.1 391.4 363.6 399.1 371.9" stroke="#3a3a3a" stroke-width="1.05" fill="none" opacity="0.61"/><path d="M439.1 293.2C446.4 323.1 422.9 362.3 431.2 367.8" stroke="#3a3a3a" stroke-width="1.24" fill="none" opacity="0.73"/><path d="M456.4 313.2C457.8 332.0 435.6 349.5 441.7 360.1" stroke="#3a3a3a" stroke-width="1.03" fill="none" opacity="0.80"/><path d="M411.5 290.5C419.0 316.7 391.8 350.2 397.5 356.1" stroke="#3a3a3a" stroke-width="1.23" fill="none" opacity="0.65"/><path d="M434.4 306.4C437.6 329.5 424.9 360.7 429.1 364.1" stroke="#3a3a3a" stroke-width="1.22" fill="none" opacity="0.43"/><path d="M432.4 289.7C438.9 329.5 414.9 377.5 416.5 389.2" stroke="#666" stroke-width="0.92" fill="none" opacity="0.50"/></g>
<g filter="url(#b1)"><path d="M225.9 221.9Q224.9 281.2 251.8 320.5" stroke="#444" stroke-width="1.22" fill="none" opacity="0.51"/><path d="M233.3 207.8Q231.9 276.1 251.7 324.5" stroke="#444" stroke-width="1.38" fill="none" opacity="0.42"/><path d="M229.5 212.1Q228.8 274.6 267.7 317.0" stroke="#444" stroke-width="1.05" fill="none" opacity="0.61"/><path d="M223.9 219.7Q221.8 284.5 249.2 329.2" stroke="#444" stroke-width="1.17" fill="none" opacity="0.62"/><path d="M230.1 219.3Q226.2 274.9 255.8 310.6" stroke="#444" stroke-width="0.92" fill="none" opacity="0.47"/><path d="M222.6 219.5Q219.9 287.4 246.1 335.2" stroke="#444" stroke-width="1.00" fill="none" opacity="0.47"/><path d="M222.0 220.1Q225.1 277.8 251.5 315.5" stroke="#444" stroke-width="1.34" fill="none" opacity="0.57"/><path d="M228.5 219.4Q227.2 275.1 254.5 310.7" stroke="#444" stroke-width="1.56" fill="none" opacity="0.55"/><path d="M228.9 205.2Q227.7 279.6 263.3 333.9" stroke="#444" stroke-width="1.10" fill="none" opacity="0.61"/><path d="M223.5 208.2Q223.6 278.4 241.7 328.6" stroke="#444" stroke-width="1.56" fill="none" opacity="0.78"/><path d="M232.2 226.6Q228.5 277.7 268.2 308.7" stroke="#444" stroke-width="1.58" fill="none" opacity="0.75"/><path d="M228.6 218.5Q225.1 279.6 254.5 320.7" stroke="#444" stroke-width="1.24" fill="none" opacity="0.51"/></g>
<path d="M228.0 193.0C233.3 193.2 249.8 195.2 260.0 194.0C270.2 192.8 284.2 187.3 289.0 186.0" stroke="#777" stroke-width="10" fill="none" opacity="0.3" filter="url(#b4)"/>
<path d="M306.0 183.0C310.5 182.5 323.5 178.7 333.0 180.0C342.5 181.3 353.5 186.7 363.0 191.0C372.5 195.3 381.7 201.2 390.0 206.0C398.3 210.8 409.2 217.7 413.0 220.0" stroke="#666" stroke-width="14" fill="none" opacity="0.35" filter="url(#b4)"/>
<path d="M318.0 108.0C323.0 113.0 338.0 126.3 348.0 138.0C358.0 149.7 373.0 171.3 378.0 178.0" stroke="#888" stroke-width="16" fill="none" opacity="0.3" filter="url(#b4)"/>
<path d="M220.0 238.0C219.7 230.5 218.2 204.8 218.0 193.0C217.8 181.2 218.0 176.8 219.0 167.0C220.0 157.2 221.5 143.3 224.0 134.0C226.5 124.7 230.2 118.5 234.0 111.0C237.8 103.5 242.2 95.5 247.0 89.0C251.8 82.5 257.5 76.8 263.0 72.0C268.5 67.2 274.0 63.2 280.0 60.0C286.0 56.8 291.8 54.7 299.0 52.5C306.2 50.3 317.2 48.1 323.0 47.0C328.8 45.9 332.2 46.2 334.0 46.0" stroke="#101010" stroke-width="3.2" fill="none" filter="url(#b1)"/>
<path d="M340.0 47.0C343.0 47.3 352.3 48.1 358.0 49.0C363.7 49.9 367.0 50.4 374.0 52.5C381.0 54.6 392.3 57.8 400.0 61.6C407.7 65.4 414.5 70.4 420.0 75.0C425.5 79.6 429.3 83.8 433.0 89.0C436.7 94.2 439.5 99.7 442.0 106.0C444.5 112.3 446.3 116.8 448.0 127.0C449.7 137.2 450.3 156.8 452.0 167.0C453.7 177.2 457.0 184.5 458.0 188.0" stroke="#1a1a1a" stroke-width="2.6" fill="none" filter="url(#b1)"/>
<path d="M219.0 213.0C219.5 218.8 219.8 237.8 222.0 248.0C224.2 258.2 228.0 265.7 232.0 274.0C236.0 282.3 240.2 291.3 246.0 298.0C251.8 304.7 260.0 309.2 267.0 314.0C274.0 318.8 284.5 324.8 288.0 327.0" stroke="#222" stroke-width="3" fill="none" filter="url(#b1)"/>
<path d="M236.0 207.0C240.0 206.8 253.0 206.5 260.0 206.0C267.0 205.5 273.2 205.0 278.0 204.0C282.8 203.0 287.2 200.7 289.0 200.0" stroke="#333" stroke-width="2" fill="none" opacity="0.4" filter="url(#b1)"/>
<path d="M302.0 200.0C305.8 199.3 315.7 195.2 325.0 196.0C334.3 196.8 347.7 201.2 358.0 205.0C368.3 208.8 380.0 215.2 387.0 219.0C394.0 222.8 397.8 226.5 400.0 228.0" stroke="#222" stroke-width="2.2" fill="none" opacity="0.5" filter="url(#b1)"/>
<path d="M381.0 218.0C385.5 220.2 402.8 224.5 408.0 231.0C413.2 237.5 412.3 249.3 412.0 257.0C411.7 264.7 409.0 270.5 406.0 277.0C403.0 283.5 398.8 290.2 394.0 296.0C389.2 301.8 382.5 308.2 377.0 312.0C371.5 315.8 367.2 316.0 361.0 319.0C354.8 322.0 348.0 327.2 340.0 330.0C332.0 332.8 320.8 336.3 313.0 336.0C305.2 335.7 300.7 331.8 293.0 328.0C285.3 324.2 271.3 315.5 267.0 313.0" stroke="#1a1a1a" stroke-width="2.6" fill="none" filter="url(#b1)"/>
<path d="M247.0 219.0C249.7 219.3 257.3 220.8 263.0 221.0C268.7 221.2 278.7 221.4 281.0 220.0C283.3 218.6 279.0 214.1 277.0 212.5C275.0 210.9 272.2 210.3 268.7 210.3C265.2 210.3 258.1 212.1 256.0 212.5Z" fill="#666" filter="url(#b1)"/>
<path d="M325.0 220.5C327.5 220.6 333.7 221.6 340.0 221.0C346.3 220.4 361.7 219.1 363.0 217.0C364.3 214.9 352.6 210.1 348.0 208.5C343.4 206.9 338.7 207.1 335.4 207.7C332.1 208.3 329.2 211.3 328.0 212.0Z" fill="#666" filter="url(#b1)"/>
<path d="M247.0 218.5C248.5 217.5 252.4 213.9 256.0 212.5C259.6 211.1 265.2 210.0 268.7 210.0C272.2 210.0 274.9 210.9 277.0 212.5C279.1 214.1 280.8 218.3 281.5 219.5" stroke="#0e0e0e" stroke-width="3.2" fill="none" filter="url(#b1)"/>
<path d="M250.0 219.5C252.3 219.8 258.4 221.4 263.6 221.5C268.8 221.6 278.1 220.2 281.0 220.0" stroke="#555" stroke-width="1.6" fill="none" filter="url(#b1)"/>
<ellipse cx="270" cy="216" rx="7.5" ry="4.5" fill="#262626" filter="url(#b1)"/>
<circle cx="272" cy="215" r="1.5" fill="#ccc" filter="url(#b1)"/>
<path d="M324.5 220.5C325.1 219.1 326.2 214.2 328.0 212.0C329.8 209.8 332.1 208.1 335.4 207.5C338.7 206.9 343.3 207.0 348.0 208.5C352.7 210.0 360.9 215.2 363.5 216.5" stroke="#0e0e0e" stroke-width="3.2" fill="none" filter="url(#b1)"/>
<path d="M326.0 220.5C328.4 220.5 334.5 221.1 340.5 220.5C346.5 219.9 358.4 217.6 362.0 217.0" stroke="#333" stroke-width="2" fill="none" filter="url(#b1)"/>
<ellipse cx="342" cy="214.5" rx="9" ry="5" fill="#262626" filter="url(#b1)"/>
<circle cx="338" cy="213" r="1.6" fill="#ccc" filter="url(#b1)"/>
<ellipse cx="253" cy="263" rx="12" ry="25" fill="#e2e2e2" opacity="0.35" filter="url(#b4)"/>
<ellipse cx="393" cy="258" rx="10" ry="28" fill="#dedede" opacity="0.35" filter="url(#b4)"/>
<ellipse cx="299" cy="248" rx="14" ry="10" fill="#e4e4e4" opacity="0.45" filter="url(#b4)"/>
<path d="M278.0 241.0C277.7 242.5 275.5 247.7 276.0 250.0C276.5 252.3 279.3 253.8 281.0 255.0C282.7 256.2 285.2 256.7 286.0 257.0" stroke="#555" stroke-width="1.6" fill="none" filter="url(#b1)"/>
<path d="M282.0 255.0C283.3 255.2 287.2 255.2 290.0 256.0C292.8 256.8 295.5 259.7 299.0 259.7C302.5 259.7 307.7 256.8 310.9 255.8C314.1 254.9 316.8 254.3 318.0 254.0" stroke="#333" stroke-width="1.8" fill="none" filter="url(#b1)"/>
<path d="M319.0 241.0C319.7 242.3 323.2 246.7 323.0 249.0C322.8 251.3 318.8 254.0 318.0 255.0" stroke="#666" stroke-width="1.4" fill="none" filter="url(#b1)"/>
<path d="M265.0 263.0C264.3 264.8 260.5 270.2 261.0 274.0C261.5 277.8 266.8 284.0 268.0 286.0" stroke="#999" stroke-width="1.4" fill="none" filter="url(#b1)"/>
<path d="M279.0 283.0C282.2 283.0 291.5 283.0 298.0 283.0C304.5 283.0 310.8 283.2 318.0 283.0C325.2 282.8 338.3 280.5 341.0 282.0C343.7 283.5 339.2 289.0 334.0 292.0C328.8 295.0 317.7 299.7 310.0 300.0C302.3 300.3 291.7 295.0 288.0 294.0Z" fill="#c4c4c4" filter="url(#b1)"/>
<path d="M277.8 282.8C279.6 282.4 283.5 280.8 288.7 280.6C293.9 280.4 303.3 281.5 309.0 281.5C314.7 281.5 317.5 280.9 323.0 280.8C328.5 280.7 339.0 280.9 342.2 280.9" stroke="#151515" stroke-width="2.4" fill="none" filter="url(#b1)"/>
<path d="M299.0 296.7C300.8 296.8 306.1 297.8 310.0 297.5C313.9 297.2 320.3 295.6 322.4 295.2" stroke="#1a1a1a" stroke-width="2.4" fill="none" filter="url(#b1)"/>
<path d="M280.0 284.0C281.2 285.6 282.4 290.9 287.3 293.7C292.2 296.5 301.3 301.2 309.2 301.0C317.1 300.8 329.4 295.5 334.9 292.3C340.4 289.1 340.8 283.7 342.0 282.0" stroke="#555" stroke-width="1.6" fill="none" filter="url(#b1)"/>
<path d="M285.8 299.6C289.1 301.1 298.6 307.4 305.6 308.4C312.6 309.4 323.9 306.0 327.5 305.5" stroke="#aaa" stroke-width="1.6" fill="none" filter="url(#b1)"/>
<path d="M293.0 290.0C295.5 290.5 303.0 293.3 308.0 293.0C313.0 292.7 320.5 288.8 323.0 288.0" stroke="#888" stroke-width="1.2" fill="none" filter="url(#b1)"/>
<path d="M233.0 337.0C235.5 337.8 241.8 342.5 248.0 342.0C254.2 341.5 266.3 335.3 270.0 334.0" stroke="#444" stroke-width="2.2" fill="none" filter="url(#b1)"/>
<path d="M247.0 346.0C246.7 352.0 243.8 371.8 245.0 382.0C246.2 392.2 249.8 400.7 254.5 407.0C259.2 413.3 269.9 417.8 273.0 420.0" stroke="#777" stroke-width="1.8" fill="none" filter="url(#b2)"/>
<path d="M298.0 336.0C299.0 340.3 299.7 354.3 304.0 362.0C308.3 369.7 315.0 378.3 324.0 382.0C333.0 385.7 345.7 384.3 358.0 384.0C370.3 383.7 391.3 380.7 398.0 380.0" stroke="#666" stroke-width="2" fill="none" filter="url(#b1)"/>
<path d="M319.0 404.0C325.5 404.5 344.8 408.0 358.0 407.0C371.2 406.0 391.3 399.5 398.0 398.0" stroke="#888" stroke-width="1.6" fill="none" filter="url(#b1)"/>
<path d="M263.0 373.0C264.7 376.3 268.8 386.3 273.0 393.0C277.2 399.7 285.5 409.7 288.0 413.0" stroke="#ccc" stroke-width="2.5" fill="none" filter="url(#b2)"/>
<circle cx="308" cy="425" r="5" stroke="#777" stroke-width="1.6" fill="none" filter="url(#b1)"/>
<path d="M476.0 325.0C479.7 327.2 490.8 333.0 498.0 338.0C505.2 343.0 512.7 347.2 519.0 355.0C525.3 362.8 528.9 377.2 536.0 385.0C543.1 392.8 554.0 395.0 561.8 402.0C569.6 409.0 579.5 422.8 583.0 427.0" stroke="#777" stroke-width="1.6" fill="none" filter="url(#b1)"/>
<path d="M401.0 329.0C403.0 331.8 408.8 340.8 413.0 346.0C417.2 351.2 423.8 357.7 426.0 360.0" stroke="#555" stroke-width="1.6" fill="none" filter="url(#b1)"/>
<path d="M383.0 376.7C385.8 376.9 394.2 378.6 400.0 378.0C405.8 377.4 414.8 373.8 417.7 373.0" stroke="#333" stroke-width="2.0" fill="none" filter="url(#b1)"/>
<path d="M381.5 380.0C383.4 380.8 389.4 383.9 393.0 385.0C396.6 386.1 398.3 387.7 403.0 386.6C407.7 385.5 418.0 379.9 421.0 378.5" stroke="#333" stroke-width="2.2" fill="none" filter="url(#b1)"/>
<path d="M421.0 382.0C421.8 384.3 423.7 392.3 426.0 396.0C428.3 399.7 431.3 402.5 435.0 404.0C438.7 405.5 444.0 406.2 448.0 405.0C452.0 403.8 457.2 398.0 459.0 396.6" stroke="#444" stroke-width="2.0" fill="none" filter="url(#b1)"/>
<path d="M439.0 360.0C440.8 360.3 446.7 362.0 450.0 362.0C453.3 362.0 456.2 361.5 459.0 360.0C461.8 358.5 465.3 354.2 466.6 353.0" stroke="#444" stroke-width="1.8" fill="none" filter="url(#b1)"/>
<path d="M441.0 375.0C443.0 375.3 449.0 377.3 453.0 377.0C457.0 376.7 463.0 373.7 465.0 373.0" stroke="#555" stroke-width="1.6" fill="none" filter="url(#b1)"/>
<path d="M452.0 306.0C455.0 309.0 462.7 318.6 470.0 324.0C477.3 329.5 489.3 334.7 495.6 338.7C501.9 342.7 505.9 346.5 508.0 348.0" stroke="#777" stroke-width="1.6" fill="none" filter="url(#b1)"/>
<path d="M484.7 299.0C483.9 300.8 481.5 306.7 480.0 310.0C478.5 313.3 476.3 317.3 475.6 318.8" stroke="#666" stroke-width="1.8" fill="none" filter="url(#b1)"/>
<path d="M428.0 328.0C428.7 330.5 431.0 338.3 432.0 343.0C433.0 347.7 433.7 353.8 434.0 356.0" stroke="#444" stroke-width="1.8" fill="none" filter="url(#b1)"/>
<path d="M413.0 313.0C413.8 317.2 415.8 330.2 418.0 338.0C420.2 345.8 424.7 356.3 426.0 360.0" stroke="#666" stroke-width="1.4" fill="none" filter="url(#b1)"/>
<path d="M458.0 328.0C458.7 330.5 462.0 338.3 462.0 343.0C462.0 347.7 458.7 353.8 458.0 356.0" stroke="#777" stroke-width="1.4" fill="none" filter="url(#b1)"/>
<g filter="url(#b1)"><path d="M528.6 389.1Q535.4 383.1 539.8 384.2" stroke="#aaa" stroke-width="0.97" fill="none" opacity="0.45"/><path d="M481.2 367.0Q475.3 371.9 468.6 366.7" stroke="#bbb" stroke-width="1.10" fill="none" opacity="0.45"/><path d="M427.1 342.3Q423.0 345.7 418.6 333.6" stroke="#ccc" stroke-width="1.09" fill="none" opacity="0.45"/><path d="M446.0 425.3Q452.1 420.5 452.1 414.2" stroke="#ccc" stroke-width="1.51" fill="none" opacity="0.45"/><path d="M450.1 363.3Q450.8 366.6 440.7 373.7" stroke="#aaa" stroke-width="1.24" fill="none" opacity="0.45"/><path d="M403.0 403.4Q390.2 396.6 392.9 405.0" stroke="#bbb" stroke-width="0.98" fill="none" opacity="0.45"/><path d="M414.9 387.9Q412.5 388.6 413.0 380.1" stroke="#aaa" stroke-width="0.97" fill="none" opacity="0.45"/><path d="M410.4 348.9Q414.2 342.6 419.2 350.9" stroke="#ccc" stroke-width="0.94" fill="none" opacity="0.45"/><path d="M490.6 401.3Q500.3 397.2 504.1 396.4" stroke="#bbb" stroke-width="1.01" fill="none" opacity="0.45"/><path d="M543.3 422.5Q543.8 431.8 538.5 430.3" stroke="#ccc" stroke-width="1.55" fill="none" opacity="0.45"/><path d="M462.8 412.6Q472.3 405.1 466.5 405.8" stroke="#aaa" stroke-width="1.22" fill="none" opacity="0.45"/><path d="M403.5 390.5Q401.6 395.8 391.3 387.5" stroke="#aaa" stroke-width="1.24" fill="none" opacity="0.45"/><path d="M474.1 386.0Q476.6 378.8 473.0 383.9" stroke="#ccc" stroke-width="1.54" fill="none" opacity="0.45"/><path d="M479.4 369.5Q474.0 370.6 467.4 359.7" stroke="#bbb" stroke-width="1.09" fill="none" opacity="0.45"/><path d="M428.3 350.9Q429.6 355.0 427.4 343.8" stroke="#bbb" stroke-width="1.16" fill="none" opacity="0.45"/><path d="M528.0 372.9Q526.6 372.9 525.6 366.2" stroke="#999" stroke-width="1.49" fill="none" opacity="0.45"/><path d="M513.7 357.0Q508.0 355.1 509.1 363.9" stroke="#aaa" stroke-width="0.87" fill="none" opacity="0.45"/><path d="M497.8 419.7Q490.2 429.6 492.6 423.6" stroke="#bbb" stroke-width="1.47" fill="none" opacity="0.45"/><path d="M497.1 338.9Q497.7 343.4 500.1 346.2" stroke="#bbb" stroke-width="1.53" fill="none" opacity="0.45"/><path d="M425.5 354.5Q421.5 356.9 431.6 362.0" stroke="#999" stroke-width="1.58" fill="none" opacity="0.45"/><path d="M474.6 417.8Q460.6 423.0 460.3 418.4" stroke="#999" stroke-width="1.18" fill="none" opacity="0.45"/><path d="M498.1 353.0Q500.1 354.5 508.2 344.9" stroke="#999" stroke-width="1.53" fill="none" opacity="0.45"/><path d="M518.9 349.5Q505.4 346.9 506.1 354.2" stroke="#999" stroke-width="0.81" fill="none" opacity="0.45"/><path d="M451.6 345.5Q455.0 343.6 450.8 341.8" stroke="#aaa" stroke-width="0.94" fill="none" opacity="0.45"/><path d="M532.2 388.3Q529.8 379.8 533.0 380.4" stroke="#bbb" stroke-width="1.07" fill="none" opacity="0.45"/><path d="M408.2 370.8Q412.5 365.8 421.3 367.5" stroke="#999" stroke-width="1.31" fill="none" opacity="0.45"/><path d="M502.4 374.1Q500.0 372.0 509.1 376.2" stroke="#aaa" stroke-width="0.92" fill="none" opacity="0.45"/><path d="M438.0 345.3Q431.6 349.9 423.2 345.7" stroke="#bbb" stroke-width="1.01" fill="none" opacity="0.45"/><path d="M436.9 356.3Q430.7 367.2 428.9 365.8" stroke="#999" stroke-width="1.01" fill="none" opacity="0.45"/><path d="M543.6 403.0Q556.0 405.0 553.7 407.9" stroke="#999" stroke-width="1.21" fill="none" opacity="0.45"/><path d="M464.9 353.1Q461.1 342.5 464.8 344.3" stroke="#ccc" stroke-width="1.51" fill="none" opacity="0.45"/><path d="M523.5 360.1Q527.5 368.8 532.6 364.6" stroke="#999" stroke-width="1.26" fill="none" opacity="0.45"/><path d="M498.6 373.6Q494.0 369.9 498.5 373.8" stroke="#bbb" stroke-width="1.48" fill="none" opacity="0.45"/><path d="M501.3 383.4Q494.5 384.5 503.5 387.4" stroke="#ccc" stroke-width="0.96" fill="none" opacity="0.45"/><path d="M409.6 360.7Q419.3 359.9 419.4 349.5" stroke="#bbb" stroke-width="1.01" fill="none" opacity="0.45"/><path d="M453.8 378.1Q463.4 372.4 467.3 379.2" stroke="#aaa" stroke-width="1.38" fill="none" opacity="0.45"/><path d="M409.7 409.9Q415.2 415.7 411.5 413.3" stroke="#999" stroke-width="1.47" fill="none" opacity="0.45"/><path d="M506.9 341.7Q506.4 334.3 494.5 335.6" stroke="#999" stroke-width="1.44" fill="none" opacity="0.45"/><path d="M424.6 346.2Q431.7 335.0 437.1 336.1" stroke="#bbb" stroke-width="1.01" fill="none" opacity="0.45"/><path d="M449.6 404.0Q456.1 399.9 460.2 410.1" stroke="#ccc" stroke-width="1.21" fill="none" opacity="0.45"/><path d="M441.9 426.9Q451.8 437.4 446.6 435.4" stroke="#aaa" stroke-width="0.95" fill="none" opacity="0.45"/><path d="M506.4 383.1Q513.2 382.9 516.9 373.6" stroke="#999" stroke-width="1.34" fill="none" opacity="0.45"/><path d="M469.8 361.9Q470.7 361.3 473.0 359.4" stroke="#ccc" stroke-width="1.03" fill="none" opacity="0.45"/><path d="M425.7 348.0Q424.9 350.8 436.1 358.1" stroke="#999" stroke-width="1.59" fill="none" opacity="0.45"/><path d="M408.0 360.2Q404.1 354.0 408.0 348.6" stroke="#bbb" stroke-width="1.46" fill="none" opacity="0.45"/><path d="M536.5 350.2Q545.7 356.2 542.4 359.1" stroke="#ccc" stroke-width="1.47" fill="none" opacity="0.45"/><path d="M443.0 411.0Q444.0 401.1 430.4 400.1" stroke="#aaa" stroke-width="1.27" fill="none" opacity="0.45"/><path d="M517.1 404.8Q512.4 412.1 511.0 404.4" stroke="#ccc" stroke-width="1.50" fill="none" opacity="0.45"/><path d="M501.7 393.3Q499.5 398.2 488.5 402.6" stroke="#ccc" stroke-width="1.39" fill="none" opacity="0.45"/><path d="M437.7 357.3Q440.6 359.4 446.9 356.3" stroke="#bbb" stroke-width="0.97" fill="none" opacity="0.45"/><path d="M485.5 389.6Q487.9 395.8 484.3 389.8" stroke="#aaa" stroke-width="1.43" fill="none" opacity="0.45"/><path d="M415.9 361.1Q413.0 356.0 410.3 357.6" stroke="#bbb" stroke-width="1.39" fill="none" opacity="0.45"/><path d="M503.0 420.3Q505.2 419.8 492.8 423.4" stroke="#aaa" stroke-width="1.44" fill="none" opacity="0.45"/><path d="M419.7 409.8Q417.8 411.6 417.1 406.2" stroke="#ccc" stroke-width="1.53" fill="none" opacity="0.45"/><path d="M424.4 370.9Q414.4 362.1 409.6 363.7" stroke="#ccc" stroke-width="1.19" fill="none" opacity="0.45"/><path d="M496.7 358.1Q490.4 357.5 491.3 346.2" stroke="#bbb" stroke-width="1.40" fill="none" opacity="0.45"/><path d="M442.1 361.5Q452.5 359.7 448.0 353.0" stroke="#bbb" stroke-width="0.84" fill="none" opacity="0.45"/><path d="M461.5 425.3Q449.4 433.9 450.9 427.5" stroke="#bbb" stroke-width="0.94" fill="none" opacity="0.45"/><path d="M403.9 387.1Q392.4 390.1 391.3 379.6" stroke="#aaa" stroke-width="1.03" fill="none" opacity="0.45"/></g>
<rect x="0.5" y="0.5" width="639" height="426" fill="none" stroke="#fff"/>
</svg></div>

</body></html>
